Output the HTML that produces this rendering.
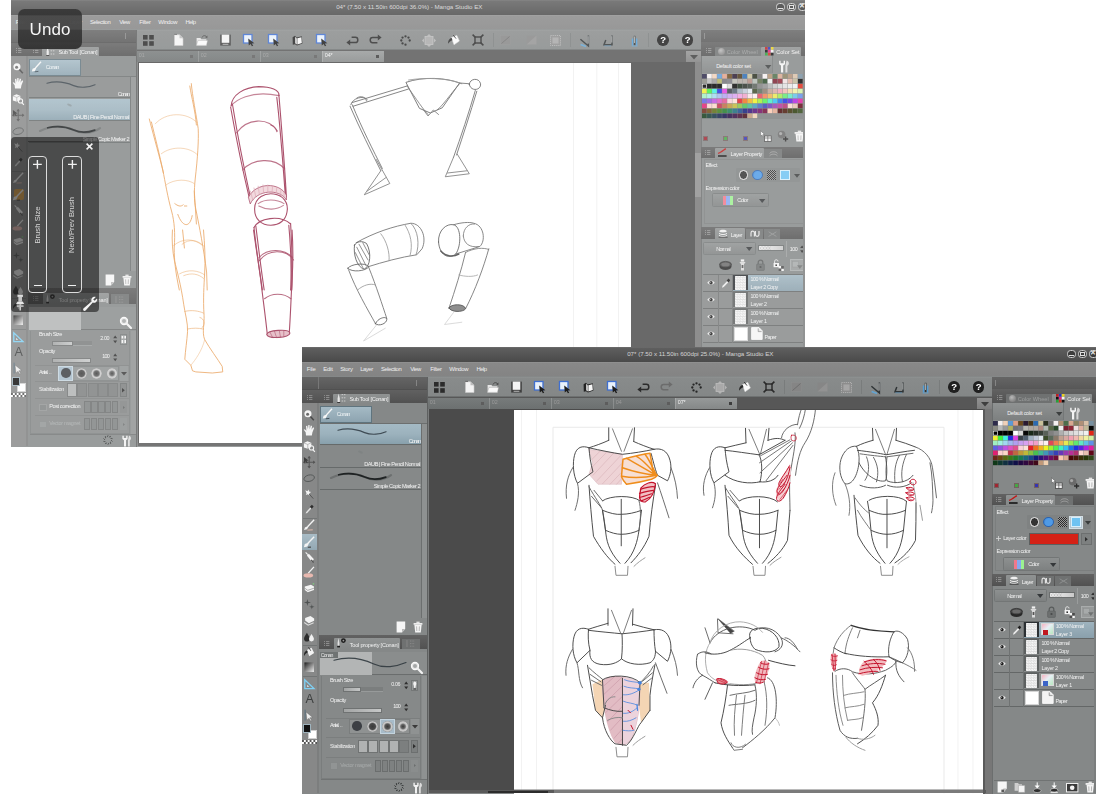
<!DOCTYPE html><html lang="en"><head><meta charset="utf-8"><title>Manga Studio EX</title><style>
html,body{margin:0;padding:0;background:#fff;}
body{width:1100px;height:800px;position:relative;overflow:hidden;font-family:"Liberation Sans",sans-serif;}
.win{position:absolute;width:794px;height:446.6px;overflow:hidden;background:#858888;}
.soft{filter:blur(0.45px);}
.win div,.win svg,.win span.t,.ov div,.ov svg,.ov span.t{position:absolute;box-sizing:border-box;}
.win svg,.ov svg{overflow:visible;}
span.t{white-space:nowrap;line-height:1;letter-spacing:-0.1px;}
.ov{position:absolute;left:0;top:0;width:1100px;height:800px;}
</style></head><body><div class="win" style="left:11.2px;top:0px;"><div class="soft" style="left:0;top:0;width:794px;height:447px;"><div style="left:0px;top:0px;width:795px;height:15.2px;background:linear-gradient(#707070 0,#5e5e5e 8%,#545454 55%,#4a4a4a);"></div><span class="t" style="left:325px;top:4.3px;font-size:6.2px;color:#d4d4d4;letter-spacing:-0.011px;">04* (7.50 x 11.50in 600dpi 36.0%) - Manga Studio EX</span><div style="left:765px;top:2.6px;width:9px;height:8.6px;border-radius:3.5px;background:#3c3c3c;border:0.8px solid #cfcfcf;"></div><div style="left:776px;top:2.6px;width:9px;height:8.6px;border-radius:3.5px;background:#3c3c3c;border:0.8px solid #cfcfcf;"></div><div style="left:787px;top:2.6px;width:9px;height:8.6px;border-radius:3.5px;background:#3c3c3c;border:0.8px solid #cfcfcf;"></div><div style="left:766.8px;top:7.8px;width:5.4px;height:1.6px;background:#e0e0e0;"></div><div style="left:778.3px;top:4.8px;width:4.6px;height:4.4px;border:1px solid #e0e0e0;"></div><span class="t" style="left:788.3px;top:2.8px;font-size:6.5px;color:#e8e8e8;font-weight:bold;">✕</span><div style="left:0px;top:15.2px;width:795px;height:14.3px;background:linear-gradient(#959595 0,#888 8%,#848484);"></div><span class="t" style="left:4.5px;top:20.4px;font-size:5.9px;color:#eeeeee;letter-spacing:-0.127px;">File</span><span class="t" style="left:21px;top:20.4px;font-size:5.9px;color:#eeeeee;letter-spacing:-0.167px;">Edit</span><span class="t" style="left:38px;top:20.4px;font-size:5.9px;color:#eeeeee;letter-spacing:-0.254px;">Story</span><span class="t" style="left:58px;top:20.4px;font-size:5.9px;color:#eeeeee;letter-spacing:-0.452px;">Layer</span><span class="t" style="left:78.7px;top:20.4px;font-size:5.9px;color:#eeeeee;letter-spacing:-0.419px;">Selection</span><span class="t" style="left:108px;top:20.4px;font-size:5.9px;color:#eeeeee;letter-spacing:-0.546px;">View</span><span class="t" style="left:128px;top:20.4px;font-size:5.9px;color:#eeeeee;letter-spacing:-0.269px;">Filter</span><span class="t" style="left:147px;top:20.4px;font-size:5.9px;color:#eeeeee;letter-spacing:-0.331px;">Window</span><span class="t" style="left:174.4px;top:20.4px;font-size:5.9px;color:#eeeeee;letter-spacing:-0.534px;">Help</span><div style="left:125px;top:29.5px;width:565px;height:20.7px;background:linear-gradient(#8f9292 0,#888b8b 8%,#848787);border-bottom:0.8px solid #6e7171;"></div><svg style="left:131.5px;top:34.5px;" width="11" height="11" viewBox="0 0 11 11"><rect x="0" y="0" width="4.6" height="4.6" fill="#2b2b2b"/><rect x="6.2" y="0" width="4.6" height="4.6" fill="#2b2b2b"/><rect x="0" y="6.2" width="4.6" height="4.6" fill="#2b2b2b"/><rect x="6.2" y="6.2" width="4.6" height="4.6" fill="#2b2b2b"/></svg><svg style="left:162.5px;top:34px;" width="10" height="12" viewBox="0 0 10 12"><path d="M0.5 0.8 L5.5 0.8 L9 4.2 L9 11.5 L0.5 11.5 Z" fill="#f4f4f4" stroke="#c9c9c9" stroke-width="0.6"/><path d="M5.5 0.8 L5.5 4.2 L9 4.2 Z" fill="#bdbdbd"/><path d="M0.2 0.4 L3 0.4" stroke="#555" stroke-width="0.8"/></svg><svg style="left:184.5px;top:34px;" width="12" height="12" viewBox="0 0 12 12"><path d="M0.6 4 L4.4 4 L5.4 5.2 L10.4 5.2 L10.4 11.4 L0.6 11.4 Z" fill="#e6e6e6"/><path d="M0.4 11.4 L2 6.4 L11.6 6.4 L10.4 11.4 Z" fill="#fafafa" stroke="#9a9a9a" stroke-width="0.4"/><path d="M6 3.6 C6.8 1.2 9.6 1 10.8 3.2" fill="none" stroke="#4a4a4a" stroke-width="1"/><path d="M11.6 1.6 L11.2 4.2 L9.2 3.2 Z" fill="#4a4a4a"/></svg><svg style="left:208.5px;top:34px;" width="11" height="12" viewBox="0 0 11 12"><rect x="0.2" y="0.6" width="10.6" height="11" fill="#3f3f3f"/><rect x="1.7" y="0.6" width="7.6" height="8.2" fill="#f4f4f4"/><rect x="2.6" y="9.7" width="5.8" height="1.3" fill="#9a9a9a"/></svg><svg style="left:232px;top:34px;" width="12" height="12" viewBox="0 0 12 12"><rect x="0.5" y="0.5" width="8.5" height="8.5" fill="#e9f1fb" stroke="#3f6fd0" stroke-width="1.3"/><path d="M5.2 4.6 L11.4 9.2 L8.8 9.4 L10.2 11.8 L8.9 12.3 L7.6 9.9 L5.8 11.6 Z" fill="#1c1c1c"/></svg><svg style="left:257px;top:34px;" width="12" height="12" viewBox="0 0 12 12"><rect x="0.5" y="0.5" width="8.5" height="8.5" fill="#e9f1fb" stroke="#3f6fd0" stroke-width="1.3"/><path d="M5.2 4.6 L11.4 9.2 L8.8 9.4 L10.2 11.8 L8.9 12.3 L7.6 9.9 L5.8 11.6 Z" fill="#1c1c1c"/></svg><svg style="left:281px;top:35px;" width="11" height="11" viewBox="0 0 11 11"><path d="M0.6 2.2 L3 0.8 L4.6 2.4 L9.8 1.2 L10.4 8.6 L5 10.4 L3 9.2 L0.8 9.8 Z" fill="#222"/><path d="M3.2 1.8 L4.8 3.4 L4.8 9.4 L3.2 8.2 Z" fill="#e9e9e9"/><path d="M5.4 3.2 L9.4 2.2 L9.8 8 L5.4 9.4 Z" fill="#f6f6f6"/></svg><svg style="left:305px;top:34px;" width="12" height="12" viewBox="0 0 12 12"><rect x="0.5" y="0.5" width="8.5" height="8.5" fill="#e9f1fb" stroke="#3f6fd0" stroke-width="1.3"/><path d="M5.2 4.6 L11.4 9.2 L8.8 9.4 L10.2 11.8 L8.9 12.3 L7.6 9.9 L5.8 11.6 Z" fill="#1c1c1c"/></svg><svg style="left:334.5px;top:35px;" width="13" height="11" viewBox="0 0 13 11"><path d="M3.4 7.6 L9.4 7.6 C12.6 7.6 12.6 2.2 9.4 2.2 L5.6 2.2" fill="none" stroke="#2b2b2b" stroke-width="1.5"/><path d="M4.2 4.6 L0.4 7.6 L4.2 10.6 Z" fill="#2b2b2b"/></svg><svg style="left:358px;top:34.4px;" width="13" height="11" viewBox="0 0 13 11"><path d="M9.6 3.4 L3.6 3.4 C0.4 3.4 0.4 8.8 3.6 8.8 L8.4 8.8" fill="none" stroke="#2b2b2b" stroke-width="1.5"/><path d="M8.8 0.4 L12.6 3.4 L8.8 6.4 Z" fill="#2b2b2b"/></svg><svg style="left:389px;top:34.5px;" width="11" height="11" viewBox="0 0 11 11"><circle cx="9.70" cy="5.50" r="1.15" fill="#262626"/><circle cx="5.50" cy="9.70" r="1.15" fill="#262626"/><circle cx="2.53" cy="8.47" r="1.15" fill="#262626"/><circle cx="1.30" cy="5.50" r="1.15" fill="#262626"/><circle cx="2.53" cy="2.53" r="1.15" fill="#262626"/><circle cx="5.50" cy="1.30" r="1.15" fill="#262626"/><circle cx="8.47" cy="2.53" r="1.15" fill="#262626"/></svg><svg style="left:411px;top:33.5px;" width="14" height="13" viewBox="0 0 14 13"><rect x="3" y="2.5" width="8" height="8" fill="#a9a9a9" stroke="#bdbdbd" stroke-width="0.8"/><path d="M7 0 L9 2 L5 2 Z M7 13 L9 11 L5 11 Z M0 6.5 L2 4.5 L2 8.5 Z M14 6.5 L12 4.5 L12 8.5 Z" fill="#b4b4b4"/></svg><svg style="left:435.5px;top:34px;" width="13" height="12" viewBox="0 0 13 12"><path d="M4.4 3.6 L9.8 1.4 L12.4 7 L7 10.8 Z" fill="#fafafa" stroke="#dedede" stroke-width="0.5"/><path d="M4.6 3.8 C2 5 0.6 7.4 1.2 9.8 C2.4 8 3.6 6.8 5.4 6.2 Z" fill="#2a2a2a"/><path d="M6.2 1 L9 4.6" stroke="#2a2a2a" stroke-width="0.9"/></svg><svg style="left:460.5px;top:34px;" width="12" height="12" viewBox="0 0 12 12"><rect x="3" y="3" width="6" height="6" fill="none" stroke="#2a2a2a" stroke-width="1.4"/><path d="M0.6 0.6 L3.4 3.4 M11.4 0.6 L8.6 3.4 M0.6 11.4 L3.4 8.6 M11.4 11.4 L8.6 8.6" stroke="#2a2a2a" stroke-width="1.5"/></svg><div style="left:482px;top:33px;width:0.8px;height:14px;background:#797c7c;"></div><div style="left:559px;top:33px;width:0.8px;height:14px;background:#797c7c;"></div><div style="left:637px;top:33px;width:0.8px;height:14px;background:#797c7c;"></div><svg style="left:489px;top:35px;" width="11" height="10" viewBox="0 0 11 10"><rect x="0.5" y="0.5" width="10" height="9" fill="#858585" stroke="#8d8d8d" stroke-width="0.6"/><path d="M1.5 8.5 L9.5 1.5" stroke="#6d6d6d" stroke-width="1"/></svg><svg style="left:514.5px;top:35px;" width="11" height="10" viewBox="0 0 11 10"><rect x="0.5" y="0.5" width="10" height="9" fill="#868686"/><path d="M0.5 9.5 L10.5 0.5 L10.5 9.5 Z" fill="#929292"/></svg><svg style="left:539px;top:34.5px;" width="11" height="11" viewBox="0 0 11 11"><rect x="0.5" y="0.5" width="10" height="10" fill="#8c8c8c" stroke="#b9b9b9" stroke-width="0.8" stroke-dasharray="1.2 0.9"/><rect x="2.4" y="2.4" width="6.2" height="6.2" fill="#a6a6a6"/></svg><svg style="left:567.5px;top:34.5px;" width="12" height="12" viewBox="0 0 12 12"><path d="M1.6 9.6 L7 11.6" stroke="#5aace6" stroke-width="1.6" opacity="0.8"/><path d="M1.4 4.2 L9.4 11 L9.4 0.6" fill="none" stroke="#2f3436" stroke-width="1.5"/><path d="M9.2 1.2 L9.2 8.6" stroke="#f2f2f2" stroke-width="0.6"/></svg><svg style="left:592px;top:34.5px;" width="12" height="12" viewBox="0 0 12 12"><path d="M2.8 5 L1 9.8 L9 9.8 L9 0.6" fill="none" stroke="#2f3436" stroke-width="1.5"/><path d="M8.8 1.2 L8.8 7.6" stroke="#f2f2f2" stroke-width="0.6"/><path d="M1.4 10.8 L8 10.8" stroke="#5aace6" stroke-width="0.8" opacity="0.6"/></svg><svg style="left:619px;top:34.5px;" width="9" height="12" viewBox="0 0 9 12"><path d="M2.6 3.4 L2.6 10.6 M6.6 3.4 L6.6 10.6" stroke="#4aa3e8" stroke-width="1.5" opacity="0.85"/><path d="M4.6 0.8 L4.6 10.2" stroke="#2f3436" stroke-width="1.7"/><path d="M4.5 1.4 L4.5 8" stroke="#f2f2f2" stroke-width="0.6"/><path d="M1.6 11 L7.6 11" stroke="#5aace6" stroke-width="0.9" opacity="0.7"/></svg><div style="left:646.2px;top:34.2px;width:11.6px;height:11.6px;border-radius:50%;background:#1f1f1f;"></div><span class="t" style="left:646.2px;top:35.1px;font-size:9.6px;color:#fff;width:11.6px;text-align:center;font-weight:bold;">?</span><div style="left:670.7px;top:34.2px;width:11.6px;height:11.6px;border-radius:50%;background:#1f1f1f;"></div><span class="t" style="left:670.7px;top:35.1px;font-size:9.6px;color:#fff;width:11.6px;text-align:center;font-weight:bold;">?</span><div style="left:125px;top:50.2px;width:565px;height:12px;background:#575757;"></div><div style="left:125px;top:50.6px;width:61.4px;height:11.6px;background:linear-gradient(#777b7b,#6c7070);border-left:0.6px solid rgba(255,255,255,0.18);"></div><span class="t" style="left:127.6px;top:53.4px;font-size:5.4px;color:#9a9a9a;">01</span><div style="left:179px;top:54.8px;width:3px;height:3px;background:#5d5d5d;"></div><div style="left:187px;top:50.6px;width:61.4px;height:11.6px;background:linear-gradient(#777b7b,#6c7070);border-left:0.6px solid rgba(255,255,255,0.18);"></div><span class="t" style="left:189.6px;top:53.4px;font-size:5.4px;color:#9a9a9a;">02</span><div style="left:241px;top:54.8px;width:3px;height:3px;background:#5d5d5d;"></div><div style="left:249px;top:50.6px;width:61.4px;height:11.6px;background:linear-gradient(#777b7b,#6c7070);border-left:0.6px solid rgba(255,255,255,0.18);"></div><span class="t" style="left:251.6px;top:53.4px;font-size:5.4px;color:#9a9a9a;">03</span><div style="left:303px;top:54.8px;width:3px;height:3px;background:#5d5d5d;"></div><div style="left:311px;top:50.6px;width:61.4px;height:11.6px;background:linear-gradient(#969999,#858888);border-left:0.6px solid rgba(255,255,255,0.18);"></div><span class="t" style="left:313.6px;top:53.4px;font-size:5.4px;color:#f2f2f2;">04*</span><div style="left:365px;top:54.8px;width:3px;height:3px;background:#3c3c3c;"></div><div style="left:675px;top:50.8px;width:15px;height:11.4px;background:linear-gradient(#929292,#7f7f7f);"></div><svg style="left:678.5px;top:54.5px;" width="8" height="5" viewBox="0 0 8 5"><path d="M0 0 L8 0 L4 4.6 Z" fill="#3e3e3e"/></svg><div style="left:125px;top:62.2px;width:565px;height:384px;background:#4b4b4b;"></div><div style="left:125px;top:62.2px;width:2px;height:384px;background:#7a7c7c;"></div><div style="left:684px;top:62.2px;width:6px;height:385px;background:#777;"></div><div style="left:684px;top:153px;width:6px;height:44px;background:#8e8e8e;"></div><div style="left:128px;top:63px;width:492px;height:383px;background:#fff;overflow:hidden;"><svg style="left:0px;top:0px;" width="492" height="383" viewBox="139.2 63 492 383"><path d="M573.7 63 L573.7 446" stroke="#ececec" stroke-width="0.8"/><path d="M597 63 L597 446" stroke="#ececec" stroke-width="0.8"/><path d="M618.7 63 L618.7 446" stroke="#ececec" stroke-width="0.8"/><g transform="translate(130 50) scale(0.30000)" fill="none" stroke="#e79a4e" stroke-width="2.83" stroke-linecap="round" stroke-linejoin="round" ><path d="M205,112 C208,150 222,220 228,262 C230,300 226,360 218,430 C214,470 214,500 220,530 C232,590 246,660 256,740 L258,800"/><path d="M200,120 C206,160 218,200 222,250"/><path d="M65,230 C75,270 92,330 110,400 C118,440 126,490 140,540 C148,570 152,610 148,660 C148,700 152,740 165,800"/><path d="M72,240 C84,290 100,350 112,410"/><path d="M85,246 C120,206 190,206 224,242" opacity="0.55"/><path d="M105,346 C140,318 200,322 226,350" opacity="0.55"/><path d="M120,450 C150,428 195,430 216,446" opacity="0.55"/><path d="M150,512 C160,520 170,524 178,516 M160,548 C175,590 200,596 208,552 M182,520 L190,520 M215,470 L222,580"/><path d="M146,652 C175,626 215,628 240,650" opacity="0.6"/><path d="M166,746 C195,730 228,734 250,750" opacity="0.6"/><path d="M176,600 L182,660"/></g><g transform="translate(130 230) scale(0.27500)" fill="none" stroke="#e79a4e" stroke-width="3.09" stroke-linecap="round" stroke-linejoin="round" ><path d="M155,0 C152,40 156,80 162,110 C172,150 186,200 196,270 C200,300 212,340 210,370 C208,400 202,440 200,470 L222,492 L228,512 L240,516 L300,520 L338,516 L336,496 C320,470 290,430 272,398 C262,372 272,340 270,310 C266,250 270,200 272,160 C276,110 272,50 268,0"/><path d="M190,52 C215,30 250,36 270,60" opacity="0.6"/><path d="M196,166 C225,154 250,160 268,176" opacity="0.6"/><path d="M200,296 C225,290 250,294 268,302 M210,360 C230,356 250,356 266,360" opacity="0.7"/><path d="M255,318 C272,322 276,346 262,356" opacity="0.7"/><path d="M222,492 C240,470 262,440 272,400" opacity="0.5"/></g><g transform="translate(130 50) scale(0.30000)" fill="none" stroke="#9c3050" stroke-width="3.67" stroke-linecap="round" stroke-linejoin="round" ><path d="M338,186 C340,150 380,124 430,122 C470,122 500,134 497,152"/><path d="M338,186 C350,170 400,132 497,152" opacity="0.7"/><path d="M336,190 C352,280 376,400 398,492 M342,180 C360,290 384,410 404,500"/><path d="M497,150 C506,260 516,380 522,490 M490,158 C502,260 512,400 518,480"/><path d="M356,276 C390,228 460,222 492,270" opacity="0.8"/><path d="M470,250 C482,254 488,262 490,272" opacity="0.8"/><path d="M376,400 C410,362 480,356 516,396" opacity="0.8"/><path d="M396,490 C420,440 500,440 522,484 L522,500 C500,462 424,464 402,512 Z" fill="#f0d2d8" stroke-width="2.6"/><path d="M402,470 L410,500 M414,460 L420,490 M428,454 L432,482 M444,450 L446,476 M460,450 L460,474 M476,452 L474,476 M490,458 L488,480 M504,466 L502,486 M514,474 L514,492" stroke-width="2.4" stroke="#d59aa8"/><path d="M416,530 C416,490 452,476 480,480 C512,484 530,510 524,540 C520,566 500,584 470,584 C440,584 416,566 416,530 Z"/><path d="M428,512 C450,496 490,496 514,512 M430,520 C455,534 490,534 512,518" opacity="0.7"/><path d="M414,592 C430,560 500,548 536,580"/><path d="M414,592 C420,650 430,720 442,800 M420,586 C428,650 436,720 448,800"/><path d="M536,578 C540,650 544,720 540,800 M530,584 C536,650 540,720 536,800"/><path d="M432,702 C460,664 520,662 546,700" opacity="0.85"/></g><g transform="translate(130 230) scale(0.27500)" fill="none" stroke="#9c3050" stroke-width="4.00" stroke-linecap="round" stroke-linejoin="round" ><path d="M450,0 C458,60 468,120 476,180 C484,250 494,320 500,380"/><path d="M590,0 C594,60 594,120 590,180 C586,250 584,320 580,372"/><path d="M470,100 C500,66 560,66 592,100" opacity="0.85"/><path d="M490,250 C515,228 560,228 586,250" opacity="0.85"/><path d="M498,380 C500,364 578,358 582,374 C584,392 504,398 498,380 Z" fill="#e3b5c0"/><path d="M510,372 L520,392 M526,368 L534,392 M544,368 L548,390 M560,368 L560,388" stroke-width="2"/></g><g transform="translate(330 50) scale(0.37500)" fill="none" stroke="#4c4c4c" stroke-width="2.27" stroke-linecap="round" stroke-linejoin="round" ><path d="M56,146 C60,128 90,120 100,132 M60,140 L206,96 M62,150 L210,104" stroke="#555"/><path d="M72,128 C84,120 96,126 98,136" stroke="#666"/><path d="M204,86 C250,70 310,74 346,88 L300,154 L268,168 L240,156 Z" stroke="#4a4a4a"/><path d="M206,96 C230,130 250,160 262,172 M346,90 C320,120 300,150 286,160 M250,160 L262,176 L276,160 L290,172" stroke="#666"/><path d="M210,80 C260,72 320,76 352,90" stroke="#888"/><path d="M372,92 C372,76 398,72 402,90 C404,108 376,112 372,92 Z" stroke="#4a4a4a"/><path d="M346,88 L372,90" stroke="#555"/><path d="M54,150 C80,210 110,270 136,322 M60,146 C86,210 116,268 140,316" stroke="#555"/><path d="M136,322 L92,386 L160,356 L124,292 M100,376 L150,340" stroke="#666"/><path d="M388,108 C370,170 350,230 330,286 M392,110 C374,170 356,226 338,280" stroke="#555"/><path d="M330,286 L308,338 L372,330 L340,278 M314,328 L366,322" stroke="#666"/><path d="M66,520 C62,544 72,580 92,584 C108,578 112,540 98,516 C86,508 72,510 66,520 Z" stroke="#3c3c3c"/><path d="M72,526 L96,574 M78,518 L102,560 M68,540 L88,580 M88,514 L106,548" stroke="#666"/><path d="M70,514 C120,486 170,470 216,462 C244,462 260,500 246,530 L232,546 C190,552 140,566 102,578" stroke="#555"/><path d="M136,490 C152,510 160,540 158,562 M200,466 C216,490 222,520 214,548" stroke="#888"/><path d="M216,462 C236,480 240,520 230,546" stroke="#777"/><path d="M48,582 C56,570 96,566 104,578 C96,590 58,594 48,582 Z" stroke="#444"/><path d="M50,586 C70,640 100,690 122,730 M104,580 C124,630 140,680 152,716" stroke="#555"/><path d="M122,730 C126,716 150,708 152,718 C152,730 130,738 122,730 Z" stroke="#3c3c3c"/><path d="M74,640 C90,626 108,622 120,626" stroke="#888"/><path d="M124,734 L90,776 L148,742" stroke="#ccc"/><path d="M290,512 C288,480 312,462 330,466 C350,470 352,520 336,544 C316,560 292,546 290,512 Z" stroke="#444"/><path d="M330,466 C350,460 372,458 384,462 C412,468 416,510 400,524 L336,544" stroke="#555"/><path d="M356,496 C356,474 372,462 386,464 M356,496 C358,516 372,528 398,524" stroke="#666"/><path d="M296,536 C310,552 330,552 344,544" stroke="#444" stroke-width="4"/><path d="M362,540 C350,590 334,640 318,688 M424,530 C410,580 388,640 362,690" stroke="#555"/><path d="M362,540 C384,528 410,526 424,532" stroke="#666"/><path d="M318,688 C322,676 360,676 362,690 C356,700 322,700 318,688 Z" stroke="#333" fill="#777"/><path d="M344,600 C360,604 380,606 394,600" stroke="#999"/><path d="M330,700 L306,732 L352,726" stroke="#ccc"/></g></svg></div><div style="left:127px;top:443.4px;width:557px;height:2.8px;background:#5a5a5a;"></div><div style="left:0px;top:29.5px;width:124.6px;height:12.7px;background:linear-gradient(#656565,#575757);"></div><div style="left:15.6px;top:30px;width:0.7px;height:26px;background:#787878;"></div><div style="left:114px;top:33px;width:0.8px;height:6px;background:#858585;"></div><div style="left:0px;top:42.2px;width:124.6px;height:14px;background:linear-gradient(#626262,#515151);"></div><div style="left:0px;top:42.2px;width:124.6px;height:0.7px;background:#505050;"></div><svg style="left:4.4px;top:47.5px;" width="5.4" height="5" viewBox="0 0 5.4 5"><path d="M0 0.6 L1 0.6 M2 0.6 L5.4 0.6 M0 2.5 L1 2.5 M2 2.5 L5.4 2.5 M0 4.4 L1 4.4 M2 4.4 L5.4 4.4" stroke="#9c9c9c" stroke-width="0.8"/></svg><svg style="left:22px;top:47.5px;" width="5.4" height="5" viewBox="0 0 5.4 5"><path d="M0 0.6 L1 0.6 M2 0.6 L5.4 0.6 M0 2.5 L1 2.5 M2 2.5 L5.4 2.5 M0 4.4 L1 4.4 M2 4.4 L5.4 4.4" stroke="#9c9c9c" stroke-width="0.8"/></svg><div style="left:30.8px;top:46.5px;width:57px;height:10px;background:linear-gradient(#8f9292,#858888);border-radius:1px 1px 0 0;"></div><svg style="left:33.6px;top:46.2px;" width="11" height="11" viewBox="0 0 11 11"><path d="M2.6 0.4 L3.8 5.6 L3.8 9.4 L1.6 9.4 L1.6 5.6 Z" fill="#e8e8e8"/><rect x="1.2" y="9.2" width="3" height="1.6" fill="#1c1c1c"/><path d="M5.6 1.6 L10 1.6 M5.6 4.8 L10 4.8 M5.6 8 L10 8" stroke="#d0d0d0" stroke-width="0.9" stroke-dasharray="1.5 0.8"/></svg><span class="t" style="left:47.2px;top:50.3px;font-size:5.7px;color:#f2f2f2;letter-spacing:-0.289px;">Sub Tool [Conan]</span><div style="left:0px;top:56.2px;width:15px;height:390px;background:#878888;"></div><div style="left:15px;top:56.2px;width:1.6px;height:390px;background:#7c7e7e;"></div><div style="left:2.4px;top:189.3px;width:10.4px;height:10.4px;background:#e0a040;border-radius:2px;"></div><svg style="left:1.3px;top:61.8px;" width="12.4" height="12.4" viewBox="0 0 14 14"><circle cx="5.6" cy="5.4" r="4" fill="#f4f4f4"/><circle cx="5.2" cy="5.8" r="1.7" fill="#6a6a6a"/><path d="M8.4 8.4 L12.2 12.6" stroke="#4a4a4a" stroke-width="1.7"/></svg><svg style="left:1.3px;top:76.8px;" width="12.4" height="12.4" viewBox="0 0 14 14"><path d="M3.4 13 L3 9.4 L0.8 6.6 L2 6 L3.8 7.6 L3.4 2.2 L4.8 2 L5.6 5.8 L6 1 L7.4 1 L7.6 5.8 L8.8 1.8 L10.2 2.2 L9.6 6.4 L11.4 3.8 L12.6 4.6 L10.6 9.6 L10 13 Z" fill="#f4f4f4"/></svg><svg style="left:1.3px;top:92.8px;" width="12.4" height="12.4" viewBox="0 0 14 14"><path d="M1 3.4 L5 1.4 L9.4 3 L9.4 8 L5.4 10 L1 8.4 Z" fill="#f4f4f4"/><path d="M1 3.4 L5.4 5 L9.4 3 M5.4 5 L5.4 10" stroke="#8a8a8a" stroke-width="0.6" fill="none"/><circle cx="9.6" cy="9" r="2.4" fill="none" stroke="#f4f4f4" stroke-width="1.2"/><path d="M11.2 10.8 L13.4 13.4" stroke="#f4f4f4" stroke-width="1.4"/></svg><svg style="left:1.3px;top:108.8px;" width="12.4" height="12.4" viewBox="0 0 14 14"><path d="M7 0.6 L7 13.4 M0.6 7 L13.4 7" stroke="#555" stroke-width="1.2"/><path d="M7 0 L9 2.6 L5 2.6 Z M7 14 L9 11.4 L5 11.4 Z M0 7 L2.6 5 L2.6 9 Z M14 7 L11.4 5 L11.4 9 Z" fill="#555"/><path d="M1 1 L6.4 5.2 L4 5.4 L5.4 8 L4.4 8.6 L3 6 L1.4 7.8 Z" fill="#3c3c3c"/></svg><svg style="left:1.3px;top:124.8px;" width="12.4" height="12.4" viewBox="0 0 14 14"><ellipse cx="7" cy="7" rx="6" ry="3.6" fill="none" stroke="#565959" stroke-width="1" transform="rotate(-14 7 7)"/></svg><svg style="left:1.3px;top:140.8px;" width="12.4" height="12.4" viewBox="0 0 14 14"><path d="M2.6 2.6 L5 3.6 L6.4 1.6 L6.8 4 L9.2 4.6 L7.2 6 L7.4 8.4 L5.4 7 L3.2 8 L4 5.8 Z" fill="#f4f4f4"/><path d="M7 6.8 L11.6 12" stroke="#555" stroke-width="1.1"/></svg><svg style="left:1.3px;top:155.8px;" width="12.4" height="12.4" viewBox="0 0 14 14"><path d="M3 12 L3.6 10.2 L8.2 5 L9.4 6.2 L4.8 11.4 Z" fill="#e4e4e4"/><path d="M7.8 4.2 L10 2 L12 4 L10 6.4 Z" fill="#2e2e2e"/></svg><svg style="left:1.3px;top:172.3px;" width="12.4" height="12.4" viewBox="0 0 14 14"><path d="M12.6 0.8 L5.4 8.4" stroke="#f4f4f4" stroke-width="1.5"/><path d="M5.6 8 L2.2 9.6 L1.2 12.4 L4.6 11.6 L6.2 8.8 Z" fill="#f4f4f4"/><path d="M5 12.6 L11 12.2" stroke="#c3a9a0" stroke-width="1.6"/></svg><svg style="left:1.3px;top:188.5px;" width="12.4" height="12.4" viewBox="0 0 14 14"><path d="M12.6 0.8 L5.6 8.2" stroke="#f4f4f4" stroke-width="1.6"/><path d="M5.8 7.6 L2 9 L1 12.6 L5 12 L6.6 8.6 Z" fill="#f4f4f4"/><path d="M5.4 12.8 L9 12.6" stroke="#444" stroke-width="1.2"/></svg><svg style="left:1.3px;top:203.8px;" width="12.4" height="12.4" viewBox="0 0 14 14"><path d="M3 1.6 L5.4 4" stroke="#f4f4f4" stroke-width="1.2"/><path d="M4.4 5.2 L6.6 3 L12.4 9.4 L9.6 12 Z" fill="#f4f4f4"/><path d="M9 10 L12 13" stroke="#555" stroke-width="1.4"/></svg><svg style="left:1.3px;top:218.8px;" width="12.4" height="12.4" viewBox="0 0 14 14"><path d="M12.4 1 L6 8" stroke="#f4f4f4" stroke-width="1.5"/><ellipse cx="6" cy="10.6" rx="5.4" ry="2.4" fill="#e9b9b0"/></svg><svg style="left:1.3px;top:235.3px;" width="12.4" height="12.4" viewBox="0 0 14 14"><path d="M2 5 L9 3 L12.4 5.2 L12.4 9 L5.4 11.6 L2 9 Z" fill="#f4f4f4"/><path d="M2 7 L5.4 9.4 L12.4 7" fill="none" stroke="#8c8c8c" stroke-width="0.8"/><circle cx="11.8" cy="2" r="1" fill="#7fc27f"/></svg><svg style="left:1.3px;top:250.8px;" width="12.4" height="12.4" viewBox="0 0 14 14"><path d="M5 1 L5.8 4.2 L9 5 L5.8 5.8 L5 9 L4.2 5.8 L1 5 L4.2 4.2 Z M10 7 L10.6 9.4 L13 10 L10.6 10.6 L10 13 L9.4 10.6 L7 10 L9.4 9.4 Z" fill="#4f5252"/></svg><svg style="left:1.3px;top:266.8px;" width="12.4" height="12.4" viewBox="0 0 14 14"><path d="M2.4 4.4 L8.4 2.4 L12.6 5 L12.6 7.6 L6.6 10.4 L2.4 7.4 Z" fill="#f4f4f4"/><path d="M1.4 9.6 L5.8 12.6 L12 9.8" fill="none" stroke="#dcdcdc" stroke-width="1.3"/></svg><svg style="left:1.3px;top:282.8px;" width="12.4" height="12.4" viewBox="0 0 14 14"><path d="M4.4 3 C6.4 6.4 7.6 8 7.6 9.8 A3.2 3.2 0 0 1 1.2 9.8 C1.2 8 2.4 6.4 4.4 3 Z" fill="#2c2c2c"/><path d="M9.6 4.6 C11 7 12.4 8.6 12.4 10.2 A2.8 2.8 0 0 1 6.8 10.2 C6.8 8.6 8.2 7 9.6 4.6 Z" fill="#f0f0f0"/></svg><svg style="left:1.3px;top:299.3px;" width="12.4" height="12.4" viewBox="0 0 14 14"><path d="M4.4 4.6 L9.6 2 L12.6 7.8 L7 11.6 Z" fill="#f4f4f4"/><path d="M4.6 4.8 C2 6 0.6 8.4 1.2 11.4 C2.4 9.4 3.6 8 5.4 7.2 Z" fill="#2a2a2a"/><path d="M6.2 1.4 L8.8 5.4" stroke="#2a2a2a" stroke-width="0.9"/></svg><svg style="left:1.3px;top:314.3px;" width="12.4" height="12.4" viewBox="0 0 14 14"><defs><linearGradient id="tg" x1="0" y1="0" x2="1" y2="1"><stop offset="0" stop-color="#1e1e1e"/><stop offset="1" stop-color="#f0f0f0"/></linearGradient></defs><rect x="1.6" y="1.6" width="10.8" height="10.8" fill="url(#tg)"/></svg><svg style="left:1.3px;top:330.8px;" width="12.4" height="12.4" viewBox="0 0 14 14"><path d="M2 2 L2 12 L12.4 12 Z" fill="none" stroke="#7fd0f4" stroke-width="1.5"/><path d="M4.6 7.8 L4.6 9.8 L7 9.8 Z" fill="#e8f6ff"/></svg><svg style="left:1.3px;top:362.3px;" width="12.4" height="12.4" viewBox="0 0 14 14"><path d="M2.4 0.8 L2.4 13" stroke="#4a6a7c" stroke-width="0.9"/><path d="M3.4 3.4 L11 9.6 L7.8 9.8 L9.8 13 L8.6 13.6 L6.8 10.4 L4.6 12.4 Z" fill="#f0f0f0" stroke="#555" stroke-width="0.4"/></svg><span class="t" style="left:1px;top:346px;font-size:12.5px;color:#3e4040;width:13px;text-align:center;font-family:"Liberation Serif",serif;">A</span><div style="left:0.5px;top:170.5px;width:14px;height:0.8px;background:#727575;"></div><div style="left:0.5px;top:297.5px;width:14px;height:0.8px;background:#727575;"></div><div style="left:0.5px;top:328.5px;width:14px;height:0.8px;background:#727575;"></div><div style="left:5.4px;top:382.6px;width:9.4px;height:9.6px;background:#fff;border:0.5px solid #cfcfcf;"></div><div style="left:0.6px;top:377.4px;width:8.4px;height:8.2px;background:#111;border:0.8px solid #9fb3bd;"></div><div style="left:0px;top:393px;width:15px;height:3.8px;background:repeating-conic-gradient(#fff 0 25%,#555 0 50%) 0 0/3.8px 3.8px;"></div><div style="left:16.6px;top:56.2px;width:108px;height:232.6px;background:#858888;"></div><div style="left:17.4px;top:59.4px;width:52px;height:16.4px;background:linear-gradient(#a5bac5,#8da4b0);border:0.7px solid #5f747e;"></div><svg style="left:20px;top:61.4px;" width="11" height="12" viewBox="0 0 11 12"><path d="M10 0.8 L4.4 7" stroke="#f6f6f6" stroke-width="1.3"/><path d="M4.6 6.6 L1.6 7.8 L0.8 10.4 L3.8 10 L5.2 7.4 Z" fill="#f6f6f6"/><path d="M3.8 10.8 L7.4 10.4" stroke="#41505a" stroke-width="1"/></svg><span class="t" style="left:34.6px;top:65.4px;font-size:5.6px;color:#f0f4f6;letter-spacing:-0.701px;">Conan</span><div style="left:17.6px;top:76.4px;width:107px;height:0.7px;background:#6c6f6f;"></div><div style="left:17.6px;top:77px;width:101.2px;height:21.4px;background:#868989;border-bottom:0.8px solid #666a6a;"></div><svg style="left:34px;top:79.5px;" width="52" height="9" viewBox="0 0 52 9"><path d="M2 3.24 C13 0.18,21.84 2.7,28.6 5.58 S44.2 7.2,50 4.68" fill="none" stroke="#2f3a42" stroke-width="1.2" stroke-linecap="round" opacity="0.85"/></svg><span class="t" style="left:106.5px;top:92.1px;font-size:5.6px;color:#f4f4f4;letter-spacing:-1.001px;">Conan</span><div style="left:17.6px;top:98.6px;width:101.2px;height:22.2px;background:linear-gradient(#a4bac5,#9cb2bd 50%,#88a0ac);border-bottom:0.8px solid #666a6a;"></div><div style="left:56px;top:103.6px;width:5px;height:2px;background:rgba(120,125,125,0.5);border-radius:50%;transform:rotate(25deg);"></div><span class="t" style="left:62px;top:114.5px;font-size:5.6px;color:#f4f4f4;letter-spacing:-0.457px;">DAUB | Fine Pencil Normal</span><div style="left:17.6px;top:121px;width:101.2px;height:22px;background:#868989;border-bottom:0.8px solid #666a6a;"></div><svg style="left:28px;top:123.5px;" width="62" height="10.5" viewBox="0 0 62 10.5"><path d="M1 6.93 C13.64 1.05,26.04 1.89,34.72 6.09 S53.32 9.66,61 4.2" fill="none" stroke="#1e2224" stroke-width="2.2" stroke-linecap="round" opacity="0.25"/><path d="M8.68 3.78 C18.6 1.47,27.28 2.73,34.72 6.09 S48.36 8.82,55.8 6.09" fill="none" stroke="#16191b" stroke-width="1.7" stroke-linecap="round" opacity="0.9"/></svg><span class="t" style="left:71.5px;top:136.7px;font-size:5.6px;color:#f4f4f4;letter-spacing:-0.483px;">Simple Copic Marker 2</span><div style="left:118.9px;top:77px;width:0.7px;height:194px;background:#6c6f6f;"></div><div style="left:119.6px;top:77px;width:5px;height:194px;background:#8e9191;"></div><svg style="left:94px;top:274px;" width="10" height="12" viewBox="0 0 10 12"><path d="M0.6 0.6 L9.2 0.6 L9.2 8 L6 11.4 L0.6 11.4 Z" fill="#f6f6f6"/><path d="M9.2 8 L6 8 L6 11.4 Z" fill="#b9b9b9"/></svg><svg style="left:111px;top:274px;" width="10" height="12" viewBox="0 0 10 12"><path d="M1.4 4 L8.6 4 L7.8 11.4 L2.2 11.4 Z" fill="#f4f4f4"/><rect x="0.6" y="2" width="8.8" height="1.8" fill="#ededed"/><rect x="3.4" y="0.6" width="3.2" height="1.4" fill="#e2e2e2"/><path d="M3.6 5.4 L3.8 10 M6.4 5.4 L6.2 10" stroke="#9c9c9c" stroke-width="0.7"/></svg><div style="left:16.6px;top:288.4px;width:108px;height:15.6px;background:linear-gradient(#626262,#515151);"></div><svg style="left:22px;top:296px;" width="5.4" height="5" viewBox="0 0 5.4 5"><path d="M0 0.6 L1 0.6 M2 0.6 L5.4 0.6 M0 2.5 L1 2.5 M2 2.5 L5.4 2.5 M0 4.4 L1 4.4 M2 4.4 L5.4 4.4" stroke="#9c9c9c" stroke-width="0.8"/></svg><div style="left:31.7px;top:293px;width:66.6px;height:11px;background:linear-gradient(#8f9292,#858888);border-radius:1px 1px 0 0;"></div><svg style="left:34px;top:292.6px;" width="11" height="11" viewBox="0 0 11 11"><path d="M2.4 1 L3.4 6 L3.4 9 L1.6 9 L1.6 6 Z" fill="#e2e2e2"/><rect x="1.2" y="8.8" width="2.8" height="1.6" fill="#1c1c1c"/><circle cx="7.4" cy="3.6" r="2.4" fill="#1c1c1c"/><circle cx="7.4" cy="3.6" r="0.9" fill="#9a9a9a"/></svg><span class="t" style="left:47.5px;top:298px;font-size:5.6px;color:#f0f0f0;letter-spacing:-0.216px;">Tool property [Conan]</span><div style="left:100px;top:294px;width:18px;height:10px;background:#6f7171;"></div><svg style="left:104px;top:295.6px;" width="10" height="7" viewBox="0 0 10 7"><path d="M1 0 L1 7" stroke="#8c8c8c" stroke-width="0.8"/><path d="M4 1 L9 1 M4 3.6 L9 3.6 M4 6.2 L9 6.2" stroke="#8a8a8a" stroke-width="0.9" stroke-dasharray="1.4 1"/></svg><div style="left:17.6px;top:306.5px;width:107px;height:23.5px;background:#8a8d8d;border-bottom:0.8px solid #6a6d6d;"></div><div style="left:17.6px;top:306.5px;width:52.6px;height:23.5px;background:#b3b5b5;"></div><svg style="left:108px;top:315.9px;" width="13" height="13" viewBox="0 0 13 13"><circle cx="5" cy="5" r="3.6" fill="#e6e6e6" stroke="#fafafa" stroke-width="1.1"/><circle cx="5" cy="5" r="2" fill="#a4a7a7"/><path d="M7.8 7.8 L12 12" stroke="#f2f2f2" stroke-width="2.2" stroke-linecap="round"/></svg><div style="left:18.9px;top:330.8px;width:100px;height:103.2px;background:#868989;border:0.6px solid #7a7d7d;border-top:none;"></div><div style="left:119.6px;top:330.8px;width:5px;height:103.2px;background:#8e9191;"></div><span class="t" style="left:27.8px;top:332px;font-size:5.6px;color:#f2f2f2;letter-spacing:-0.408px;">Brush Size</span><div style="left:41px;top:341px;width:40px;height:5.2px;background:#7b7e7e;border-bottom:0.6px solid #979a9a;"></div><div style="left:41px;top:341px;width:21px;height:5.2px;background:linear-gradient(90deg,#a2a4a4,#c4c6c6);border:0.5px solid #6f7272;"></div><span class="t" style="left:89px;top:336px;font-size:5.4px;color:#f0f0f0;letter-spacing:-0.378px;">2.00</span><svg style="left:102px;top:335.4px;" width="4.4" height="8.6" viewBox="0 0 4.4 8.6"><path d="M2.2 0.4 L4.2 3.2 L0.2 3.2 Z M2.2 8.2 L4.2 5.4 L0.2 5.4 Z" fill="#2e2e2e"/></svg><div style="left:108.4px;top:334.4px;width:7.6px;height:10.6px;background:#959898;border:0.5px solid #747777;"></div><svg style="left:109.4px;top:335.2px;" width="5.6" height="9" viewBox="0 0 5.6 9"><path d="M0.6 1 L2.2 1 L2.2 3.4 L0.6 3.4 Z M3.4 1 L5 1 L5 3.4 L3.4 3.4 Z M0.6 5 L2.2 5 L2.2 8 L0.6 8 Z M3.4 5 L5 5 L5 8 L3.4 8 Z" fill="#f4f4f4"/></svg><span class="t" style="left:27.8px;top:349.3px;font-size:5.6px;color:#f2f2f2;letter-spacing:-0.426px;">Opacity</span><div style="left:41px;top:358px;width:38.4px;height:5px;background:linear-gradient(90deg,#a2a4a4,#c6c8c8);border:0.5px solid #6f7272;"></div><span class="t" style="left:91px;top:354px;font-size:5.4px;color:#f0f0f0;letter-spacing:-0.670px;">100</span><svg style="left:102px;top:353px;" width="4.4" height="8.6" viewBox="0 0 4.4 8.6"><path d="M2.2 0.4 L4.2 3.2 L0.2 3.2 Z M2.2 8.2 L4.2 5.4 L0.2 5.4 Z" fill="#2e2e2e"/></svg><div style="left:24px;top:364.8px;width:94px;height:0.6px;background:#7b7e7e;"></div><span class="t" style="left:27.8px;top:370.25px;font-size:5.5px;color:#f0f0f0;letter-spacing:-1.136px;">Anti-al…</span><div style="left:46.4px;top:366px;width:61.4px;height:14.5px;background:#8f9292;border:0.5px solid #7a7d7d;"></div><div style="left:46.9px;top:366px;width:15.4px;height:14.5px;background:#a7bbc9;border:0.6px solid #c4d4de;"></div><div style="left:49.8px;top:368.45px;width:9.6px;height:9.6px;border-radius:50%;background:#3c3f44;"></div><div style="left:64.6px;top:367.85px;width:10.8px;height:10.8px;border-radius:50%;background:radial-gradient(circle,#3a3a3a 0,#4a4a4a 3.0px,#c9c9c9 4.4px,#c4c4c4 4.800000000000001px,#9a9a9a 5.4px);"></div><div style="left:80px;top:367.85px;width:10.8px;height:10.8px;border-radius:50%;background:radial-gradient(circle,#3a3a3a 0,#5a5a5a 2.6px,#c9c9c9 4.0px,#c4c4c4 4.800000000000001px,#9a9a9a 5.4px);"></div><div style="left:95.4px;top:367.85px;width:10.8px;height:10.8px;border-radius:50%;background:radial-gradient(circle,#3a3a3a 0,#6a6a6a 2.2px,#c9c9c9 3.6px,#c4c4c4 4.800000000000001px,#9a9a9a 5.4px);"></div><div style="left:108.4px;top:366px;width:8px;height:14.5px;background:#8f9292;"></div><svg style="left:109.4px;top:371.65px;" width="6" height="4" viewBox="0 0 6 4"><path d="M0 0 L6 0 L3 3.6 Z" fill="#3a3a3a"/></svg><div style="left:24px;top:380.8px;width:94px;height:0.6px;background:#7b7e7e;"></div><span class="t" style="left:27.8px;top:387.25px;font-size:5.5px;color:#f0f0f0;letter-spacing:-0.358px;">Stabilization</span><div style="left:55.6px;top:383px;width:10px;height:13.5px;background:#b0b2b2;border:0.6px solid #707373;"></div><div style="left:66px;top:383px;width:10px;height:13.5px;background:#7c7f7f;border:0.6px solid #707373;"></div><div style="left:76.4px;top:383px;width:10px;height:13.5px;background:#7c7f7f;border:0.6px solid #707373;"></div><div style="left:86.8px;top:383px;width:10px;height:13.5px;background:#7c7f7f;border:0.6px solid #707373;"></div><div style="left:97.2px;top:383px;width:10px;height:13.5px;background:#7c7f7f;border:0.6px solid #707373;"></div><div style="left:108.6px;top:383px;width:7.6px;height:13.5px;background:#7c7f7f;border:0.5px solid #6c6f6f;"></div><svg style="left:111px;top:387.65px;" width="3" height="4.4" viewBox="0 0 3 4.4"><path d="M0 0 L2.8 2.2 L0 4.4 Z" fill="#2e2e2e"/></svg><div style="left:24px;top:398.4px;width:94px;height:0.6px;background:#7b7e7e;"></div><div style="left:28px;top:403.6px;width:7.4px;height:7.4px;background:#7f8282;border:0.6px solid #929595;"></div><span class="t" style="left:38px;top:404.1px;font-size:5.6px;color:#f2f2f2;letter-spacing:-0.423px;">Post correction</span><div style="left:73px;top:400.6px;width:6.6px;height:12.6px;background:#7e8181;border:0.6px solid #6b6e6e;"></div><div style="left:79.9px;top:400.6px;width:6.6px;height:12.6px;background:#7e8181;border:0.6px solid #6b6e6e;"></div><div style="left:86.8px;top:400.6px;width:6.6px;height:12.6px;background:#7e8181;border:0.6px solid #6b6e6e;"></div><div style="left:93.7px;top:400.6px;width:6.6px;height:12.6px;background:#7e8181;border:0.6px solid #6b6e6e;"></div><div style="left:100.6px;top:400.6px;width:6.6px;height:12.6px;background:#7e8181;border:0.6px solid #6b6e6e;"></div><div style="left:108.6px;top:400.6px;width:7.6px;height:12.6px;background:#808383;"></div><svg style="left:111.4px;top:405.7px;" width="2" height="3" viewBox="0 0 2 3"><path d="M0 0 L2 1.5 L0 3 Z" fill="#5e6161"/></svg><div style="left:24px;top:415.4px;width:94px;height:0.6px;background:#7b7e7e;"></div><div style="left:28px;top:420.6px;width:7.4px;height:7.4px;background:#919494;border:0.5px solid #858888;"></div><span class="t" style="left:38px;top:421.3px;font-size:5.4px;color:#a9acac;letter-spacing:-0.294px;">Vector magnet</span><div style="left:72.4px;top:417.8px;width:6.7px;height:12.4px;background:#7e8181;border:0.6px solid #6b6e6e;"></div><div style="left:79.4px;top:417.8px;width:6.7px;height:12.4px;background:#7e8181;border:0.6px solid #6b6e6e;"></div><div style="left:86.4px;top:417.8px;width:6.7px;height:12.4px;background:#7e8181;border:0.6px solid #6b6e6e;"></div><div style="left:93.4px;top:417.8px;width:6.7px;height:12.4px;background:#7e8181;border:0.6px solid #6b6e6e;"></div><div style="left:100.4px;top:417.8px;width:6.7px;height:12.4px;background:#7e8181;border:0.6px solid #6b6e6e;"></div><div style="left:108.6px;top:417.8px;width:7.6px;height:12.4px;background:#8a8d8d;"></div><svg style="left:111.4px;top:422.7px;" width="2" height="3" viewBox="0 0 2 3"><path d="M0 0 L2 1.5 L0 3 Z" fill="#6c6f6f"/></svg><div style="left:18.9px;top:434px;width:105.8px;height:0.7px;background:#707373;"></div><svg style="left:91.5px;top:435.4px;" width="10" height="10" viewBox="0 0 10 10"><path d="M8.00 5.00 L9.51 6.65" stroke="#3d4040" stroke-width="1"/><path d="M7.43 6.76 L7.68 8.98" stroke="#3d4040" stroke-width="1"/><path d="M5.93 7.85 L4.83 9.80" stroke="#3d4040" stroke-width="1"/><path d="M4.07 7.85 L2.04 8.78" stroke="#3d4040" stroke-width="1"/><path d="M2.57 6.76 L0.38 6.32" stroke="#3d4040" stroke-width="1"/><path d="M2.00 5.00 L0.49 3.35" stroke="#3d4040" stroke-width="1"/><path d="M2.57 3.24 L2.32 1.02" stroke="#3d4040" stroke-width="1"/><path d="M4.07 2.15 L5.17 0.20" stroke="#3d4040" stroke-width="1"/><path d="M5.93 2.15 L7.96 1.22" stroke="#3d4040" stroke-width="1"/><path d="M7.43 3.24 L9.62 3.68" stroke="#3d4040" stroke-width="1"/></svg><svg style="left:109px;top:434.6px;" width="12" height="12" viewBox="0 0 12 12"><path d="M2.4 0.8 L2.4 4 L4 5.2 L4 11.4 L6 11.4 L6 5.2 L7.6 4 L7.6 0.8 L6.2 0.8 L6.2 3 L3.8 3 L3.8 0.8 Z" fill="#f2f2f2"/><path d="M9 0.8 C11.4 1.4 11.6 4.4 9.8 5.4 L9.8 11.4 L8 11.4 L8 5.2" fill="#dcdcdc"/></svg><div style="left:124.6px;top:29.5px;width:0.6px;height:417px;background:#5e6060;"></div><div style="left:690px;top:29.5px;width:105px;height:417px;background:#858888;"></div><div style="left:690px;top:29.5px;width:1.2px;height:417px;background:#6b6e6e;"></div><div style="left:690px;top:29.5px;width:105px;height:12.7px;background:linear-gradient(#656565,#575757);"></div><div style="left:692.4px;top:33px;width:0.8px;height:6px;background:#858585;"></div><div style="left:690px;top:42.2px;width:105px;height:13.6px;background:linear-gradient(#626262,#515151);"></div><svg style="left:694.4px;top:48.4px;" width="5.4" height="5" viewBox="0 0 5.4 5"><path d="M0 0.6 L1 0.6 M2 0.6 L5.4 0.6 M0 2.5 L1 2.5 M2 2.5 L5.4 2.5 M0 4.4 L1 4.4 M2 4.4 L5.4 4.4" stroke="#9c9c9c" stroke-width="0.8"/></svg><div style="left:704px;top:46.8px;width:45.4px;height:8.8px;background:#6f7171;border-radius:1px 1px 0 0;"></div><div style="left:706.6px;top:47.6px;width:7px;height:7.2px;border-radius:50%;background:radial-gradient(circle at 40% 35%,#b9b9b9,#8a8a8a 60%,#777);"></div><span class="t" style="left:715.6px;top:50.2px;font-size:5.6px;color:#9c9e9e;letter-spacing:0.017px;">Color Wheel</span><div style="left:750px;top:46.6px;width:39.6px;height:9px;background:linear-gradient(#8f9292,#858888);border-radius:1px 1px 0 0;"></div><svg style="left:753.8px;top:47.4px;" width="9" height="9" viewBox="0 0 9 9"><rect x="0" y="0" width="2.7" height="2.7" fill="#c02020"/><rect x="2.9" y="0" width="2.7" height="2.7" fill="#2838c0"/><rect x="5.8" y="0" width="2.7" height="2.7" fill="#e8d020"/><rect x="0" y="2.9" width="2.7" height="2.7" fill="#111"/><rect x="2.9" y="2.9" width="2.7" height="2.7" fill="#e02080"/><rect x="5.8" y="2.9" width="2.7" height="2.7" fill="#f0f0f0"/><rect x="0" y="5.8" width="2.7" height="2.7" fill="#28a038"/><rect x="2.9" y="5.8" width="2.7" height="2.7" fill="#d03020"/><rect x="5.8" y="5.8" width="2.7" height="2.7" fill="#111"/></svg><span class="t" style="left:765px;top:50.3px;font-size:5.6px;color:#f2f2f2;letter-spacing:0.017px;">Color Set</span><div style="left:690.6px;top:56.4px;width:71px;height:17px;background:linear-gradient(#8f9292,#7d8080);border-right:0.6px solid #747777;"></div><span class="t" style="left:705px;top:64.4px;font-size:5.4px;color:#f2f2f2;letter-spacing:-0.266px;">Default color set</span><svg style="left:753.6px;top:65.2px;" width="6.4" height="4.2" viewBox="0 0 6.4 4.2"><path d="M0 0 L6.4 0 L3.2 4 Z" fill="#3c3f3f"/></svg><svg style="left:765.4px;top:59.6px;" width="13" height="13" viewBox="0 0 13 13"><path d="M2.2 0.8 L2.2 4.2 L4 5.6 L4 12.4 L6.2 12.4 L6.2 5.6 L8 4.2 L8 0.8 L6.6 0.8 L6.6 3.2 L3.6 3.2 L3.6 0.8 Z" fill="#f4f4f4"/><path d="M9.6 0.6 C12.4 1.4 12.6 4.8 10.4 6 L10.4 12.4 L8.4 12.4 L8.4 5.6" fill="#d6d6d6"/></svg><div style="left:691px;top:74px;width:102px;height:45.4px;background:#7a7d7d;"></div><svg style="left:691.3px;top:74.3px;" width="101.4" height="44.6" viewBox="0 0 101.4 44.6"><rect x="0.00" y="0.00" width="4.70" height="4.59" fill="#2d2a4a"/><rect x="5.05" y="0.00" width="4.70" height="4.59" fill="#f5f0f0"/><rect x="10.10" y="0.00" width="4.70" height="4.59" fill="#f0d0b8"/><rect x="15.15" y="0.00" width="4.70" height="4.59" fill="#5b9ad8"/><rect x="20.20" y="0.00" width="4.70" height="4.59" fill="#e0a088"/><rect x="25.25" y="0.00" width="4.70" height="4.59" fill="#6b4a1e"/><rect x="30.30" y="0.00" width="4.70" height="4.59" fill="#2a1a30"/><rect x="35.35" y="0.00" width="4.70" height="4.59" fill="#4a3618"/><rect x="40.40" y="0.00" width="4.70" height="4.59" fill="#2c6ab0"/><rect x="45.45" y="0.00" width="4.70" height="4.59" fill="#c8c09a"/><rect x="50.50" y="0.00" width="4.70" height="4.59" fill="#2a3020"/><rect x="55.55" y="0.00" width="4.70" height="4.59" fill="#707070"/><rect x="60.60" y="0.00" width="4.70" height="4.59" fill="#f4f0f0"/><rect x="65.65" y="0.00" width="4.70" height="4.59" fill="#b09070"/><rect x="70.70" y="0.00" width="4.70" height="4.59" fill="#4e6e4a"/><rect x="75.75" y="0.00" width="4.70" height="4.59" fill="#d8a890"/><rect x="80.80" y="0.00" width="4.70" height="4.59" fill="#8a8060"/><rect x="85.85" y="0.00" width="4.70" height="4.59" fill="#b09078"/><rect x="90.90" y="0.00" width="4.70" height="4.59" fill="#d8c0a8"/><rect x="95.95" y="0.00" width="4.70" height="4.59" fill="#7890a0"/><rect x="0.00" y="4.94" width="4.70" height="4.59" fill="#8a8a82"/><rect x="5.05" y="4.94" width="4.70" height="4.59" fill="#b8b8b8"/><rect x="10.10" y="4.94" width="4.70" height="4.59" fill="#9a9a9a"/><rect x="15.15" y="4.94" width="4.70" height="4.59" fill="#b0b060"/><rect x="20.20" y="4.94" width="4.70" height="4.59" fill="#707078"/><rect x="25.25" y="4.94" width="4.70" height="4.59" fill="#787880"/><rect x="30.30" y="4.94" width="4.70" height="4.59" fill="#b8b8b0"/><rect x="35.35" y="4.94" width="4.70" height="4.59" fill="#b0a8a0"/><rect x="40.40" y="4.94" width="4.70" height="4.59" fill="#b0a8a0"/><rect x="45.45" y="4.94" width="4.70" height="4.59" fill="#b08a80"/><rect x="50.50" y="4.94" width="4.70" height="4.59" fill="#b0b8b0"/><rect x="55.55" y="4.94" width="4.70" height="4.59" fill="#5a6a48"/><rect x="60.60" y="4.94" width="4.70" height="4.59" fill="#2a4a2a"/><rect x="65.65" y="4.94" width="4.70" height="4.59" fill="#f0f0f0"/><rect x="70.70" y="4.94" width="4.70" height="4.59" fill="#7a2030"/><rect x="75.75" y="4.94" width="4.70" height="4.59" fill="#902838"/><rect x="80.80" y="4.94" width="4.70" height="4.59" fill="#f0e0e0"/><rect x="85.85" y="4.94" width="4.70" height="4.59" fill="#e0b0a0"/><rect x="90.90" y="4.94" width="4.70" height="4.59" fill="#c0b898"/><rect x="95.95" y="4.94" width="4.70" height="4.59" fill="#080808"/><rect x="0.00" y="9.88" width="4.70" height="4.59" fill="#000000"/><rect x="5.05" y="9.88" width="4.70" height="4.59" fill="#000000"/><rect x="10.10" y="9.88" width="4.70" height="4.59" fill="#000000"/><rect x="15.15" y="9.88" width="4.70" height="4.59" fill="#000000"/><rect x="20.20" y="9.88" width="4.70" height="4.59" fill="#ffffff"/><rect x="25.25" y="9.88" width="4.70" height="4.59" fill="#d8d8d8"/><rect x="30.30" y="9.88" width="4.70" height="4.59" fill="#080808"/><rect x="35.35" y="9.88" width="4.70" height="4.59" fill="#1a2a1a"/><rect x="40.40" y="9.88" width="4.70" height="4.59" fill="#283028"/><rect x="45.45" y="9.88" width="4.70" height="4.59" fill="#384038"/><rect x="50.50" y="9.88" width="4.70" height="4.59" fill="#586058"/><rect x="55.55" y="9.88" width="4.70" height="4.59" fill="#808080"/><rect x="60.60" y="9.88" width="4.70" height="4.59" fill="#909090"/><rect x="65.65" y="9.88" width="4.70" height="4.59" fill="#b0b0b0"/><rect x="70.70" y="9.88" width="4.70" height="4.59" fill="#c8c8c8"/><rect x="75.75" y="9.88" width="4.70" height="4.59" fill="#d8d8d8"/><rect x="80.80" y="9.88" width="4.70" height="4.59" fill="#e0e0e0"/><rect x="85.85" y="9.88" width="4.70" height="4.59" fill="#e8e8e8"/><rect x="90.90" y="9.88" width="4.70" height="4.59" fill="#f0f0f0"/><rect x="95.95" y="9.88" width="4.70" height="4.59" fill="#e02818"/><rect x="0.00" y="14.82" width="4.70" height="4.59" fill="#f0f030"/><rect x="5.05" y="14.82" width="4.70" height="4.59" fill="#40f040"/><rect x="10.10" y="14.82" width="4.70" height="4.59" fill="#40f0e0"/><rect x="15.15" y="14.82" width="4.70" height="4.59" fill="#2030e0"/><rect x="20.20" y="14.82" width="4.70" height="4.59" fill="#e040e0"/><rect x="25.25" y="14.82" width="4.70" height="4.59" fill="#384048"/><rect x="30.30" y="14.82" width="4.70" height="4.59" fill="#506070"/><rect x="35.35" y="14.82" width="4.70" height="4.59" fill="#a0b0c0"/><rect x="40.40" y="14.82" width="4.70" height="4.59" fill="#c0c8d8"/><rect x="45.45" y="14.82" width="4.70" height="4.59" fill="#e0e8f0"/><rect x="50.50" y="14.82" width="4.70" height="4.59" fill="#3a4a2a"/><rect x="55.55" y="14.82" width="4.70" height="4.59" fill="#5a6a5a"/><rect x="60.60" y="14.82" width="4.70" height="4.59" fill="#8a7a6a"/><rect x="65.65" y="14.82" width="4.70" height="4.59" fill="#c0a090"/><rect x="70.70" y="14.82" width="4.70" height="4.59" fill="#d8a8a0"/><rect x="75.75" y="14.82" width="4.70" height="4.59" fill="#f0a0b0"/><rect x="80.80" y="14.82" width="4.70" height="4.59" fill="#f0b8b0"/><rect x="85.85" y="14.82" width="4.70" height="4.59" fill="#f0d8a0"/><rect x="90.90" y="14.82" width="4.70" height="4.59" fill="#f0f0a0"/><rect x="95.95" y="14.82" width="4.70" height="4.59" fill="#d0f0a0"/><rect x="0.00" y="19.76" width="4.70" height="4.59" fill="#a0f0c0"/><rect x="5.05" y="19.76" width="4.70" height="4.59" fill="#a0f0e0"/><rect x="10.10" y="19.76" width="4.70" height="4.59" fill="#a0d8f0"/><rect x="15.15" y="19.76" width="4.70" height="4.59" fill="#a0b8f0"/><rect x="20.20" y="19.76" width="4.70" height="4.59" fill="#b0a0f0"/><rect x="25.25" y="19.76" width="4.70" height="4.59" fill="#c8a0f0"/><rect x="30.30" y="19.76" width="4.70" height="4.59" fill="#d8a0f0"/><rect x="35.35" y="19.76" width="4.70" height="4.59" fill="#f0a0e0"/><rect x="40.40" y="19.76" width="4.70" height="4.59" fill="#f0a0c8"/><rect x="45.45" y="19.76" width="4.70" height="4.59" fill="#fce0e8"/><rect x="50.50" y="19.76" width="4.70" height="4.59" fill="#fcf0f0"/><rect x="55.55" y="19.76" width="4.70" height="4.59" fill="#e04858"/><rect x="60.60" y="19.76" width="4.70" height="4.59" fill="#f08050"/><rect x="65.65" y="19.76" width="4.70" height="4.59" fill="#f0b050"/><rect x="70.70" y="19.76" width="4.70" height="4.59" fill="#e8e850"/><rect x="75.75" y="19.76" width="4.70" height="4.59" fill="#a0e850"/><rect x="80.80" y="19.76" width="4.70" height="4.59" fill="#60e870"/><rect x="85.85" y="19.76" width="4.70" height="4.59" fill="#60e8c0"/><rect x="90.90" y="19.76" width="4.70" height="4.59" fill="#60c0e8"/><rect x="95.95" y="19.76" width="4.70" height="4.59" fill="#6090e8"/><rect x="0.00" y="24.70" width="4.70" height="4.59" fill="#6060e0"/><rect x="5.05" y="24.70" width="4.70" height="4.59" fill="#9050e0"/><rect x="10.10" y="24.70" width="4.70" height="4.59" fill="#c050e0"/><rect x="15.15" y="24.70" width="4.70" height="4.59" fill="#e050c0"/><rect x="20.20" y="24.70" width="4.70" height="4.59" fill="#e05090"/><rect x="25.25" y="24.70" width="4.70" height="4.59" fill="#fcd0d8"/><rect x="30.30" y="24.70" width="4.70" height="4.59" fill="#fce0d8"/><rect x="35.35" y="24.70" width="4.70" height="4.59" fill="#e02028"/><rect x="40.40" y="24.70" width="4.70" height="4.59" fill="#f07020"/><rect x="45.45" y="24.70" width="4.70" height="4.59" fill="#f0b020"/><rect x="50.50" y="24.70" width="4.70" height="4.59" fill="#f0f020"/><rect x="55.55" y="24.70" width="4.70" height="4.59" fill="#a0f030"/><rect x="60.60" y="24.70" width="4.70" height="4.59" fill="#50f050"/><rect x="65.65" y="24.70" width="4.70" height="4.59" fill="#40f0c0"/><rect x="70.70" y="24.70" width="4.70" height="4.59" fill="#30c0f0"/><rect x="75.75" y="24.70" width="4.70" height="4.59" fill="#2070e8"/><rect x="80.80" y="24.70" width="4.70" height="4.59" fill="#2030e0"/><rect x="85.85" y="24.70" width="4.70" height="4.59" fill="#6020e0"/><rect x="90.90" y="24.70" width="4.70" height="4.59" fill="#b020e0"/><rect x="95.95" y="24.70" width="4.70" height="4.59" fill="#e020a0"/><rect x="0.00" y="29.64" width="4.70" height="4.59" fill="#e02070"/><rect x="5.05" y="29.64" width="4.70" height="4.59" fill="#fcd0d0"/><rect x="10.10" y="29.64" width="4.70" height="4.59" fill="#fcd8c8"/><rect x="15.15" y="29.64" width="4.70" height="4.59" fill="#c03048"/><rect x="20.20" y="29.64" width="4.70" height="4.59" fill="#c06840"/><rect x="25.25" y="29.64" width="4.70" height="4.59" fill="#c09838"/><rect x="30.30" y="29.64" width="4.70" height="4.59" fill="#c0b838"/><rect x="35.35" y="29.64" width="4.70" height="4.59" fill="#88c040"/><rect x="40.40" y="29.64" width="4.70" height="4.59" fill="#48c050"/><rect x="45.45" y="29.64" width="4.70" height="4.59" fill="#40b890"/><rect x="50.50" y="29.64" width="4.70" height="4.59" fill="#4098b8"/><rect x="55.55" y="29.64" width="4.70" height="4.59" fill="#4068c0"/><rect x="60.60" y="29.64" width="4.70" height="4.59" fill="#3840b8"/><rect x="65.65" y="29.64" width="4.70" height="4.59" fill="#6838b8"/><rect x="70.70" y="29.64" width="4.70" height="4.59" fill="#9838b0"/><rect x="75.75" y="29.64" width="4.70" height="4.59" fill="#b83098"/><rect x="80.80" y="29.64" width="4.70" height="4.59" fill="#b03070"/><rect x="85.85" y="29.64" width="4.70" height="4.59" fill="#fcd8d0"/><rect x="90.90" y="29.64" width="4.70" height="4.59" fill="#e8c0b0"/><rect x="95.95" y="29.64" width="4.70" height="4.59" fill="#600818"/><rect x="0.00" y="34.58" width="4.70" height="4.59" fill="#6a2818"/><rect x="5.05" y="34.58" width="4.70" height="4.59" fill="#6a4810"/><rect x="10.10" y="34.58" width="4.70" height="4.59" fill="#5a6a10"/><rect x="15.15" y="34.58" width="4.70" height="4.59" fill="#3a7a18"/><rect x="20.20" y="34.58" width="4.70" height="4.59" fill="#207a28"/><rect x="25.25" y="34.58" width="4.70" height="4.59" fill="#187a50"/><rect x="30.30" y="34.58" width="4.70" height="4.59" fill="#186878"/><rect x="35.35" y="34.58" width="4.70" height="4.59" fill="#184888"/><rect x="40.40" y="34.58" width="4.70" height="4.59" fill="#101c78"/><rect x="45.45" y="34.58" width="4.70" height="4.59" fill="#301078"/><rect x="50.50" y="34.58" width="4.70" height="4.59" fill="#501078"/><rect x="55.55" y="34.58" width="4.70" height="4.59" fill="#700c60"/><rect x="60.60" y="34.58" width="4.70" height="4.59" fill="#700c38"/><rect x="65.65" y="34.58" width="4.70" height="4.59" fill="#fcc8b0"/><rect x="70.70" y="34.58" width="4.70" height="4.59" fill="#e0a890"/><rect x="75.75" y="34.58" width="4.70" height="4.59" fill="#480808"/><rect x="80.80" y="34.58" width="4.70" height="4.59" fill="#481808"/><rect x="85.85" y="34.58" width="4.70" height="4.59" fill="#383008"/><rect x="90.90" y="34.58" width="4.70" height="4.59" fill="#283808"/><rect x="95.95" y="34.58" width="4.70" height="4.59" fill="#304818"/><rect x="0.00" y="39.52" width="4.70" height="4.59" fill="#103818"/><rect x="5.05" y="39.52" width="4.70" height="4.59" fill="#103830"/><rect x="10.10" y="39.52" width="4.70" height="4.59" fill="#103040"/><rect x="15.15" y="39.52" width="4.70" height="4.59" fill="#102048"/><rect x="20.20" y="39.52" width="4.70" height="4.59" fill="#101048"/><rect x="25.25" y="39.52" width="4.70" height="4.59" fill="#200840"/><rect x="30.30" y="39.52" width="4.70" height="4.59" fill="#300840"/><rect x="35.35" y="39.52" width="4.70" height="4.59" fill="#400830"/><rect x="40.40" y="39.52" width="4.70" height="4.59" fill="#400818"/><rect x="45.45" y="39.52" width="4.70" height="4.59" fill="#c09878"/><rect x="50.50" y="39.52" width="4.70" height="4.59" fill="#f0d0b0"/><rect x="0.3" y="10.18" width="4.05" height="3.94" fill="none" stroke="#fff" stroke-width="0.6"/></svg><div style="left:691.6px;top:135.6px;width:5.2px;height:5.6px;background:#a02632;border:0.5px solid #74605f;"></div><div style="left:711.4px;top:135.6px;width:5.2px;height:5.6px;background:#44a644;border:0.5px solid #74605f;"></div><div style="left:731.6px;top:135.6px;width:5.2px;height:5.6px;background:#3434b2;border:0.5px solid #74605f;"></div><svg style="left:749px;top:130px;" width="12" height="12" viewBox="0 0 12 12"><path d="M0.6 0.8 L4.6 4.4 L2.8 4.6 L3.8 6.6 L3 7 L2 5 L0.8 6.2 Z" fill="#fff" stroke="#333" stroke-width="0.4"/><rect x="4.6" y="6" width="6.6" height="5.4" fill="#f2f2f2" stroke="#3a3a3a" stroke-width="0.7"/><path d="M4.6 8 L11.2 8 M7.8 6 L7.8 11.4" stroke="#3a3a3a" stroke-width="0.6"/></svg><svg style="left:766px;top:130px;" width="12" height="12" viewBox="0 0 12 12"><circle cx="4.6" cy="4.6" r="3.8" fill="#6a6a6a"/><circle cx="3.6" cy="3.6" r="1.6" fill="#a5a5a5"/><path d="M8.6 6.4 L8.6 11.6 M6 9 L11.2 9" stroke="#2c2c2c" stroke-width="1.4"/></svg><svg style="left:783px;top:130px;" width="11" height="12" viewBox="0 0 11 12"><path d="M1.6 4 L9.4 4 L8.6 11.6 L2.4 11.6 Z" fill="#f4f4f4"/><rect x="0.6" y="2" width="9.8" height="1.9" fill="#ededed"/><rect x="3.8" y="0.6" width="3.4" height="1.4" fill="#e2e2e2"/><path d="M4 5.4 L4.2 10.2 M7 5.4 L6.8 10.2" stroke="#9c9c9c" stroke-width="0.7"/></svg><div style="left:690px;top:146.6px;width:105px;height:11.4px;background:linear-gradient(#626262,#515151);"></div><svg style="left:694px;top:150px;" width="5.4" height="5" viewBox="0 0 5.4 5"><path d="M0 0.6 L1 0.6 M2 0.6 L5.4 0.6 M0 2.5 L1 2.5 M2 2.5 L5.4 2.5 M0 4.4 L1 4.4 M2 4.4 L5.4 4.4" stroke="#9c9c9c" stroke-width="0.8"/></svg><div style="left:704px;top:147.6px;width:48.6px;height:10.4px;background:linear-gradient(#8f9292,#858888);border-radius:1px 1px 0 0;"></div><svg style="left:706px;top:148px;" width="11" height="9" viewBox="0 0 11 9"><path d="M1 5.4 C3.4 4.8 6 2.6 8.8 0.6" stroke="#c01818" stroke-width="1.4" fill="none"/><path d="M1 8 L9.6 8" stroke="#1a1a1a" stroke-width="1.7"/></svg><span class="t" style="left:719.4px;top:151.8px;font-size:5.6px;color:#f2f2f2;letter-spacing:-0.374px;">Layer Property</span><div style="left:753px;top:148.6px;width:18px;height:9.4px;background:#6f7171;"></div><svg style="left:757.4px;top:150.8px;" width="9" height="6" viewBox="0 0 9 6"><path d="M0.6 2.4 C2.4 0.2 6.6 0.2 8.4 2.4 M0.6 4.8 C2.4 2.6 6.6 2.6 8.4 4.8" stroke="#a5a5a5" stroke-width="0.9" fill="none"/></svg><div style="left:692.4px;top:158.6px;width:100px;height:65.4px;border:0.6px solid #7b7e7e;"></div><span class="t" style="left:694.4px;top:162.8px;font-size:5.5px;color:#f2f2f2;letter-spacing:-0.410px;">Effect</span><div style="left:725px;top:168.2px;width:64px;height:14px;background:#7f8282;border-radius:1px;"></div><div style="left:727.6px;top:170.4px;width:9.6px;height:9.6px;border-radius:50%;background:#333;border:1.6px solid #f6f6f6;"></div><div style="left:741px;top:170px;width:10.4px;height:10.4px;border-radius:50%;background:radial-gradient(circle at 60% 55%,#4f9ae6 55%,#2f6fc0);border:0.6px solid #2b64b0;"></div><div style="left:755.4px;top:170.2px;width:9.6px;height:9.8px;background:repeating-conic-gradient(#2c2c2c 0 25%,#9a9a9a 0 50%) 0 0/2px 2px;"></div><div style="left:769px;top:170.4px;width:9.8px;height:9.6px;background:#6fc3f2;border:0.7px solid #d7eefb;"></div><svg style="left:782.6px;top:173.6px;" width="6" height="4" viewBox="0 0 6 4"><path d="M0 0 L6 0 L3 3.8 Z" fill="#3a3d3d"/></svg><span class="t" style="left:694.4px;top:185.8px;font-size:5.5px;color:#f2f2f2;letter-spacing:-0.447px;">Expression color</span><div style="left:700.4px;top:193.4px;width:57.4px;height:14px;background:linear-gradient(#8d9090,#7e8181);border:0.6px solid #737676;border-radius:1.5px;"></div><div style="left:711.4px;top:195.8px;width:3.6px;height:9.4px;background:#f0788a;"></div><div style="left:715px;top:195.8px;width:3.6px;height:9.4px;background:#86a8f0;"></div><div style="left:718.6px;top:195.8px;width:3.6px;height:9.4px;background:#9cf090;"></div><span class="t" style="left:726px;top:198px;font-size:5.5px;color:#f2f2f2;letter-spacing:-0.529px;">Color</span><svg style="left:748px;top:198.8px;" width="6.4" height="4.2" viewBox="0 0 6.4 4.2"><path d="M0 0 L6.4 0 L3.2 4 Z" fill="#35383a"/></svg><div style="left:690px;top:227.4px;width:105px;height:11.2px;background:linear-gradient(#626262,#515151);"></div><svg style="left:694px;top:230.4px;" width="5.4" height="5" viewBox="0 0 5.4 5"><path d="M0 0.6 L1 0.6 M2 0.6 L5.4 0.6 M0 2.5 L1 2.5 M2 2.5 L5.4 2.5 M0 4.4 L1 4.4 M2 4.4 L5.4 4.4" stroke="#9c9c9c" stroke-width="0.8"/></svg><div style="left:704px;top:228.2px;width:29.6px;height:10.4px;background:linear-gradient(#8f9292,#858888);border-radius:1px 1px 0 0;"></div><svg style="left:707px;top:229.4px;" width="10" height="8.6" viewBox="0 0 10 8.6"><path d="M1 2.2 C3 0.4 7 0.4 9 2.2 C7 3.8 3 3.8 1 2.2 Z" fill="#f0f0f0"/><path d="M1 4.4 C3 6 7 6 9 4.4 M1 6.4 C3 8 7 8 9 6.4" stroke="#efefef" stroke-width="1" fill="none"/><path d="M0.6 8.2 L9.6 8.2" stroke="#2a2a2a" stroke-width="0.8"/></svg><span class="t" style="left:719.6px;top:232.8px;font-size:5.6px;color:#f2f2f2;letter-spacing:-0.602px;">Layer</span><div style="left:735px;top:229px;width:16.4px;height:9.6px;background:#6f7171;"></div><svg style="left:738.4px;top:230.4px;" width="10" height="7.4" viewBox="0 0 10 7.4"><path d="M1 6.6 L1 3 C1 0.6 4.4 0.6 4.4 3 L4.4 6.6 M5.4 1 L5.4 4.6 C5.4 7 9 7 9 4.6 L9 1" stroke="#e2e2e2" stroke-width="1.2" fill="none"/></svg><div style="left:752.6px;top:229px;width:16.4px;height:9.6px;background:#6f7171;"></div><svg style="left:756.4px;top:231px;" width="9" height="6" viewBox="0 0 9 6"><path d="M0.6 0.8 L8.4 5.4 M0.6 5.4 L8.4 0.8" stroke="#8f9191" stroke-width="0.9"/></svg><div style="left:691.4px;top:242px;width:53px;height:13.4px;background:linear-gradient(#8d9090,#7e8181);border:0.6px solid #737676;border-radius:1.5px;"></div><span class="t" style="left:705px;top:247.2px;font-size:5.4px;color:#f2f2f2;letter-spacing:-0.567px;">Normal</span><svg style="left:735px;top:247.2px;" width="6.4" height="4.2" viewBox="0 0 6.4 4.2"><path d="M0 0 L6.4 0 L3.2 4 Z" fill="#35383a"/></svg><div style="left:746.8px;top:245px;width:26px;height:5.6px;background:linear-gradient(90deg,#f2f2f2,#c9c9c9);border:0.5px solid #6c6f6f;"></div><svg style="left:747.4px;top:245.6px;" width="14" height="4.4" viewBox="0 0 14 4.4"><path d="M0.4 0.4 L2.6 4 M2.6 0.4 L0.4 4 M3.4 0.4 L5.6 4 M5.6 0.4 L3.4 4 M6.4 0.4 L8.6 4 M8.6 0.4 L6.4 4 M9.4 0.4 L11.6 4 M11.6 0.4 L9.4 4" stroke="#b7b7b7" stroke-width="0.6"/></svg><div style="left:774.4px;top:241px;width:0.8px;height:16px;background:#9a9d9d;"></div><span class="t" style="left:778.6px;top:247px;font-size:5.4px;color:#f2f2f2;letter-spacing:-0.537px;">100</span><svg style="left:789px;top:244.6px;" width="4.2" height="8.4" viewBox="0 0 4.2 8.4"><path d="M2.1 0.4 L4 3.1 L0.2 3.1 Z M2.1 8 L4 5.3 L0.2 5.3 Z" fill="#2e2e2e"/></svg><svg style="left:708px;top:260.6px;" width="13" height="9.4" viewBox="0 0 13 9.4"><ellipse cx="6.5" cy="5.4" rx="6" ry="3.6" fill="#2b2b2b"/><ellipse cx="6.5" cy="3.6" rx="6" ry="3.2" fill="#474747" stroke="#1f1f1f" stroke-width="0.6"/><ellipse cx="6.5" cy="3.4" rx="4.2" ry="1.9" fill="#6a6a6a"/></svg><svg style="left:727.4px;top:259px;" width="7" height="12.4" viewBox="0 0 7 12.4"><rect x="1.8" y="0.4" width="3.4" height="2.2" fill="#f0f0f0"/><path d="M0.4 3 L6.6 3 L5 5.2 L5 11.6 L2 11.6 L2 5.2 Z" fill="#d9d9d9"/><rect x="2.6" y="6" width="1.8" height="3" fill="#555"/></svg><svg style="left:745px;top:259.4px;" width="9" height="12" viewBox="0 0 9 12"><path d="M2.2 5 L2.2 3.2 C2.2 0.4 6.8 0.4 6.8 3.2 L6.8 5" stroke="#595c5c" stroke-width="1.2" fill="none"/><rect x="0.6" y="5" width="7.8" height="6.4" rx="0.8" fill="#6d7070" stroke="#555858" stroke-width="0.5"/><circle cx="4.5" cy="8" r="1.1" fill="#474a4a"/></svg><svg style="left:761.4px;top:259px;" width="11" height="12" viewBox="0 0 11 12"><path d="M1.6 4 L1.6 2.4 C1.6 0.2 5 0.2 5 2.4" stroke="#f0f0f0" stroke-width="0.9" fill="none"/><rect x="0.6" y="4" width="5.4" height="4.2" fill="#f4f4f4"/><rect x="2.4" y="5.4" width="1.6" height="1.6" fill="#333"/><rect x="5.6" y="7" width="2.6" height="2.6" fill="#f4f4f4"/><rect x="8.2" y="9.6" width="2.6" height="2.4" fill="#f4f4f4"/><rect x="8.2" y="7" width="2.6" height="2.6" fill="#4a4a4a"/><rect x="5.6" y="9.6" width="2.6" height="2.4" fill="#4a4a4a"/></svg><div style="left:778.6px;top:258.6px;width:14.4px;height:12.8px;background:#979a9a;border:0.5px solid #a9acac;"></div><svg style="left:780.4px;top:260.6px;" width="11" height="9" viewBox="0 0 11 9"><rect x="0.4" y="0.4" width="6" height="5.6" fill="#a7aaaa" stroke="#8a8d8d" stroke-width="0.5"/><path d="M5 4.2 L10.6 4.2 L7.8 8 Z" fill="#6f7272"/></svg><div style="left:691.6px;top:273.9px;width:100px;height:0.7px;background:#666969;"></div><div style="left:691.6px;top:274.5px;width:100px;height:17px;background:linear-gradient(#9fb4bf,#8aa0ac);border-bottom:0.8px solid #646767;"></div><div style="left:691.6px;top:274.5px;width:30px;height:16.2px;background:#868989;"></div><div style="left:706.8px;top:274.5px;width:0.7px;height:17px;background:#6f7272;"></div><div style="left:721px;top:274.5px;width:0.7px;height:17px;background:#6f7272;"></div><svg style="left:695.4px;top:280.1px;" width="8" height="5.4" viewBox="0 0 10 6.6"><path d="M0.4 3.4 C2.4 0.2 7.6 0.2 9.6 3.4 C7.6 6.4 2.4 6.4 0.4 3.4 Z" fill="#e9e9e9"/><circle cx="5" cy="3.3" r="2.1" fill="#1d1d1d"/><circle cx="4.4" cy="2.7" r="0.6" fill="#ddd"/></svg><svg style="left:709.4px;top:277.5px;" width="9.6" height="10.6" viewBox="0 0 9.6 10.6"><path d="M1 9.8 L1.6 7.8 L6.2 3 L7.4 4.2 L2.8 9 Z" fill="#eaeaea"/><path d="M5.6 2.4 L7.6 0.6 L9.2 2.2 L7.6 4.4 Z" fill="#1d1d1d"/></svg><div style="left:722px;top:274.9px;width:14.6px;height:15.6px;background:#2c3033;"></div><div style="left:724.2px;top:275.5px;width:11px;height:14.2px;background:repeating-conic-gradient(#f6f6f6 0 25%,#dcdcdc 0 50%) 0 0/2.6px 2.6px;"></div><span class="t" style="left:739.4px;top:277.1px;font-size:5.3px;color:#f2f2f2;letter-spacing:-0.496px;">100 %  Normal</span><span class="t" style="left:739.4px;top:285.3px;font-size:5.3px;color:#f2f2f2;letter-spacing:-0.355px;">Layer 2 Copy</span><div style="left:691.6px;top:291.5px;width:100px;height:17px;background:#868989;border-bottom:0.8px solid #646767;"></div><div style="left:706.8px;top:291.5px;width:0.7px;height:17px;background:#6f7272;"></div><div style="left:721px;top:291.5px;width:0.7px;height:17px;background:#6f7272;"></div><svg style="left:695.4px;top:297.1px;" width="8" height="5.4" viewBox="0 0 10 6.6"><path d="M0.4 3.4 C2.4 0.2 7.6 0.2 9.6 3.4 C7.6 6.4 2.4 6.4 0.4 3.4 Z" fill="#e9e9e9"/><circle cx="5" cy="3.3" r="2.1" fill="#1d1d1d"/><circle cx="4.4" cy="2.7" r="0.6" fill="#ddd"/></svg><div style="left:722px;top:291.9px;width:14.6px;height:15.6px;background:#5d6060;"></div><div style="left:724.2px;top:292.5px;width:11px;height:14.2px;background:repeating-conic-gradient(#f6f6f6 0 25%,#dcdcdc 0 50%) 0 0/2.6px 2.6px;"></div><span class="t" style="left:739.4px;top:294.1px;font-size:5.3px;color:#f2f2f2;letter-spacing:-0.496px;">100 %  Normal</span><span class="t" style="left:739.4px;top:302.3px;font-size:5.3px;color:#f2f2f2;letter-spacing:-0.224px;">Layer 2</span><div style="left:691.6px;top:308.5px;width:100px;height:17px;background:#868989;border-bottom:0.8px solid #646767;"></div><div style="left:706.8px;top:308.5px;width:0.7px;height:17px;background:#6f7272;"></div><div style="left:721px;top:308.5px;width:0.7px;height:17px;background:#6f7272;"></div><svg style="left:695.4px;top:314.1px;" width="8" height="5.4" viewBox="0 0 10 6.6"><path d="M0.4 3.4 C2.4 0.2 7.6 0.2 9.6 3.4 C7.6 6.4 2.4 6.4 0.4 3.4 Z" fill="#e9e9e9"/><circle cx="5" cy="3.3" r="2.1" fill="#1d1d1d"/><circle cx="4.4" cy="2.7" r="0.6" fill="#ddd"/></svg><div style="left:722px;top:308.9px;width:14.6px;height:15.6px;background:#5d6060;"></div><div style="left:724.2px;top:309.5px;width:11px;height:14.2px;background:repeating-conic-gradient(#f6f6f6 0 25%,#dcdcdc 0 50%) 0 0/2.6px 2.6px;"></div><span class="t" style="left:739.4px;top:311.1px;font-size:5.3px;color:#f2f2f2;letter-spacing:-0.496px;">100 %  Normal</span><span class="t" style="left:739.4px;top:319.3px;font-size:5.3px;color:#f2f2f2;letter-spacing:-0.224px;">Layer 1</span><div style="left:691.6px;top:325.5px;width:100px;height:17px;background:#868989;border-bottom:0.8px solid #646767;"></div><div style="left:706.8px;top:325.5px;width:0.7px;height:17px;background:#6f7272;"></div><div style="left:721px;top:325.5px;width:0.7px;height:17px;background:#6f7272;"></div><svg style="left:695.4px;top:331.1px;" width="8" height="5.4" viewBox="0 0 10 6.6"><path d="M0.4 3.4 C2.4 0.2 7.6 0.2 9.6 3.4 C7.6 6.4 2.4 6.4 0.4 3.4 Z" fill="#e9e9e9"/><circle cx="5" cy="3.3" r="2.1" fill="#1d1d1d"/><circle cx="4.4" cy="2.7" r="0.6" fill="#ddd"/></svg><div style="left:722.6px;top:326.7px;width:14px;height:14.4px;background:#fff;border:0.5px solid #d5d5d5;"></div><svg style="left:739.8px;top:326.7px;" width="12" height="13" viewBox="0 0 12 13"><path d="M0.6 0.6 L8 0.6 L11.2 3.8 L11.2 12.4 L0.6 12.4 Z" fill="#f4f4f4" stroke="#fff" stroke-width="0.8"/><path d="M7.2 1.4 L7.2 4.6 L10.6 4.6" fill="#e0e0e0" stroke="#6a6a6a" stroke-width="0.6"/></svg><span class="t" style="left:753.4px;top:334.9px;font-size:5.4px;color:#f2f2f2;letter-spacing:-0.602px;">Paper</span><div style="left:691.6px;top:433px;width:100px;height:0.7px;background:#707373;"></div><svg style="left:695px;top:434.4px;" width="10.4" height="12" viewBox="0 0 10.4 12"><path d="M0.6 0.6 L9.8 0.6 L9.8 7.6 L6.4 11.4 L0.6 11.4 Z" fill="#f6f6f6"/><path d="M9.8 7.6 L6.4 7.6 L6.4 11.4 Z" fill="#b9b9b9"/><rect x="4.4" y="8.6" width="2.6" height="2.6" fill="#5a5a5a"/></svg><svg style="left:712px;top:435px;" width="11.4" height="11" viewBox="0 0 11.4 11"><path d="M0.6 1 L4 1 L5 2.2 L8 2.2 L8 8.8 L0.6 8.8 Z" fill="#cfcfcf"/><path d="M4.4 3.4 L10.8 3.4 L10.8 10.4 L4.4 10.4 Z" fill="#f4f4f4" stroke="#9a9a9a" stroke-width="0.5"/></svg><svg style="left:730.4px;top:435px;" width="8.4" height="11" viewBox="0 0 8.4 11"><path d="M4.2 0.4 L4.2 4" stroke="#fff" stroke-width="1"/><path d="M1.6 3.6 L6.8 3.6 L4.2 6.6 Z" fill="#fff"/><ellipse cx="4.2" cy="8.6" rx="3.8" ry="2" fill="#2f2f2f" stroke="#e2e2e2" stroke-width="0.6"/></svg><svg style="left:747.6px;top:435px;" width="8.4" height="11" viewBox="0 0 8.4 11"><path d="M4.2 0.4 L4.2 4" stroke="#fff" stroke-width="1"/><path d="M1.6 3.6 L6.8 3.6 L4.2 6.6 Z" fill="#fff"/><ellipse cx="4.2" cy="8.2" rx="3.8" ry="1.8" fill="#2f2f2f" stroke="#e2e2e2" stroke-width="0.6"/><path d="M0.6 10.6 L7.8 10.6" stroke="#ededed" stroke-width="0.9"/></svg><svg style="left:764px;top:435.8px;" width="12.4" height="9.4" viewBox="0 0 12.4 9.4"><rect x="0.5" y="0.5" width="11.4" height="8.4" fill="#3a3a3a" stroke="#ededed" stroke-width="1"/><circle cx="6.2" cy="4.7" r="2.3" fill="#f4f4f4"/></svg><svg style="left:782.6px;top:434.4px;" width="10.4" height="12" viewBox="0 0 10.4 12"><path d="M1.6 4 L8.8 4 L8 11.6 L2.4 11.6 Z" fill="#f4f4f4"/><rect x="0.6" y="2" width="9.2" height="1.9" fill="#ededed"/><rect x="3.6" y="0.6" width="3.2" height="1.4" fill="#e2e2e2"/><path d="M3.8 5.4 L4 10.2 M6.6 5.4 L6.4 10.2" stroke="#9c9c9c" stroke-width="0.7"/></svg><div style="left:791.8px;top:56px;width:3.2px;height:390px;background:#7b7e7e;"></div><div style="left:0px;top:0px;width:794px;height:447px;background:rgba(255,255,255,0.17);"></div></div></div><div class="ov"><div style="left:11.4px;top:137px;width:88px;height:175.4px;background:rgba(0,0,0,0.51);border-radius:4px;backdrop-filter:blur(0.7px);"></div><div style="left:28px;top:141.2px;width:55px;height:0.8px;background:#333;"></div><svg style="left:86.4px;top:142.8px;" width="7" height="7" viewBox="0 0 7 7"><path d="M0.6 0.6 L6.4 6.4 M6.4 0.6 L0.6 6.4" stroke="#f4f4f4" stroke-width="1.5"/></svg><div style="left:28px;top:156px;width:19.4px;height:137.2px;border:1px solid #dcdcdc;border-radius:4px;"></div><svg style="left:33.3px;top:159.6px;" width="8.8" height="8.8" viewBox="0 0 8.8 8.8"><path d="M4.4 0 L4.4 8.8 M0 4.4 L8.8 4.4" stroke="#f0f0f0" stroke-width="1.4"/></svg><div style="left:33.5px;top:284.8px;width:8.4px;height:1.5px;background:#f0f0f0;"></div><div style="left:37.7px;top:224.6px;width:0;height:0;"><span class="t" style="left:0;top:0;font-size:7.6px;color:#d8d8d8;transform:translate(-50%,-50%) rotate(-90deg);transform-origin:50% 50%;letter-spacing:0.05px;">Brush Size</span></div><div style="left:62.4px;top:156px;width:19.4px;height:137.2px;border:1px solid #dcdcdc;border-radius:4px;"></div><svg style="left:67.7px;top:159.6px;" width="8.8" height="8.8" viewBox="0 0 8.8 8.8"><path d="M4.4 0 L4.4 8.8 M0 4.4 L8.8 4.4" stroke="#f0f0f0" stroke-width="1.4"/></svg><div style="left:67.9px;top:284.8px;width:8.4px;height:1.5px;background:#f0f0f0;"></div><div style="left:72.1px;top:224.6px;width:0;height:0;"><span class="t" style="left:0;top:0;font-size:7.6px;color:#d8d8d8;transform:translate(-50%,-50%) rotate(-90deg);transform-origin:50% 50%;letter-spacing:0.05px;">Next/Prev Brush</span></div><svg style="left:14.6px;top:294.4px;" width="10.4" height="17" viewBox="0 0 8 15"><rect x="1.6" y="0.6" width="4.8" height="2" fill="#ddd"/><rect x="2.4" y="2.6" width="3.2" height="4" fill="#c4c4c4"/><path d="M0.4 8.8 L7.6 8.8 L6.2 6.6 L1.8 6.6 Z" fill="#e6e6e6"/><path d="M4 9 L4 14.6" stroke="#dadada" stroke-width="1.2"/><rect x="1" y="10" width="6" height="1.4" fill="#bbb"/></svg><svg style="left:82px;top:295.6px;" width="16" height="16" viewBox="0 0 16 16"><path d="M13.8 1 C11 0.2 8.6 2.6 9.6 5.4 L1.4 12.6 C0.4 14.2 2.2 15.8 3.6 14.6 L10.8 6.6 C13.6 7.6 15.8 5.2 15 2.6 L12.8 4.8 L11.2 3.4 Z" fill="#f4f4f4"/></svg><div style="left:18px;top:9px;width:64px;height:40px;background:linear-gradient(#393939 0,#373737 15%,#484848 17%,#474747 50.5%,#3a3a3a 52.5%,#353535 82%,#383838 84%,#323232 100%);opacity:0.97;border-radius:6.5px;"></div><span class="t" style="left:29.6px;top:20.6px;font-size:17px;color:#f6f6f6;letter-spacing:0.040px;">Undo</span></div><div class="win" style="left:302.2px;top:347px;"><div class="soft" style="left:0;top:0;width:794px;height:447px;"><div style="left:0px;top:0px;width:795px;height:15.2px;background:linear-gradient(#707070 0,#5e5e5e 8%,#545454 55%,#4a4a4a);"></div><span class="t" style="left:325px;top:4.3px;font-size:6.2px;color:#d4d4d4;letter-spacing:-0.011px;">07* (7.50 x 11.50in 600dpi 25.0%) - Manga Studio EX</span><div style="left:765px;top:2.6px;width:9px;height:8.6px;border-radius:3.5px;background:#3c3c3c;border:0.8px solid #cfcfcf;"></div><div style="left:776px;top:2.6px;width:9px;height:8.6px;border-radius:3.5px;background:#3c3c3c;border:0.8px solid #cfcfcf;"></div><div style="left:787px;top:2.6px;width:9px;height:8.6px;border-radius:3.5px;background:#3c3c3c;border:0.8px solid #cfcfcf;"></div><div style="left:766.8px;top:7.8px;width:5.4px;height:1.6px;background:#e0e0e0;"></div><div style="left:778.3px;top:4.8px;width:4.6px;height:4.4px;border:1px solid #e0e0e0;"></div><span class="t" style="left:788.3px;top:2.8px;font-size:6.5px;color:#e8e8e8;font-weight:bold;">✕</span><div style="left:0px;top:15.2px;width:795px;height:14.3px;background:linear-gradient(#959595 0,#888 8%,#848484);"></div><span class="t" style="left:4.5px;top:20.4px;font-size:5.9px;color:#eeeeee;letter-spacing:-0.127px;">File</span><span class="t" style="left:21px;top:20.4px;font-size:5.9px;color:#eeeeee;letter-spacing:-0.167px;">Edit</span><span class="t" style="left:38px;top:20.4px;font-size:5.9px;color:#eeeeee;letter-spacing:-0.254px;">Story</span><span class="t" style="left:58px;top:20.4px;font-size:5.9px;color:#eeeeee;letter-spacing:-0.452px;">Layer</span><span class="t" style="left:78.7px;top:20.4px;font-size:5.9px;color:#eeeeee;letter-spacing:-0.419px;">Selection</span><span class="t" style="left:108px;top:20.4px;font-size:5.9px;color:#eeeeee;letter-spacing:-0.546px;">View</span><span class="t" style="left:128px;top:20.4px;font-size:5.9px;color:#eeeeee;letter-spacing:-0.269px;">Filter</span><span class="t" style="left:147px;top:20.4px;font-size:5.9px;color:#eeeeee;letter-spacing:-0.331px;">Window</span><span class="t" style="left:174.4px;top:20.4px;font-size:5.9px;color:#eeeeee;letter-spacing:-0.534px;">Help</span><div style="left:125px;top:29.5px;width:565px;height:20.7px;background:linear-gradient(#8f9292 0,#888b8b 8%,#848787);border-bottom:0.8px solid #6e7171;"></div><svg style="left:131.5px;top:34.5px;" width="11" height="11" viewBox="0 0 11 11"><rect x="0" y="0" width="4.6" height="4.6" fill="#2b2b2b"/><rect x="6.2" y="0" width="4.6" height="4.6" fill="#2b2b2b"/><rect x="0" y="6.2" width="4.6" height="4.6" fill="#2b2b2b"/><rect x="6.2" y="6.2" width="4.6" height="4.6" fill="#2b2b2b"/></svg><svg style="left:162.5px;top:34px;" width="10" height="12" viewBox="0 0 10 12"><path d="M0.5 0.8 L5.5 0.8 L9 4.2 L9 11.5 L0.5 11.5 Z" fill="#f4f4f4" stroke="#c9c9c9" stroke-width="0.6"/><path d="M5.5 0.8 L5.5 4.2 L9 4.2 Z" fill="#bdbdbd"/><path d="M0.2 0.4 L3 0.4" stroke="#555" stroke-width="0.8"/></svg><svg style="left:184.5px;top:34px;" width="12" height="12" viewBox="0 0 12 12"><path d="M0.6 4 L4.4 4 L5.4 5.2 L10.4 5.2 L10.4 11.4 L0.6 11.4 Z" fill="#e6e6e6"/><path d="M0.4 11.4 L2 6.4 L11.6 6.4 L10.4 11.4 Z" fill="#fafafa" stroke="#9a9a9a" stroke-width="0.4"/><path d="M6 3.6 C6.8 1.2 9.6 1 10.8 3.2" fill="none" stroke="#4a4a4a" stroke-width="1"/><path d="M11.6 1.6 L11.2 4.2 L9.2 3.2 Z" fill="#4a4a4a"/></svg><svg style="left:208.5px;top:34px;" width="11" height="12" viewBox="0 0 11 12"><rect x="0.2" y="0.6" width="10.6" height="11" fill="#3f3f3f"/><rect x="1.7" y="0.6" width="7.6" height="8.2" fill="#f4f4f4"/><rect x="2.6" y="9.7" width="5.8" height="1.3" fill="#9a9a9a"/></svg><svg style="left:232px;top:34px;" width="12" height="12" viewBox="0 0 12 12"><rect x="0.5" y="0.5" width="8.5" height="8.5" fill="#e9f1fb" stroke="#3f6fd0" stroke-width="1.3"/><path d="M5.2 4.6 L11.4 9.2 L8.8 9.4 L10.2 11.8 L8.9 12.3 L7.6 9.9 L5.8 11.6 Z" fill="#1c1c1c"/></svg><svg style="left:257px;top:34px;" width="12" height="12" viewBox="0 0 12 12"><rect x="0.5" y="0.5" width="8.5" height="8.5" fill="#e9f1fb" stroke="#3f6fd0" stroke-width="1.3"/><path d="M5.2 4.6 L11.4 9.2 L8.8 9.4 L10.2 11.8 L8.9 12.3 L7.6 9.9 L5.8 11.6 Z" fill="#1c1c1c"/></svg><svg style="left:281px;top:35px;" width="11" height="11" viewBox="0 0 11 11"><path d="M0.6 2.2 L3 0.8 L4.6 2.4 L9.8 1.2 L10.4 8.6 L5 10.4 L3 9.2 L0.8 9.8 Z" fill="#222"/><path d="M3.2 1.8 L4.8 3.4 L4.8 9.4 L3.2 8.2 Z" fill="#e9e9e9"/><path d="M5.4 3.2 L9.4 2.2 L9.8 8 L5.4 9.4 Z" fill="#f6f6f6"/></svg><svg style="left:305px;top:34px;" width="12" height="12" viewBox="0 0 12 12"><rect x="0.5" y="0.5" width="8.5" height="8.5" fill="#e9f1fb" stroke="#3f6fd0" stroke-width="1.3"/><path d="M5.2 4.6 L11.4 9.2 L8.8 9.4 L10.2 11.8 L8.9 12.3 L7.6 9.9 L5.8 11.6 Z" fill="#1c1c1c"/></svg><svg style="left:334.5px;top:35px;" width="13" height="11" viewBox="0 0 13 11"><path d="M3.4 7.6 L9.4 7.6 C12.6 7.6 12.6 2.2 9.4 2.2 L5.6 2.2" fill="none" stroke="#2b2b2b" stroke-width="1.5"/><path d="M4.2 4.6 L0.4 7.6 L4.2 10.6 Z" fill="#2b2b2b"/></svg><svg style="left:358px;top:34.4px;" width="13" height="11" viewBox="0 0 13 11"><path d="M9.6 3.4 L3.6 3.4 C0.4 3.4 0.4 8.8 3.6 8.8 L8.4 8.8" fill="none" stroke="#6c6c6c" stroke-width="1.5"/><path d="M8.8 0.4 L12.6 3.4 L8.8 6.4 Z" fill="#6c6c6c"/></svg><svg style="left:389px;top:34.5px;" width="11" height="11" viewBox="0 0 11 11"><circle cx="9.70" cy="5.50" r="1.15" fill="#262626"/><circle cx="5.50" cy="9.70" r="1.15" fill="#262626"/><circle cx="2.53" cy="8.47" r="1.15" fill="#262626"/><circle cx="1.30" cy="5.50" r="1.15" fill="#262626"/><circle cx="2.53" cy="2.53" r="1.15" fill="#262626"/><circle cx="5.50" cy="1.30" r="1.15" fill="#262626"/><circle cx="8.47" cy="2.53" r="1.15" fill="#262626"/></svg><svg style="left:411px;top:33.5px;" width="14" height="13" viewBox="0 0 14 13"><rect x="3" y="2.5" width="8" height="8" fill="#a9a9a9" stroke="#bdbdbd" stroke-width="0.8"/><path d="M7 0 L9 2 L5 2 Z M7 13 L9 11 L5 11 Z M0 6.5 L2 4.5 L2 8.5 Z M14 6.5 L12 4.5 L12 8.5 Z" fill="#b4b4b4"/></svg><svg style="left:435.5px;top:34px;" width="13" height="12" viewBox="0 0 13 12"><path d="M4.4 3.6 L9.8 1.4 L12.4 7 L7 10.8 Z" fill="#fafafa" stroke="#dedede" stroke-width="0.5"/><path d="M4.6 3.8 C2 5 0.6 7.4 1.2 9.8 C2.4 8 3.6 6.8 5.4 6.2 Z" fill="#2a2a2a"/><path d="M6.2 1 L9 4.6" stroke="#2a2a2a" stroke-width="0.9"/></svg><svg style="left:460.5px;top:34px;" width="12" height="12" viewBox="0 0 12 12"><rect x="3" y="3" width="6" height="6" fill="none" stroke="#2a2a2a" stroke-width="1.4"/><path d="M0.6 0.6 L3.4 3.4 M11.4 0.6 L8.6 3.4 M0.6 11.4 L3.4 8.6 M11.4 11.4 L8.6 8.6" stroke="#2a2a2a" stroke-width="1.5"/></svg><div style="left:482px;top:33px;width:0.8px;height:14px;background:#797c7c;"></div><div style="left:559px;top:33px;width:0.8px;height:14px;background:#797c7c;"></div><div style="left:637px;top:33px;width:0.8px;height:14px;background:#797c7c;"></div><svg style="left:489px;top:35px;" width="11" height="10" viewBox="0 0 11 10"><rect x="0.5" y="0.5" width="10" height="9" fill="#858585" stroke="#8d8d8d" stroke-width="0.6"/><path d="M1.5 8.5 L9.5 1.5" stroke="#6d6d6d" stroke-width="1"/></svg><svg style="left:514.5px;top:35px;" width="11" height="10" viewBox="0 0 11 10"><rect x="0.5" y="0.5" width="10" height="9" fill="#868686"/><path d="M0.5 9.5 L10.5 0.5 L10.5 9.5 Z" fill="#929292"/></svg><svg style="left:539px;top:34.5px;" width="11" height="11" viewBox="0 0 11 11"><rect x="0.5" y="0.5" width="10" height="10" fill="#8c8c8c" stroke="#b9b9b9" stroke-width="0.8" stroke-dasharray="1.2 0.9"/><rect x="2.4" y="2.4" width="6.2" height="6.2" fill="#a6a6a6"/></svg><svg style="left:567.5px;top:34.5px;" width="12" height="12" viewBox="0 0 12 12"><path d="M1.6 9.6 L7 11.6" stroke="#5aace6" stroke-width="1.6" opacity="0.8"/><path d="M1.4 4.2 L9.4 11 L9.4 0.6" fill="none" stroke="#2f3436" stroke-width="1.5"/><path d="M9.2 1.2 L9.2 8.6" stroke="#f2f2f2" stroke-width="0.6"/></svg><svg style="left:592px;top:34.5px;" width="12" height="12" viewBox="0 0 12 12"><path d="M2.8 5 L1 9.8 L9 9.8 L9 0.6" fill="none" stroke="#2f3436" stroke-width="1.5"/><path d="M8.8 1.2 L8.8 7.6" stroke="#f2f2f2" stroke-width="0.6"/><path d="M1.4 10.8 L8 10.8" stroke="#5aace6" stroke-width="0.8" opacity="0.6"/></svg><svg style="left:619px;top:34.5px;" width="9" height="12" viewBox="0 0 9 12"><path d="M2.6 3.4 L2.6 10.6 M6.6 3.4 L6.6 10.6" stroke="#4aa3e8" stroke-width="1.5" opacity="0.85"/><path d="M4.6 0.8 L4.6 10.2" stroke="#2f3436" stroke-width="1.7"/><path d="M4.5 1.4 L4.5 8" stroke="#f2f2f2" stroke-width="0.6"/><path d="M1.6 11 L7.6 11" stroke="#5aace6" stroke-width="0.9" opacity="0.7"/></svg><div style="left:646.2px;top:34.2px;width:11.6px;height:11.6px;border-radius:50%;background:#1f1f1f;"></div><span class="t" style="left:646.2px;top:35.1px;font-size:9.6px;color:#fff;width:11.6px;text-align:center;font-weight:bold;">?</span><div style="left:670.7px;top:34.2px;width:11.6px;height:11.6px;border-radius:50%;background:#1f1f1f;"></div><span class="t" style="left:670.7px;top:35.1px;font-size:9.6px;color:#fff;width:11.6px;text-align:center;font-weight:bold;">?</span><div style="left:125px;top:50.2px;width:565px;height:12px;background:#575757;"></div><div style="left:125px;top:50.6px;width:61.4px;height:11.6px;background:linear-gradient(#777b7b,#6c7070);border-left:0.6px solid rgba(255,255,255,0.18);"></div><span class="t" style="left:127.6px;top:53.4px;font-size:5.4px;color:#9a9a9a;">01</span><div style="left:179px;top:54.8px;width:3px;height:3px;background:#5d5d5d;"></div><div style="left:187px;top:50.6px;width:61.4px;height:11.6px;background:linear-gradient(#777b7b,#6c7070);border-left:0.6px solid rgba(255,255,255,0.18);"></div><span class="t" style="left:189.6px;top:53.4px;font-size:5.4px;color:#9a9a9a;">02</span><div style="left:241px;top:54.8px;width:3px;height:3px;background:#5d5d5d;"></div><div style="left:249px;top:50.6px;width:61.4px;height:11.6px;background:linear-gradient(#777b7b,#6c7070);border-left:0.6px solid rgba(255,255,255,0.18);"></div><span class="t" style="left:251.6px;top:53.4px;font-size:5.4px;color:#9a9a9a;">03</span><div style="left:303px;top:54.8px;width:3px;height:3px;background:#5d5d5d;"></div><div style="left:311px;top:50.6px;width:61.4px;height:11.6px;background:linear-gradient(#777b7b,#6c7070);border-left:0.6px solid rgba(255,255,255,0.18);"></div><span class="t" style="left:313.6px;top:53.4px;font-size:5.4px;color:#9a9a9a;">04</span><div style="left:365px;top:54.8px;width:3px;height:3px;background:#5d5d5d;"></div><div style="left:373px;top:50.6px;width:61.4px;height:11.6px;background:linear-gradient(#969999,#858888);border-left:0.6px solid rgba(255,255,255,0.18);"></div><span class="t" style="left:375.6px;top:53.4px;font-size:5.4px;color:#f2f2f2;">07*</span><div style="left:427px;top:54.8px;width:3px;height:3px;background:#3c3c3c;"></div><div style="left:675px;top:50.8px;width:15px;height:11.4px;background:linear-gradient(#929292,#7f7f7f);"></div><svg style="left:678.5px;top:54.5px;" width="8" height="5" viewBox="0 0 8 5"><path d="M0 0 L8 0 L4 4.6 Z" fill="#3e3e3e"/></svg><div style="left:125px;top:62.2px;width:565px;height:384px;background:#4b4b4b;"></div><div style="left:125px;top:62.2px;width:2px;height:384px;background:#7a7c7c;"></div><div style="left:680.4px;top:62.2px;width:3px;height:385px;background:#5a5a5a;"></div><div style="left:683.3px;top:62.2px;width:6.7px;height:385px;background:#777;"></div><div style="left:211.8px;top:62.7px;width:468.6px;height:385px;background:#fff;overflow:hidden;"><svg style="left:0px;top:0px;" width="468.6" height="385" viewBox="514 409.7 468.6 385"><path d="M521.5 409 L521.5 793" stroke="#f1f1f1" stroke-width="0.9"/><path d="M536.5 409 L536.5 793" stroke="#f1f1f1" stroke-width="0.9"/><path d="M958 409 L958 793" stroke="#f1f1f1" stroke-width="0.9"/><path d="M973 409 L973 793" stroke="#f1f1f1" stroke-width="0.9"/><path d="M553 793 L553 427 L944 427 L944 793" stroke="#e4e4e4" stroke-width="0.8" fill="none"/><path d="M514 790.6 L984 790.6" stroke="#777" stroke-width="3"/><g transform="translate(540 400) scale(0.25000)" fill="none" stroke="#caa" stroke-width="3.20" stroke-linecap="round" stroke-linejoin="round" ><path d="M196,196 L330,216 L326,336 L232,336 L196,296 L210,250 Z" fill="#eed3d6" stroke="#d9b7bc" stroke-width="2"/><path d="M204,240 L240,204 M206,270 L266,208 M212,300 L294,212 M226,324 L322,222 M250,334 L326,254 M280,336 L326,288 M306,336 L326,314" stroke="#d2a9b0" stroke-width="2"/><path d="M332,236 L440,212 L452,290 L470,300 L446,316 L346,336 L326,306 Z" fill="#f7dfd4" stroke="none"/><path d="M400,352 C420,330 450,322 462,334 C458,370 440,398 420,406 C404,408 392,396 400,352 Z" fill="#f2c0c4" stroke="none"/></g><g transform="translate(540 400) scale(0.25000)" fill="none" stroke="#444" stroke-width="3.80" stroke-linecap="round" stroke-linejoin="round" ><path d="M275,110 L275,160 M378,110 L375,165"/><path d="M290,114 L326,204 M370,114 L336,204" stroke="#777"/><path d="M275,160 C250,172 220,182 196,190 M375,165 C400,176 430,188 456,196"/><path d="M196,190 C240,200 290,210 330,216 C370,212 420,204 456,196"/><path d="M196,190 C170,180 146,186 138,220 C130,250 132,300 150,332 L212,286 C202,250 198,220 196,190"/><path d="M132,268 C112,300 100,340 106,392 M150,332 C160,370 150,410 140,440" stroke="#666"/><path d="M456,196 C484,190 510,200 520,240 C528,270 522,300 510,322 L470,300 C458,270 450,230 444,212"/><path d="M524,270 C540,310 548,350 550,392 M470,330 C484,370 500,420 516,470" stroke="#666"/><path d="M196,340 C200,400 206,470 214,544 C240,590 270,630 300,656"/><path d="M462,340 C452,400 442,470 436,544 C416,590 390,624 364,650"/><path d="M196,346 C220,390 244,420 250,440 C256,470 260,500 262,520 M216,360 L250,402 M206,384 L246,430" stroke="#666"/><path d="M250,402 C280,380 370,378 400,402 M325,396 L325,582"/><path d="M250,440 C280,452 305,458 325,456 C350,456 380,450 406,440"/><path d="M262,520 C285,530 305,536 325,536 C350,536 375,530 396,520"/><path d="M250,440 L262,520 C266,560 272,600 320,652 M406,440 L396,520 C390,560 380,610 340,652"/><path d="M396,402 C404,430 404,470 396,520" stroke="#666"/><path d="M300,664 L304,700 L350,700 L352,664" stroke="#888"/><path d="M376,664 C390,650 404,640 420,630" stroke="#999"/></g><g transform="translate(540 400) scale(0.25000)" fill="none" stroke="#ef8d1c" stroke-width="6.00" stroke-linecap="round" stroke-linejoin="round" ><path d="M332,236 C370,226 410,216 440,212 C446,240 450,270 452,290 L470,300 C462,310 452,314 446,316 C410,326 376,332 346,336 C336,326 330,316 326,306 C328,280 330,256 332,236 Z"/><path d="M466,300 C430,280 380,250 346,232 M466,300 C440,270 410,236 386,224 M466,300 C452,270 436,236 420,216 M466,300 C420,296 370,284 330,270 M466,300 C420,310 370,312 328,304"/></g><g transform="translate(540 400) scale(0.25000)" fill="none" stroke="#c4122c" stroke-width="4.80" stroke-linecap="round" stroke-linejoin="round" ><path d="M404,350 C420,332 446,322 462,334 C458,368 442,396 422,406 C404,410 394,396 400,372 Z"/><path d="M402,356 C420,350 444,344 458,346 M398,372 C416,368 440,360 454,360 M398,388 C414,386 434,378 446,374 M404,402 C416,400 430,392 438,388"/></g><g transform="translate(680 400) scale(0.25000)" fill="none" stroke="#444" stroke-width="3.80" stroke-linecap="round" stroke-linejoin="round" ><path d="M262,112 L264,170 M356,112 L352,160"/><path d="M276,116 L318,214 M346,116 L322,214" stroke="#777"/><path d="M264,170 C236,176 206,184 180,190 M352,160 C380,150 400,150 420,160"/><path d="M180,200 C220,204 270,212 316,218 L420,160"/><path d="M180,190 C156,180 132,186 124,220 C116,250 118,300 136,330 L196,286 C186,250 182,220 180,190"/><path d="M118,270 C100,300 88,340 96,380 M136,330 C146,370 140,400 130,430" stroke="#666"/><path d="M406,150 C410,120 440,96 470,96 M470,98 C474,70 480,50 486,34 M502,34 C498,60 490,90 478,112 M542,34 C538,80 526,130 500,170 C480,200 470,240 462,300" stroke="#666"/><path d="M460,130 C466,170 450,230 440,300 C436,340 440,400 440,440" stroke="#666"/><path d="M316,218 C330,240 330,290 320,326 M320,326 C350,330 380,320 392,300"/><path d="M322,222 L440,158 M318,250 L446,162 M320,290 L450,170 M344,322 L452,180" stroke="#777" stroke-width="4"/><path d="M180,300 C220,330 280,336 320,326"/><path d="M180,340 C186,400 192,470 196,540 C220,590 260,630 290,656"/><path d="M440,440 C436,480 434,520 430,560 C410,600 380,630 352,652"/><path d="M182,350 C206,390 232,420 238,440 C244,470 248,500 250,520 M200,360 L236,402 M192,384 L232,430" stroke="#666"/><path d="M238,402 C268,380 358,378 390,406 M318,396 L318,590"/><path d="M238,440 C268,452 293,458 318,456 C343,456 368,450 392,440"/><path d="M250,520 C273,530 293,536 318,536 C343,536 363,530 384,520"/><path d="M238,440 L250,520 C254,560 262,600 310,652 M392,440 L384,520 C378,560 370,610 330,652"/><path d="M292,664 L296,700 L340,700 L342,664" stroke="#888"/><path d="M360,660 C374,646 388,638 404,628" stroke="#999"/></g><g transform="translate(680 400) scale(0.25000)" fill="none" stroke="#c4122c" stroke-width="4.00" stroke-linecap="round" stroke-linejoin="round" ><path d="M446,140 C440,150 446,166 460,162 C470,154 466,134 446,140 Z" stroke-width="3"/><path d="M440,254 C420,290 396,330 384,358 C380,400 400,410 418,390 C436,360 444,320 444,270 Z" fill="#f6cfd2" stroke="none"/><path d="M438,262 C422,290 404,312 396,330 C392,346 404,350 414,338 C428,318 436,292 440,268"/><path d="M428,300 C410,324 392,344 388,362 C388,378 400,380 410,366 C424,346 436,320 440,300"/><path d="M420,336 C404,356 388,376 386,392 C388,408 402,406 412,392 C424,374 436,350 440,330"/><path d="M400,330 L412,316 M396,356 L418,330 M394,380 L420,350 M400,396 L428,360" stroke-width="2.4"/></g><g transform="translate(820 400) scale(0.25000)" fill="none" stroke="#444" stroke-width="3.80" stroke-linecap="round" stroke-linejoin="round" ><path d="M210,112 L212,160 M306,112 L304,160"/><path d="M222,116 L262,216 M298,116 L268,216" stroke="#777"/><path d="M212,160 C190,166 166,174 146,184 M304,160 C330,168 356,176 380,186"/><path d="M146,184 C120,180 96,200 84,236 C74,270 80,310 100,334 C130,340 150,300 156,250 C158,222 154,200 146,184" stroke="#555"/><path d="M380,186 C420,200 444,230 450,270 C456,310 462,350 466,390 M440,250 C450,300 450,350 452,400 C452,420 448,440 446,450" stroke="#666"/><path d="M60,290 C44,330 48,380 64,420 M100,334 C116,370 124,420 116,460" stroke="#777"/><path d="M150,200 C200,206 240,212 264,218 C300,212 340,204 378,200"/><path d="M160,214 C200,220 240,224 262,226 M268,226 C300,222 340,216 372,212" stroke="#666"/><path d="M156,250 C180,300 230,330 262,322 C270,300 268,260 262,226 M268,226 C264,270 262,300 268,322 C300,336 350,330 372,300" stroke="#555"/><path d="M186,226 C200,260 196,296 180,320 M214,228 C232,260 236,290 226,326 M346,216 C330,250 322,290 330,326 M318,220 C300,250 296,290 300,330" stroke="#666"/><path d="M160,340 C200,356 240,352 262,340 M270,340 C300,352 340,350 366,330" stroke="#555"/><path d="M136,380 C140,430 146,490 152,540 C176,590 210,630 240,652"/><path d="M384,410 C384,460 384,510 382,560 C362,600 330,630 300,650"/><path d="M196,400 C226,380 316,376 346,404 M268,396 L268,590"/><path d="M190,404 L196,440 C226,452 246,458 268,456 C293,456 318,450 342,440 L346,404"/><path d="M196,440 L204,520 C227,530 247,536 268,536 C293,536 313,530 334,520 L342,440"/><path d="M204,520 C208,560 216,600 260,652 M334,520 C328,560 320,610 280,652"/><path d="M140,390 C160,420 180,440 194,450 M150,440 C166,470 190,500 204,520" stroke="#777"/><path d="M242,664 L246,700 L290,700 L292,664" stroke="#888"/><path d="M312,656 C326,642 340,634 356,626" stroke="#aaa"/><path d="M372,330 C380,370 388,410 384,450 M400,420 L410,480" stroke="#999"/></g><g transform="translate(820 400) scale(0.25000)" fill="none" stroke="#c4122c" stroke-width="4.00" stroke-linecap="round" stroke-linejoin="round" ><path d="M360,326 C360,312 384,312 384,328 C384,342 360,342 360,326 Z"/><path d="M346,350 C356,346 372,348 376,356 C366,364 350,362 346,350 Z M344,370 C356,364 372,366 378,374 C368,384 350,382 344,370 Z M346,390 C358,384 372,386 378,394 C368,406 352,404 346,390 Z"/><path d="M350,352 L372,360 M348,372 L374,380 M350,392 L372,400" stroke-width="2.4"/></g><g transform="translate(540 600) scale(0.25000)" fill="none" stroke="#caa" stroke-width="3.20" stroke-linecap="round" stroke-linejoin="round" ><path d="M210,336 L250,316 L262,420 L250,470 L222,440 Z" fill="#f4d5b4" stroke="none"/><path d="M400,330 L436,330 L440,440 L404,490 L396,420 Z" fill="#f4d5b4" stroke="none"/><path d="M250,320 C280,296 330,296 400,330 C404,400 396,470 380,520 C370,560 350,580 330,580 L300,570 C280,540 262,480 256,430 C250,380 246,350 250,320 Z" fill="#e2bcc4" stroke="none"/><path d="M258,340 L300,304 M256,376 L330,306 M258,412 L330,342 M262,450 L330,384 M270,486 L330,424 M282,520 L330,468 M296,552 L332,512 M312,572 L336,548" stroke="#c796a4" stroke-width="2.4"/><path d="M330,310 C350,306 380,316 398,332 C402,400 394,470 378,520 C368,556 350,576 332,578 Z" fill="#ecd3dc" stroke="none"/></g><g transform="translate(540 600) scale(0.25000)" fill="none" stroke="#444" stroke-width="3.80" stroke-linecap="round" stroke-linejoin="round" ><path d="M272,34 L272,100 M372,34 L370,100"/><path d="M286,40 L322,130 M366,40 L334,130" stroke="#777"/><path d="M272,92 C246,100 216,108 194,116 M372,96 C398,104 430,112 456,118"/><path d="M194,120 C240,126 290,130 328,134 C370,130 420,124 456,118"/><path d="M194,116 C168,106 144,112 136,146 C128,176 130,220 148,250 L200,200 C192,170 192,140 194,116"/><path d="M130,196 C112,226 100,260 104,300 M148,250 C158,280 152,320 170,350" stroke="#666"/><path d="M456,118 C484,112 510,122 520,160 C528,190 522,220 510,244 L462,204 C458,180 456,150 456,118"/><path d="M524,196 C540,232 548,266 550,300 M462,250 C476,290 492,330 508,372" stroke="#666"/><path d="M200,200 C196,230 206,250 240,256 C280,262 310,250 326,234 C330,200 330,160 328,134 M326,234 C350,256 400,262 440,250 C456,240 462,224 462,204"/><path d="M190,260 C196,300 204,340 210,380 L222,440 L250,470 M460,256 C452,300 444,340 440,380 L440,440"/><path d="M196,270 C216,290 236,304 250,316 M200,296 L244,326 M206,320 L246,340" stroke="#666"/><path d="M454,262 C440,290 420,310 400,330 M450,290 L410,324 M446,312 L412,338" stroke="#666"/><path d="M250,318 C280,296 370,296 400,330 M330,312 L330,580"/><path d="M250,320 L256,430 M400,330 L396,420"/><path d="M256,430 C280,440 305,446 330,444 M262,420 L250,470 C256,520 280,560 300,574 L346,580 C372,560 392,500 404,490 L440,440"/><path d="M256,430 C262,400 280,384 300,386 M270,480 C290,470 310,466 330,470" stroke="#888"/><path d="M304,588 L308,626 L350,626 L352,588" stroke="#888"/><path d="M372,580 C386,566 400,556 420,544" stroke="#999"/></g><g transform="translate(540 600) scale(0.25000)" fill="none" stroke="#4a86df" stroke-width="3.20" stroke-linecap="round" stroke-linejoin="round" ><path d="M400,330 C380,326 356,326 338,318 M396,354 C376,350 354,352 336,344 M394,360 C376,372 354,380 334,378 M390,420 C372,410 352,412 334,404 M388,430 C372,446 352,454 334,452 M384,470 C368,480 350,486 334,484 M376,520 C360,524 346,522 332,520"/><path d="M400,330 m-6,0 a6,6 0 1,0 12,0 a6,6 0 1,0 -12,0 Z M396,356 m-5,0 a5,5 0 1,0 10,0 a5,5 0 1,0 -10,0 Z" fill="#3f7fdc"/><path d="M388,416 L390,440" stroke-width="5"/></g><g transform="translate(540 600) scale(0.25000)" fill="none" stroke="#c4122c" stroke-width="4.00" stroke-linecap="round" stroke-linejoin="round" ><path d="M352,440 L362,450 M364,500 L372,516"/></g><g transform="translate(680 600) scale(0.25000)" fill="none" stroke="#555" stroke-width="3.80" stroke-linecap="round" stroke-linejoin="round" ><path d="M150,76 L152,130 L212,134 M100,110 L120,170" stroke="#666"/><path d="M152,74 L202,132 L216,124 Z" stroke="#333" fill="#444" stroke-width="2"/><path d="M120,170 C150,110 240,90 300,120 C330,100 380,110 404,150 C420,180 400,200 380,206" stroke="#555"/><path d="M280,150 C270,120 300,108 330,112 C370,118 400,150 396,186 C380,210 340,212 300,196 C284,180 282,166 280,150 Z" stroke="#444"/><path d="M404,150 C430,160 456,180 480,206 M420,150 C440,150 456,170 470,196" stroke="#666"/><path d="M120,170 C100,200 96,240 110,290 C130,320 160,330 200,336 M120,172 C130,120 190,84 240,86 C280,88 310,104 330,128" stroke="#aaa"/><path d="M100,210 C130,220 170,216 200,200 C240,180 262,160 282,150" stroke="#444"/><path d="M70,216 C60,250 66,290 90,300 M70,216 C90,200 110,206 124,214 M90,300 C70,310 56,330 52,350 M90,300 C110,310 126,322 140,330" stroke="#555"/><path d="M130,330 C120,350 110,376 100,396" stroke="#555"/><path d="M200,200 C240,190 290,196 330,220 C350,240 352,280 336,320 C300,340 250,340 200,334" stroke="#999"/><path d="M140,330 C180,340 240,344 300,338 M354,240 C390,250 430,260 460,262" stroke="#444" stroke-width="4"/><path d="M190,340 C184,390 176,440 164,490 C170,530 190,560 210,590" stroke="#444"/><path d="M200,380 C230,372 270,372 300,360 M196,420 C226,414 270,416 300,400" stroke="#666"/><path d="M300,340 C310,380 306,430 296,470 C290,500 286,520 290,536" stroke="#555"/><path d="M226,380 C220,430 214,480 218,540 M260,380 C254,430 250,480 246,540" stroke="#777"/><path d="M350,310 C384,320 392,400 380,470 C340,520 290,560 250,590" stroke="#555"/><path d="M336,324 C350,380 350,440 340,500" stroke="#777"/><path d="M204,570 C210,590 240,596 262,576 M210,590 L216,600 L250,596" stroke="#777"/><path d="M380,470 C390,480 396,490 398,500" stroke="#bbb"/></g><g transform="translate(680 600) scale(0.25000)" fill="none" stroke="#c4122c" stroke-width="4.00" stroke-linecap="round" stroke-linejoin="round" ><path d="M324,244 C340,236 356,246 358,262 C356,290 340,320 322,334 C306,336 296,326 298,306 C304,280 312,258 324,244 Z" fill="#f1b9be" stroke="none"/><path d="M322,250 C330,256 346,258 356,254 M314,268 C326,276 344,278 356,274 M306,290 C320,298 338,300 350,296 M300,310 C314,318 330,320 342,316 M302,328 C312,332 324,332 332,328"/><path d="M326,244 L306,330 M340,242 L320,334 M354,250 L336,328" stroke-width="2.4"/><path d="M148,314 C160,310 180,316 190,326 C184,336 166,338 152,330 Z" fill="#e88a92"/><path d="M152,318 L184,332 M160,314 L188,328" stroke-width="2.4"/></g><g transform="translate(820 600) scale(0.25000)" fill="none" stroke="#555" stroke-width="3.80" stroke-linecap="round" stroke-linejoin="round" ><path d="M124,100 C170,116 230,124 296,126" stroke="#333" stroke-width="5"/><path d="M124,100 C96,120 70,150 56,190 C50,220 50,250 58,280" stroke="#777"/><path d="M130,110 C116,140 104,170 100,212 M160,120 L150,150" stroke="#777"/><path d="M296,126 C310,116 336,130 350,156 C360,190 350,230 330,250 C310,246 290,236 276,226 C270,190 280,150 296,126 Z" stroke="#555"/><path d="M350,190 C370,210 380,250 378,284 M330,250 C350,260 370,270 384,280" stroke="#777"/><path d="M56,190 C70,200 90,210 104,214 M100,212 C150,224 210,228 276,226" stroke="#444"/><path d="M60,284 C80,270 110,270 130,286 C170,300 220,296 262,280 C280,270 300,260 304,244" stroke="#555"/><path d="M276,226 C300,236 320,246 330,250 M304,244 C300,280 316,306 336,326" stroke="#555"/><path d="M50,290 C50,370 60,450 80,520 C96,546 120,556 150,552" stroke="#555"/><path d="M64,300 C66,370 74,440 92,500 M90,300 C90,360 96,420 110,480" stroke="#888"/><path d="M130,290 C150,320 170,340 180,356 C184,400 176,460 166,520" stroke="#666"/><path d="M96,380 C120,372 150,372 176,366 M100,430 C124,424 150,426 176,416 M110,480 C130,476 150,478 170,470" stroke="#888"/><path d="M180,356 C200,340 236,320 262,300" stroke="#555"/><path d="M262,300 C250,340 236,380 210,410 C226,440 236,470 232,500 C210,530 180,556 150,574" stroke="#444"/><path d="M104,548 C120,570 150,590 180,600 M150,552 C170,560 200,556 220,540" stroke="#999"/></g><g transform="translate(820 600) scale(0.25000)" fill="none" stroke="#c4122c" stroke-width="4.00" stroke-linecap="round" stroke-linejoin="round" ><path d="M44,216 C54,210 66,214 70,224 C66,250 64,270 56,284 C44,270 40,240 44,216 Z" fill="#f0a8ae" stroke="none"/><path d="M46,220 C54,226 62,226 70,222 M44,238 C52,244 60,244 68,240 M46,256 C52,262 60,262 66,258 M50,272 C54,276 58,276 62,274 M48,216 L56,282 M60,214 L62,276" stroke-width="3"/><path d="M176,244 C200,232 240,228 268,240 C260,266 220,290 170,302 C150,300 150,270 176,244 Z" fill="#f3bcc0" stroke="none"/><path d="M180,246 C206,236 240,234 264,242 M168,262 C196,252 234,250 260,256 M160,278 C188,268 222,266 250,270 M156,294 C180,286 208,284 232,284 M176,244 C196,262 210,280 214,296 M214,236 C228,250 238,266 240,280"/></g></svg></div><div style="left:127px;top:443.4px;width:557px;height:2.8px;background:#5a5a5a;"></div><div style="left:251.8px;top:443.4px;width:428.6px;height:2.8px;background:#7a7a7a;"></div><div style="left:185.8px;top:443.6px;width:60px;height:2.6px;background:#2c2c2c;"></div><div style="left:0px;top:29.5px;width:124.6px;height:12.7px;background:linear-gradient(#656565,#575757);"></div><div style="left:15.6px;top:30px;width:0.7px;height:26px;background:#787878;"></div><div style="left:114px;top:33px;width:0.8px;height:6px;background:#858585;"></div><div style="left:0px;top:42.2px;width:124.6px;height:14px;background:linear-gradient(#626262,#515151);"></div><div style="left:0px;top:42.2px;width:124.6px;height:0.7px;background:#505050;"></div><svg style="left:4.4px;top:47.5px;" width="5.4" height="5" viewBox="0 0 5.4 5"><path d="M0 0.6 L1 0.6 M2 0.6 L5.4 0.6 M0 2.5 L1 2.5 M2 2.5 L5.4 2.5 M0 4.4 L1 4.4 M2 4.4 L5.4 4.4" stroke="#9c9c9c" stroke-width="0.8"/></svg><svg style="left:22px;top:47.5px;" width="5.4" height="5" viewBox="0 0 5.4 5"><path d="M0 0.6 L1 0.6 M2 0.6 L5.4 0.6 M0 2.5 L1 2.5 M2 2.5 L5.4 2.5 M0 4.4 L1 4.4 M2 4.4 L5.4 4.4" stroke="#9c9c9c" stroke-width="0.8"/></svg><div style="left:30.8px;top:46.5px;width:57px;height:10px;background:linear-gradient(#8f9292,#858888);border-radius:1px 1px 0 0;"></div><svg style="left:33.6px;top:46.2px;" width="11" height="11" viewBox="0 0 11 11"><path d="M2.6 0.4 L3.8 5.6 L3.8 9.4 L1.6 9.4 L1.6 5.6 Z" fill="#e8e8e8"/><rect x="1.2" y="9.2" width="3" height="1.6" fill="#1c1c1c"/><path d="M5.6 1.6 L10 1.6 M5.6 4.8 L10 4.8 M5.6 8 L10 8" stroke="#d0d0d0" stroke-width="0.9" stroke-dasharray="1.5 0.8"/></svg><span class="t" style="left:47.2px;top:50.3px;font-size:5.7px;color:#f2f2f2;letter-spacing:-0.289px;">Sub Tool [Conan]</span><div style="left:0px;top:56.2px;width:15px;height:390px;background:#878888;"></div><div style="left:15px;top:56.2px;width:1.6px;height:390px;background:#7c7e7e;"></div><div style="left:0px;top:186.7px;width:15px;height:16px;background:linear-gradient(#a9bcc6,#93a8b3);"></div><svg style="left:1.3px;top:61.8px;" width="12.4" height="12.4" viewBox="0 0 14 14"><circle cx="5.6" cy="5.4" r="4" fill="#f4f4f4"/><circle cx="5.2" cy="5.8" r="1.7" fill="#6a6a6a"/><path d="M8.4 8.4 L12.2 12.6" stroke="#4a4a4a" stroke-width="1.7"/></svg><svg style="left:1.3px;top:76.8px;" width="12.4" height="12.4" viewBox="0 0 14 14"><path d="M3.4 13 L3 9.4 L0.8 6.6 L2 6 L3.8 7.6 L3.4 2.2 L4.8 2 L5.6 5.8 L6 1 L7.4 1 L7.6 5.8 L8.8 1.8 L10.2 2.2 L9.6 6.4 L11.4 3.8 L12.6 4.6 L10.6 9.6 L10 13 Z" fill="#f4f4f4"/></svg><svg style="left:1.3px;top:92.8px;" width="12.4" height="12.4" viewBox="0 0 14 14"><path d="M1 3.4 L5 1.4 L9.4 3 L9.4 8 L5.4 10 L1 8.4 Z" fill="#f4f4f4"/><path d="M1 3.4 L5.4 5 L9.4 3 M5.4 5 L5.4 10" stroke="#8a8a8a" stroke-width="0.6" fill="none"/><circle cx="9.6" cy="9" r="2.4" fill="none" stroke="#f4f4f4" stroke-width="1.2"/><path d="M11.2 10.8 L13.4 13.4" stroke="#f4f4f4" stroke-width="1.4"/></svg><svg style="left:1.3px;top:108.8px;" width="12.4" height="12.4" viewBox="0 0 14 14"><path d="M7 0.6 L7 13.4 M0.6 7 L13.4 7" stroke="#555" stroke-width="1.2"/><path d="M7 0 L9 2.6 L5 2.6 Z M7 14 L9 11.4 L5 11.4 Z M0 7 L2.6 5 L2.6 9 Z M14 7 L11.4 5 L11.4 9 Z" fill="#555"/><path d="M1 1 L6.4 5.2 L4 5.4 L5.4 8 L4.4 8.6 L3 6 L1.4 7.8 Z" fill="#3c3c3c"/></svg><svg style="left:1.3px;top:124.8px;" width="12.4" height="12.4" viewBox="0 0 14 14"><ellipse cx="7" cy="7" rx="6" ry="3.6" fill="none" stroke="#565959" stroke-width="1" transform="rotate(-14 7 7)"/></svg><svg style="left:1.3px;top:140.8px;" width="12.4" height="12.4" viewBox="0 0 14 14"><path d="M2.6 2.6 L5 3.6 L6.4 1.6 L6.8 4 L9.2 4.6 L7.2 6 L7.4 8.4 L5.4 7 L3.2 8 L4 5.8 Z" fill="#f4f4f4"/><path d="M7 6.8 L11.6 12" stroke="#555" stroke-width="1.1"/></svg><svg style="left:1.3px;top:155.8px;" width="12.4" height="12.4" viewBox="0 0 14 14"><path d="M3 12 L3.6 10.2 L8.2 5 L9.4 6.2 L4.8 11.4 Z" fill="#e4e4e4"/><path d="M7.8 4.2 L10 2 L12 4 L10 6.4 Z" fill="#2e2e2e"/></svg><svg style="left:1.3px;top:172.3px;" width="12.4" height="12.4" viewBox="0 0 14 14"><path d="M12.6 0.8 L5.4 8.4" stroke="#f4f4f4" stroke-width="1.5"/><path d="M5.6 8 L2.2 9.6 L1.2 12.4 L4.6 11.6 L6.2 8.8 Z" fill="#f4f4f4"/><path d="M5 12.6 L11 12.2" stroke="#c3a9a0" stroke-width="1.6"/></svg><svg style="left:1.3px;top:188.5px;" width="12.4" height="12.4" viewBox="0 0 14 14"><path d="M12.6 0.8 L5.6 8.2" stroke="#f4f4f4" stroke-width="1.6"/><path d="M5.8 7.6 L2 9 L1 12.6 L5 12 L6.6 8.6 Z" fill="#f4f4f4"/><path d="M5.4 12.8 L9 12.6" stroke="#444" stroke-width="1.2"/></svg><svg style="left:1.3px;top:203.8px;" width="12.4" height="12.4" viewBox="0 0 14 14"><path d="M3 1.6 L5.4 4" stroke="#f4f4f4" stroke-width="1.2"/><path d="M4.4 5.2 L6.6 3 L12.4 9.4 L9.6 12 Z" fill="#f4f4f4"/><path d="M9 10 L12 13" stroke="#555" stroke-width="1.4"/></svg><svg style="left:1.3px;top:218.8px;" width="12.4" height="12.4" viewBox="0 0 14 14"><path d="M12.4 1 L6 8" stroke="#f4f4f4" stroke-width="1.5"/><ellipse cx="6" cy="10.6" rx="5.4" ry="2.4" fill="#e9b9b0"/></svg><svg style="left:1.3px;top:235.3px;" width="12.4" height="12.4" viewBox="0 0 14 14"><path d="M2 5 L9 3 L12.4 5.2 L12.4 9 L5.4 11.6 L2 9 Z" fill="#f4f4f4"/><path d="M2 7 L5.4 9.4 L12.4 7" fill="none" stroke="#8c8c8c" stroke-width="0.8"/><circle cx="11.8" cy="2" r="1" fill="#7fc27f"/></svg><svg style="left:1.3px;top:250.8px;" width="12.4" height="12.4" viewBox="0 0 14 14"><path d="M5 1 L5.8 4.2 L9 5 L5.8 5.8 L5 9 L4.2 5.8 L1 5 L4.2 4.2 Z M10 7 L10.6 9.4 L13 10 L10.6 10.6 L10 13 L9.4 10.6 L7 10 L9.4 9.4 Z" fill="#4f5252"/></svg><svg style="left:1.3px;top:266.8px;" width="12.4" height="12.4" viewBox="0 0 14 14"><path d="M2.4 4.4 L8.4 2.4 L12.6 5 L12.6 7.6 L6.6 10.4 L2.4 7.4 Z" fill="#f4f4f4"/><path d="M1.4 9.6 L5.8 12.6 L12 9.8" fill="none" stroke="#dcdcdc" stroke-width="1.3"/></svg><svg style="left:1.3px;top:282.8px;" width="12.4" height="12.4" viewBox="0 0 14 14"><path d="M4.4 3 C6.4 6.4 7.6 8 7.6 9.8 A3.2 3.2 0 0 1 1.2 9.8 C1.2 8 2.4 6.4 4.4 3 Z" fill="#2c2c2c"/><path d="M9.6 4.6 C11 7 12.4 8.6 12.4 10.2 A2.8 2.8 0 0 1 6.8 10.2 C6.8 8.6 8.2 7 9.6 4.6 Z" fill="#f0f0f0"/></svg><svg style="left:1.3px;top:299.3px;" width="12.4" height="12.4" viewBox="0 0 14 14"><path d="M4.4 4.6 L9.6 2 L12.6 7.8 L7 11.6 Z" fill="#f4f4f4"/><path d="M4.6 4.8 C2 6 0.6 8.4 1.2 11.4 C2.4 9.4 3.6 8 5.4 7.2 Z" fill="#2a2a2a"/><path d="M6.2 1.4 L8.8 5.4" stroke="#2a2a2a" stroke-width="0.9"/></svg><svg style="left:1.3px;top:314.3px;" width="12.4" height="12.4" viewBox="0 0 14 14"><defs><linearGradient id="tg" x1="0" y1="0" x2="1" y2="1"><stop offset="0" stop-color="#1e1e1e"/><stop offset="1" stop-color="#f0f0f0"/></linearGradient></defs><rect x="1.6" y="1.6" width="10.8" height="10.8" fill="url(#tg)"/></svg><svg style="left:1.3px;top:330.8px;" width="12.4" height="12.4" viewBox="0 0 14 14"><path d="M2 2 L2 12 L12.4 12 Z" fill="none" stroke="#7fd0f4" stroke-width="1.5"/><path d="M4.6 7.8 L4.6 9.8 L7 9.8 Z" fill="#e8f6ff"/></svg><svg style="left:1.3px;top:362.3px;" width="12.4" height="12.4" viewBox="0 0 14 14"><path d="M2.4 0.8 L2.4 13" stroke="#4a6a7c" stroke-width="0.9"/><path d="M3.4 3.4 L11 9.6 L7.8 9.8 L9.8 13 L8.6 13.6 L6.8 10.4 L4.6 12.4 Z" fill="#f0f0f0" stroke="#555" stroke-width="0.4"/></svg><span class="t" style="left:1px;top:346px;font-size:12.5px;color:#3e4040;width:13px;text-align:center;font-family:"Liberation Serif",serif;">A</span><div style="left:0.5px;top:170.5px;width:14px;height:0.8px;background:#727575;"></div><div style="left:0.5px;top:297.5px;width:14px;height:0.8px;background:#727575;"></div><div style="left:0.5px;top:328.5px;width:14px;height:0.8px;background:#727575;"></div><div style="left:5.4px;top:382.6px;width:9.4px;height:9.6px;background:#fff;border:0.5px solid #cfcfcf;"></div><div style="left:0.6px;top:377.4px;width:8.4px;height:8.2px;background:#111;border:0.8px solid #9fb3bd;"></div><div style="left:0px;top:393px;width:15px;height:3.8px;background:repeating-conic-gradient(#fff 0 25%,#555 0 50%) 0 0/3.8px 3.8px;"></div><div style="left:16.6px;top:56.2px;width:108px;height:232.6px;background:#858888;"></div><div style="left:17.4px;top:59.4px;width:52px;height:16.4px;background:linear-gradient(#a5bac5,#8da4b0);border:0.7px solid #5f747e;"></div><svg style="left:20px;top:61.4px;" width="11" height="12" viewBox="0 0 11 12"><path d="M10 0.8 L4.4 7" stroke="#f6f6f6" stroke-width="1.3"/><path d="M4.6 6.6 L1.6 7.8 L0.8 10.4 L3.8 10 L5.2 7.4 Z" fill="#f6f6f6"/><path d="M3.8 10.8 L7.4 10.4" stroke="#41505a" stroke-width="1"/></svg><span class="t" style="left:34.6px;top:65.4px;font-size:5.6px;color:#f0f4f6;letter-spacing:-0.701px;">Conan</span><div style="left:17.6px;top:76.4px;width:107px;height:0.7px;background:#6c6f6f;"></div><div style="left:17.6px;top:77px;width:101.2px;height:21.4px;background:linear-gradient(#a4bac5,#9cb2bd 50%,#88a0ac);border-bottom:0.8px solid #666a6a;"></div><svg style="left:34px;top:79.5px;" width="52" height="9" viewBox="0 0 52 9"><path d="M2 3.24 C13 0.18,21.84 2.7,28.6 5.58 S44.2 7.2,50 4.68" fill="none" stroke="#2f3a42" stroke-width="1.2" stroke-linecap="round" opacity="0.85"/></svg><span class="t" style="left:106.5px;top:92.1px;font-size:5.6px;color:#f4f4f4;letter-spacing:-1.001px;">Conan</span><div style="left:17.6px;top:98.6px;width:101.2px;height:22.2px;background:#868989;border-bottom:0.8px solid #666a6a;"></div><div style="left:56px;top:103.6px;width:5px;height:2px;background:rgba(120,125,125,0.5);border-radius:50%;transform:rotate(25deg);"></div><span class="t" style="left:62px;top:114.5px;font-size:5.6px;color:#f4f4f4;letter-spacing:-0.457px;">DAUB | Fine Pencil Normal</span><div style="left:17.6px;top:121px;width:101.2px;height:22px;background:#868989;border-bottom:0.8px solid #666a6a;"></div><svg style="left:28px;top:123.5px;" width="62" height="10.5" viewBox="0 0 62 10.5"><path d="M1 6.93 C13.64 1.05,26.04 1.89,34.72 6.09 S53.32 9.66,61 4.2" fill="none" stroke="#1e2224" stroke-width="2.2" stroke-linecap="round" opacity="0.25"/><path d="M8.68 3.78 C18.6 1.47,27.28 2.73,34.72 6.09 S48.36 8.82,55.8 6.09" fill="none" stroke="#16191b" stroke-width="1.7" stroke-linecap="round" opacity="0.9"/></svg><span class="t" style="left:71.5px;top:136.7px;font-size:5.6px;color:#f4f4f4;letter-spacing:-0.483px;">Simple Copic Marker 2</span><div style="left:118.9px;top:77px;width:0.7px;height:194px;background:#6c6f6f;"></div><div style="left:119.6px;top:77px;width:5px;height:194px;background:#8e9191;"></div><svg style="left:94px;top:274px;" width="10" height="12" viewBox="0 0 10 12"><path d="M0.6 0.6 L9.2 0.6 L9.2 8 L6 11.4 L0.6 11.4 Z" fill="#f6f6f6"/><path d="M9.2 8 L6 8 L6 11.4 Z" fill="#b9b9b9"/></svg><svg style="left:111px;top:274px;" width="10" height="12" viewBox="0 0 10 12"><path d="M1.4 4 L8.6 4 L7.8 11.4 L2.2 11.4 Z" fill="#f4f4f4"/><rect x="0.6" y="2" width="8.8" height="1.8" fill="#ededed"/><rect x="3.4" y="0.6" width="3.2" height="1.4" fill="#e2e2e2"/><path d="M3.6 5.4 L3.8 10 M6.4 5.4 L6.2 10" stroke="#9c9c9c" stroke-width="0.7"/></svg><div style="left:16.6px;top:288.4px;width:108px;height:13.5px;background:linear-gradient(#626262,#515151);"></div><svg style="left:22px;top:293.5px;" width="5.4" height="5" viewBox="0 0 5.4 5"><path d="M0 0.6 L1 0.6 M2 0.6 L5.4 0.6 M0 2.5 L1 2.5 M2 2.5 L5.4 2.5 M0 4.4 L1 4.4 M2 4.4 L5.4 4.4" stroke="#9c9c9c" stroke-width="0.8"/></svg><div style="left:31.7px;top:290.5px;width:66.6px;height:11.4px;background:linear-gradient(#8f9292,#858888);border-radius:1px 1px 0 0;"></div><svg style="left:34px;top:290.1px;" width="11" height="11" viewBox="0 0 11 11"><path d="M2.4 1 L3.4 6 L3.4 9 L1.6 9 L1.6 6 Z" fill="#e2e2e2"/><rect x="1.2" y="8.8" width="2.8" height="1.6" fill="#1c1c1c"/><circle cx="7.4" cy="3.6" r="2.4" fill="#1c1c1c"/><circle cx="7.4" cy="3.6" r="0.9" fill="#9a9a9a"/></svg><span class="t" style="left:47.5px;top:295.5px;font-size:5.6px;color:#f0f0f0;letter-spacing:-0.216px;">Tool property [Conan]</span><div style="left:100px;top:291.5px;width:18px;height:10.4px;background:#6f7171;"></div><svg style="left:104px;top:293.1px;" width="10" height="7" viewBox="0 0 10 7"><path d="M1 0 L1 7" stroke="#8c8c8c" stroke-width="0.8"/><path d="M4 1 L9 1 M4 3.6 L9 3.6 M4 6.2 L9 6.2" stroke="#8a8a8a" stroke-width="0.9" stroke-dasharray="1.4 1"/></svg><div style="left:17.6px;top:305px;width:107px;height:23.2px;background:#8a8d8d;border-bottom:0.8px solid #6a6d6d;"></div><div style="left:17.6px;top:305px;width:52.6px;height:23.2px;background:#b3b5b5;"></div><svg style="left:30px;top:308.4px;" width="76" height="14.5" viewBox="0 0 76 14.5"><path d="M2 5.22 C19 0.29,31.92 4.35,41.8 8.99 S64.6 11.6,74 7.54" fill="none" stroke="#30383e" stroke-width="1.2" stroke-linecap="round" opacity="0.9"/></svg><div style="left:17.6px;top:305px;width:18px;height:6px;background:#6f7373;"></div><span class="t" style="left:18.6px;top:305.6px;font-size:5.2px;color:#e8e8e8;letter-spacing:-0.665px;">Conan</span><svg style="left:108px;top:314.4px;" width="13" height="13" viewBox="0 0 13 13"><circle cx="5" cy="5" r="3.6" fill="#e6e6e6" stroke="#fafafa" stroke-width="1.1"/><circle cx="5" cy="5" r="2" fill="#a4a7a7"/><path d="M7.8 7.8 L12 12" stroke="#f2f2f2" stroke-width="2.2" stroke-linecap="round"/></svg><div style="left:18.9px;top:329px;width:100px;height:102.7px;background:#868989;border:0.6px solid #7a7d7d;border-top:none;"></div><div style="left:119.6px;top:329px;width:5px;height:102.7px;background:#8e9191;"></div><span class="t" style="left:27.8px;top:330.6px;font-size:5.6px;color:#f2f2f2;letter-spacing:-0.408px;">Brush Size</span><div style="left:41px;top:339.7px;width:40px;height:5.2px;background:#7b7e7e;border-bottom:0.6px solid #979a9a;"></div><div style="left:41px;top:339.7px;width:18px;height:5.2px;background:linear-gradient(90deg,#a2a4a4,#c4c6c6);border:0.5px solid #6f7272;"></div><span class="t" style="left:89px;top:334.7px;font-size:5.4px;color:#f0f0f0;letter-spacing:-0.378px;">0.06</span><svg style="left:102px;top:334.1px;" width="4.4" height="8.6" viewBox="0 0 4.4 8.6"><path d="M2.2 0.4 L4.2 3.2 L0.2 3.2 Z M2.2 8.2 L4.2 5.4 L0.2 5.4 Z" fill="#2e2e2e"/></svg><div style="left:108.4px;top:333.1px;width:7.6px;height:10.6px;background:#959898;border:0.5px solid #747777;"></div><svg style="left:109.4px;top:333.9px;" width="5.6" height="9" viewBox="0 0 5.6 9"><path d="M2.8 0.6 C4.4 0.6 4.8 3 3.8 4.6 L3.4 7 L2.2 7 L1.8 4.6 C0.8 3 1.2 0.6 2.8 0.6 Z" fill="#f2f2f2"/><path d="M1.4 8 L4.2 8" stroke="#3a3a3a" stroke-width="1"/></svg><span class="t" style="left:27.8px;top:350.8px;font-size:5.6px;color:#f2f2f2;letter-spacing:-0.426px;">Opacity</span><div style="left:41px;top:360.5px;width:38.4px;height:5px;background:linear-gradient(90deg,#a2a4a4,#c6c8c8);border:0.5px solid #6f7272;"></div><span class="t" style="left:91px;top:356.5px;font-size:5.4px;color:#f0f0f0;letter-spacing:-0.670px;">100</span><svg style="left:102px;top:355.5px;" width="4.4" height="8.6" viewBox="0 0 4.4 8.6"><path d="M2.2 0.4 L4.2 3.2 L0.2 3.2 Z M2.2 8.2 L4.2 5.4 L0.2 5.4 Z" fill="#2e2e2e"/></svg><div style="left:24px;top:370.5px;width:94px;height:0.6px;background:#7b7e7e;"></div><span class="t" style="left:27.8px;top:376.2px;font-size:5.5px;color:#f0f0f0;letter-spacing:-1.136px;">Anti-al…</span><div style="left:46.4px;top:371.7px;width:61.4px;height:15px;background:#8f9292;border:0.5px solid #7a7d7d;"></div><div style="left:77.7px;top:371.7px;width:15.4px;height:15px;background:#a7bbc9;border:0.6px solid #c4d4de;"></div><div style="left:49.8px;top:374.4px;width:9.6px;height:9.6px;border-radius:50%;background:#3c3f44;"></div><div style="left:64.6px;top:373.8px;width:10.8px;height:10.8px;border-radius:50%;background:radial-gradient(circle,#3a3a3a 0,#4a4a4a 3.0px,#c9c9c9 4.4px,#c4c4c4 4.800000000000001px,#9a9a9a 5.4px);"></div><div style="left:80px;top:373.8px;width:10.8px;height:10.8px;border-radius:50%;background:radial-gradient(circle,#3a3a3a 0,#5a5a5a 2.6px,#c9c9c9 4.0px,#c4c4c4 4.800000000000001px,#9a9a9a 5.4px);"></div><div style="left:95.4px;top:373.8px;width:10.8px;height:10.8px;border-radius:50%;background:radial-gradient(circle,#3a3a3a 0,#6a6a6a 2.2px,#c9c9c9 3.6px,#c4c4c4 4.800000000000001px,#9a9a9a 5.4px);"></div><div style="left:108.4px;top:371.7px;width:8px;height:15px;background:#8f9292;"></div><svg style="left:109.4px;top:377.6px;" width="6" height="4" viewBox="0 0 6 4"><path d="M0 0 L6 0 L3 3.6 Z" fill="#3a3a3a"/></svg><div style="left:24px;top:390.3px;width:94px;height:0.6px;background:#7b7e7e;"></div><span class="t" style="left:27.8px;top:396.65px;font-size:5.5px;color:#f0f0f0;letter-spacing:-0.358px;">Stabilization</span><div style="left:55.6px;top:392.5px;width:10px;height:13.3px;background:#b0b2b2;border:0.6px solid #707373;"></div><div style="left:66px;top:392.5px;width:10px;height:13.3px;background:#b0b2b2;border:0.6px solid #707373;"></div><div style="left:76.4px;top:392.5px;width:10px;height:13.3px;background:#b0b2b2;border:0.6px solid #707373;"></div><div style="left:86.8px;top:392.5px;width:10px;height:13.3px;background:#b0b2b2;border:0.6px solid #707373;"></div><div style="left:97.2px;top:392.5px;width:10px;height:13.3px;background:#7c7f7f;border:0.6px solid #707373;"></div><div style="left:108.6px;top:392.5px;width:7.6px;height:13.3px;background:#7c7f7f;border:0.5px solid #6c6f6f;"></div><svg style="left:111px;top:397.05px;" width="3" height="4.4" viewBox="0 0 3 4.4"><path d="M0 0 L2.8 2.2 L0 4.4 Z" fill="#2e2e2e"/></svg><div style="left:24px;top:410.1px;width:94px;height:0.6px;background:#7b7e7e;"></div><div style="left:28px;top:415.3px;width:7.4px;height:7.4px;background:#919494;border:0.5px solid #858888;"></div><span class="t" style="left:38px;top:416px;font-size:5.4px;color:#a9acac;letter-spacing:-0.294px;">Vector magnet</span><div style="left:72.4px;top:412.5px;width:6.7px;height:12.4px;background:#7e8181;border:0.6px solid #6b6e6e;"></div><div style="left:79.4px;top:412.5px;width:6.7px;height:12.4px;background:#7e8181;border:0.6px solid #6b6e6e;"></div><div style="left:86.4px;top:412.5px;width:6.7px;height:12.4px;background:#7e8181;border:0.6px solid #6b6e6e;"></div><div style="left:93.4px;top:412.5px;width:6.7px;height:12.4px;background:#7e8181;border:0.6px solid #6b6e6e;"></div><div style="left:100.4px;top:412.5px;width:6.7px;height:12.4px;background:#7e8181;border:0.6px solid #6b6e6e;"></div><div style="left:108.6px;top:412.5px;width:7.6px;height:12.4px;background:#8a8d8d;"></div><svg style="left:111.4px;top:417.4px;" width="2" height="3" viewBox="0 0 2 3"><path d="M0 0 L2 1.5 L0 3 Z" fill="#6c6f6f"/></svg><div style="left:18.9px;top:431.7px;width:105.8px;height:0.7px;background:#707373;"></div><svg style="left:91.5px;top:435.4px;" width="10" height="10" viewBox="0 0 10 10"><path d="M8.00 5.00 L9.51 6.65" stroke="#3d4040" stroke-width="1"/><path d="M7.43 6.76 L7.68 8.98" stroke="#3d4040" stroke-width="1"/><path d="M5.93 7.85 L4.83 9.80" stroke="#3d4040" stroke-width="1"/><path d="M4.07 7.85 L2.04 8.78" stroke="#3d4040" stroke-width="1"/><path d="M2.57 6.76 L0.38 6.32" stroke="#3d4040" stroke-width="1"/><path d="M2.00 5.00 L0.49 3.35" stroke="#3d4040" stroke-width="1"/><path d="M2.57 3.24 L2.32 1.02" stroke="#3d4040" stroke-width="1"/><path d="M4.07 2.15 L5.17 0.20" stroke="#3d4040" stroke-width="1"/><path d="M5.93 2.15 L7.96 1.22" stroke="#3d4040" stroke-width="1"/><path d="M7.43 3.24 L9.62 3.68" stroke="#3d4040" stroke-width="1"/></svg><svg style="left:109px;top:434.6px;" width="12" height="12" viewBox="0 0 12 12"><path d="M2.4 0.8 L2.4 4 L4 5.2 L4 11.4 L6 11.4 L6 5.2 L7.6 4 L7.6 0.8 L6.2 0.8 L6.2 3 L3.8 3 L3.8 0.8 Z" fill="#f2f2f2"/><path d="M9 0.8 C11.4 1.4 11.6 4.4 9.8 5.4 L9.8 11.4 L8 11.4 L8 5.2" fill="#dcdcdc"/></svg><div style="left:124.6px;top:29.5px;width:0.6px;height:417px;background:#5e6060;"></div><div style="left:690px;top:29.5px;width:105px;height:417px;background:#858888;"></div><div style="left:690px;top:29.5px;width:1.2px;height:417px;background:#6b6e6e;"></div><div style="left:690px;top:29.5px;width:105px;height:12.7px;background:linear-gradient(#656565,#575757);"></div><div style="left:692.4px;top:33px;width:0.8px;height:6px;background:#858585;"></div><div style="left:690px;top:42.2px;width:105px;height:13.6px;background:linear-gradient(#626262,#515151);"></div><svg style="left:694.4px;top:48.4px;" width="5.4" height="5" viewBox="0 0 5.4 5"><path d="M0 0.6 L1 0.6 M2 0.6 L5.4 0.6 M0 2.5 L1 2.5 M2 2.5 L5.4 2.5 M0 4.4 L1 4.4 M2 4.4 L5.4 4.4" stroke="#9c9c9c" stroke-width="0.8"/></svg><div style="left:704px;top:46.8px;width:45.4px;height:8.8px;background:#6f7171;border-radius:1px 1px 0 0;"></div><div style="left:706.6px;top:47.6px;width:7px;height:7.2px;border-radius:50%;background:radial-gradient(circle at 40% 35%,#b9b9b9,#8a8a8a 60%,#777);"></div><span class="t" style="left:715.6px;top:50.2px;font-size:5.6px;color:#9c9e9e;letter-spacing:0.017px;">Color Wheel</span><div style="left:750px;top:46.6px;width:39.6px;height:9px;background:linear-gradient(#8f9292,#858888);border-radius:1px 1px 0 0;"></div><svg style="left:753.8px;top:47.4px;" width="9" height="9" viewBox="0 0 9 9"><rect x="0" y="0" width="2.7" height="2.7" fill="#c02020"/><rect x="2.9" y="0" width="2.7" height="2.7" fill="#2838c0"/><rect x="5.8" y="0" width="2.7" height="2.7" fill="#e8d020"/><rect x="0" y="2.9" width="2.7" height="2.7" fill="#111"/><rect x="2.9" y="2.9" width="2.7" height="2.7" fill="#e02080"/><rect x="5.8" y="2.9" width="2.7" height="2.7" fill="#f0f0f0"/><rect x="0" y="5.8" width="2.7" height="2.7" fill="#28a038"/><rect x="2.9" y="5.8" width="2.7" height="2.7" fill="#d03020"/><rect x="5.8" y="5.8" width="2.7" height="2.7" fill="#111"/></svg><span class="t" style="left:765px;top:50.3px;font-size:5.6px;color:#f2f2f2;letter-spacing:0.017px;">Color Set</span><div style="left:690.6px;top:56.4px;width:71px;height:17px;background:linear-gradient(#8f9292,#7d8080);border-right:0.6px solid #747777;"></div><span class="t" style="left:705px;top:64.4px;font-size:5.4px;color:#f2f2f2;letter-spacing:-0.266px;">Default color set</span><svg style="left:753.6px;top:65.2px;" width="6.4" height="4.2" viewBox="0 0 6.4 4.2"><path d="M0 0 L6.4 0 L3.2 4 Z" fill="#3c3f3f"/></svg><svg style="left:765.4px;top:59.6px;" width="13" height="13" viewBox="0 0 13 13"><path d="M2.2 0.8 L2.2 4.2 L4 5.6 L4 12.4 L6.2 12.4 L6.2 5.6 L8 4.2 L8 0.8 L6.6 0.8 L6.6 3.2 L3.6 3.2 L3.6 0.8 Z" fill="#f4f4f4"/><path d="M9.6 0.6 C12.4 1.4 12.6 4.8 10.4 6 L10.4 12.4 L8.4 12.4 L8.4 5.6" fill="#d6d6d6"/></svg><div style="left:691px;top:74px;width:102px;height:45.4px;background:#7a7d7d;"></div><svg style="left:691.3px;top:74.3px;" width="101.4" height="44.6" viewBox="0 0 101.4 44.6"><rect x="0.00" y="0.00" width="4.70" height="4.59" fill="#2d2a4a"/><rect x="5.05" y="0.00" width="4.70" height="4.59" fill="#f5f0f0"/><rect x="10.10" y="0.00" width="4.70" height="4.59" fill="#f0d0b8"/><rect x="15.15" y="0.00" width="4.70" height="4.59" fill="#5b9ad8"/><rect x="20.20" y="0.00" width="4.70" height="4.59" fill="#e0a088"/><rect x="25.25" y="0.00" width="4.70" height="4.59" fill="#6b4a1e"/><rect x="30.30" y="0.00" width="4.70" height="4.59" fill="#2a1a30"/><rect x="35.35" y="0.00" width="4.70" height="4.59" fill="#4a3618"/><rect x="40.40" y="0.00" width="4.70" height="4.59" fill="#2c6ab0"/><rect x="45.45" y="0.00" width="4.70" height="4.59" fill="#c8c09a"/><rect x="50.50" y="0.00" width="4.70" height="4.59" fill="#2a3020"/><rect x="55.55" y="0.00" width="4.70" height="4.59" fill="#707070"/><rect x="60.60" y="0.00" width="4.70" height="4.59" fill="#f4f0f0"/><rect x="65.65" y="0.00" width="4.70" height="4.59" fill="#b09070"/><rect x="70.70" y="0.00" width="4.70" height="4.59" fill="#4e6e4a"/><rect x="75.75" y="0.00" width="4.70" height="4.59" fill="#d8a890"/><rect x="80.80" y="0.00" width="4.70" height="4.59" fill="#8a8060"/><rect x="85.85" y="0.00" width="4.70" height="4.59" fill="#b09078"/><rect x="90.90" y="0.00" width="4.70" height="4.59" fill="#d8c0a8"/><rect x="95.95" y="0.00" width="4.70" height="4.59" fill="#7890a0"/><rect x="0.00" y="4.94" width="4.70" height="4.59" fill="#8a8a82"/><rect x="5.05" y="4.94" width="4.70" height="4.59" fill="#b8b8b8"/><rect x="10.10" y="4.94" width="4.70" height="4.59" fill="#9a9a9a"/><rect x="15.15" y="4.94" width="4.70" height="4.59" fill="#b0b060"/><rect x="20.20" y="4.94" width="4.70" height="4.59" fill="#707078"/><rect x="25.25" y="4.94" width="4.70" height="4.59" fill="#787880"/><rect x="30.30" y="4.94" width="4.70" height="4.59" fill="#b8b8b0"/><rect x="35.35" y="4.94" width="4.70" height="4.59" fill="#b0a8a0"/><rect x="40.40" y="4.94" width="4.70" height="4.59" fill="#b0a8a0"/><rect x="45.45" y="4.94" width="4.70" height="4.59" fill="#b08a80"/><rect x="50.50" y="4.94" width="4.70" height="4.59" fill="#b0b8b0"/><rect x="55.55" y="4.94" width="4.70" height="4.59" fill="#5a6a48"/><rect x="60.60" y="4.94" width="4.70" height="4.59" fill="#2a4a2a"/><rect x="65.65" y="4.94" width="4.70" height="4.59" fill="#f0f0f0"/><rect x="70.70" y="4.94" width="4.70" height="4.59" fill="#7a2030"/><rect x="75.75" y="4.94" width="4.70" height="4.59" fill="#902838"/><rect x="80.80" y="4.94" width="4.70" height="4.59" fill="#f0e0e0"/><rect x="85.85" y="4.94" width="4.70" height="4.59" fill="#e0b0a0"/><rect x="90.90" y="4.94" width="4.70" height="4.59" fill="#c0b898"/><rect x="95.95" y="4.94" width="4.70" height="4.59" fill="#080808"/><rect x="0.00" y="9.88" width="4.70" height="4.59" fill="#000000"/><rect x="5.05" y="9.88" width="4.70" height="4.59" fill="#000000"/><rect x="10.10" y="9.88" width="4.70" height="4.59" fill="#000000"/><rect x="15.15" y="9.88" width="4.70" height="4.59" fill="#000000"/><rect x="20.20" y="9.88" width="4.70" height="4.59" fill="#ffffff"/><rect x="25.25" y="9.88" width="4.70" height="4.59" fill="#d8d8d8"/><rect x="30.30" y="9.88" width="4.70" height="4.59" fill="#080808"/><rect x="35.35" y="9.88" width="4.70" height="4.59" fill="#1a2a1a"/><rect x="40.40" y="9.88" width="4.70" height="4.59" fill="#283028"/><rect x="45.45" y="9.88" width="4.70" height="4.59" fill="#384038"/><rect x="50.50" y="9.88" width="4.70" height="4.59" fill="#586058"/><rect x="55.55" y="9.88" width="4.70" height="4.59" fill="#808080"/><rect x="60.60" y="9.88" width="4.70" height="4.59" fill="#909090"/><rect x="65.65" y="9.88" width="4.70" height="4.59" fill="#b0b0b0"/><rect x="70.70" y="9.88" width="4.70" height="4.59" fill="#c8c8c8"/><rect x="75.75" y="9.88" width="4.70" height="4.59" fill="#d8d8d8"/><rect x="80.80" y="9.88" width="4.70" height="4.59" fill="#e0e0e0"/><rect x="85.85" y="9.88" width="4.70" height="4.59" fill="#e8e8e8"/><rect x="90.90" y="9.88" width="4.70" height="4.59" fill="#f0f0f0"/><rect x="95.95" y="9.88" width="4.70" height="4.59" fill="#e02818"/><rect x="0.00" y="14.82" width="4.70" height="4.59" fill="#f0f030"/><rect x="5.05" y="14.82" width="4.70" height="4.59" fill="#40f040"/><rect x="10.10" y="14.82" width="4.70" height="4.59" fill="#40f0e0"/><rect x="15.15" y="14.82" width="4.70" height="4.59" fill="#2030e0"/><rect x="20.20" y="14.82" width="4.70" height="4.59" fill="#e040e0"/><rect x="25.25" y="14.82" width="4.70" height="4.59" fill="#384048"/><rect x="30.30" y="14.82" width="4.70" height="4.59" fill="#506070"/><rect x="35.35" y="14.82" width="4.70" height="4.59" fill="#a0b0c0"/><rect x="40.40" y="14.82" width="4.70" height="4.59" fill="#c0c8d8"/><rect x="45.45" y="14.82" width="4.70" height="4.59" fill="#e0e8f0"/><rect x="50.50" y="14.82" width="4.70" height="4.59" fill="#3a4a2a"/><rect x="55.55" y="14.82" width="4.70" height="4.59" fill="#5a6a5a"/><rect x="60.60" y="14.82" width="4.70" height="4.59" fill="#8a7a6a"/><rect x="65.65" y="14.82" width="4.70" height="4.59" fill="#c0a090"/><rect x="70.70" y="14.82" width="4.70" height="4.59" fill="#d8a8a0"/><rect x="75.75" y="14.82" width="4.70" height="4.59" fill="#f0a0b0"/><rect x="80.80" y="14.82" width="4.70" height="4.59" fill="#f0b8b0"/><rect x="85.85" y="14.82" width="4.70" height="4.59" fill="#f0d8a0"/><rect x="90.90" y="14.82" width="4.70" height="4.59" fill="#f0f0a0"/><rect x="95.95" y="14.82" width="4.70" height="4.59" fill="#d0f0a0"/><rect x="0.00" y="19.76" width="4.70" height="4.59" fill="#a0f0c0"/><rect x="5.05" y="19.76" width="4.70" height="4.59" fill="#a0f0e0"/><rect x="10.10" y="19.76" width="4.70" height="4.59" fill="#a0d8f0"/><rect x="15.15" y="19.76" width="4.70" height="4.59" fill="#a0b8f0"/><rect x="20.20" y="19.76" width="4.70" height="4.59" fill="#b0a0f0"/><rect x="25.25" y="19.76" width="4.70" height="4.59" fill="#c8a0f0"/><rect x="30.30" y="19.76" width="4.70" height="4.59" fill="#d8a0f0"/><rect x="35.35" y="19.76" width="4.70" height="4.59" fill="#f0a0e0"/><rect x="40.40" y="19.76" width="4.70" height="4.59" fill="#f0a0c8"/><rect x="45.45" y="19.76" width="4.70" height="4.59" fill="#fce0e8"/><rect x="50.50" y="19.76" width="4.70" height="4.59" fill="#fcf0f0"/><rect x="55.55" y="19.76" width="4.70" height="4.59" fill="#e04858"/><rect x="60.60" y="19.76" width="4.70" height="4.59" fill="#f08050"/><rect x="65.65" y="19.76" width="4.70" height="4.59" fill="#f0b050"/><rect x="70.70" y="19.76" width="4.70" height="4.59" fill="#e8e850"/><rect x="75.75" y="19.76" width="4.70" height="4.59" fill="#a0e850"/><rect x="80.80" y="19.76" width="4.70" height="4.59" fill="#60e870"/><rect x="85.85" y="19.76" width="4.70" height="4.59" fill="#60e8c0"/><rect x="90.90" y="19.76" width="4.70" height="4.59" fill="#60c0e8"/><rect x="95.95" y="19.76" width="4.70" height="4.59" fill="#6090e8"/><rect x="0.00" y="24.70" width="4.70" height="4.59" fill="#6060e0"/><rect x="5.05" y="24.70" width="4.70" height="4.59" fill="#9050e0"/><rect x="10.10" y="24.70" width="4.70" height="4.59" fill="#c050e0"/><rect x="15.15" y="24.70" width="4.70" height="4.59" fill="#e050c0"/><rect x="20.20" y="24.70" width="4.70" height="4.59" fill="#e05090"/><rect x="25.25" y="24.70" width="4.70" height="4.59" fill="#fcd0d8"/><rect x="30.30" y="24.70" width="4.70" height="4.59" fill="#fce0d8"/><rect x="35.35" y="24.70" width="4.70" height="4.59" fill="#e02028"/><rect x="40.40" y="24.70" width="4.70" height="4.59" fill="#f07020"/><rect x="45.45" y="24.70" width="4.70" height="4.59" fill="#f0b020"/><rect x="50.50" y="24.70" width="4.70" height="4.59" fill="#f0f020"/><rect x="55.55" y="24.70" width="4.70" height="4.59" fill="#a0f030"/><rect x="60.60" y="24.70" width="4.70" height="4.59" fill="#50f050"/><rect x="65.65" y="24.70" width="4.70" height="4.59" fill="#40f0c0"/><rect x="70.70" y="24.70" width="4.70" height="4.59" fill="#30c0f0"/><rect x="75.75" y="24.70" width="4.70" height="4.59" fill="#2070e8"/><rect x="80.80" y="24.70" width="4.70" height="4.59" fill="#2030e0"/><rect x="85.85" y="24.70" width="4.70" height="4.59" fill="#6020e0"/><rect x="90.90" y="24.70" width="4.70" height="4.59" fill="#b020e0"/><rect x="95.95" y="24.70" width="4.70" height="4.59" fill="#e020a0"/><rect x="0.00" y="29.64" width="4.70" height="4.59" fill="#e02070"/><rect x="5.05" y="29.64" width="4.70" height="4.59" fill="#fcd0d0"/><rect x="10.10" y="29.64" width="4.70" height="4.59" fill="#fcd8c8"/><rect x="15.15" y="29.64" width="4.70" height="4.59" fill="#c03048"/><rect x="20.20" y="29.64" width="4.70" height="4.59" fill="#c06840"/><rect x="25.25" y="29.64" width="4.70" height="4.59" fill="#c09838"/><rect x="30.30" y="29.64" width="4.70" height="4.59" fill="#c0b838"/><rect x="35.35" y="29.64" width="4.70" height="4.59" fill="#88c040"/><rect x="40.40" y="29.64" width="4.70" height="4.59" fill="#48c050"/><rect x="45.45" y="29.64" width="4.70" height="4.59" fill="#40b890"/><rect x="50.50" y="29.64" width="4.70" height="4.59" fill="#4098b8"/><rect x="55.55" y="29.64" width="4.70" height="4.59" fill="#4068c0"/><rect x="60.60" y="29.64" width="4.70" height="4.59" fill="#3840b8"/><rect x="65.65" y="29.64" width="4.70" height="4.59" fill="#6838b8"/><rect x="70.70" y="29.64" width="4.70" height="4.59" fill="#9838b0"/><rect x="75.75" y="29.64" width="4.70" height="4.59" fill="#b83098"/><rect x="80.80" y="29.64" width="4.70" height="4.59" fill="#b03070"/><rect x="85.85" y="29.64" width="4.70" height="4.59" fill="#fcd8d0"/><rect x="90.90" y="29.64" width="4.70" height="4.59" fill="#e8c0b0"/><rect x="95.95" y="29.64" width="4.70" height="4.59" fill="#600818"/><rect x="0.00" y="34.58" width="4.70" height="4.59" fill="#6a2818"/><rect x="5.05" y="34.58" width="4.70" height="4.59" fill="#6a4810"/><rect x="10.10" y="34.58" width="4.70" height="4.59" fill="#5a6a10"/><rect x="15.15" y="34.58" width="4.70" height="4.59" fill="#3a7a18"/><rect x="20.20" y="34.58" width="4.70" height="4.59" fill="#207a28"/><rect x="25.25" y="34.58" width="4.70" height="4.59" fill="#187a50"/><rect x="30.30" y="34.58" width="4.70" height="4.59" fill="#186878"/><rect x="35.35" y="34.58" width="4.70" height="4.59" fill="#184888"/><rect x="40.40" y="34.58" width="4.70" height="4.59" fill="#101c78"/><rect x="45.45" y="34.58" width="4.70" height="4.59" fill="#301078"/><rect x="50.50" y="34.58" width="4.70" height="4.59" fill="#501078"/><rect x="55.55" y="34.58" width="4.70" height="4.59" fill="#700c60"/><rect x="60.60" y="34.58" width="4.70" height="4.59" fill="#700c38"/><rect x="65.65" y="34.58" width="4.70" height="4.59" fill="#fcc8b0"/><rect x="70.70" y="34.58" width="4.70" height="4.59" fill="#e0a890"/><rect x="75.75" y="34.58" width="4.70" height="4.59" fill="#480808"/><rect x="80.80" y="34.58" width="4.70" height="4.59" fill="#481808"/><rect x="85.85" y="34.58" width="4.70" height="4.59" fill="#383008"/><rect x="90.90" y="34.58" width="4.70" height="4.59" fill="#283808"/><rect x="95.95" y="34.58" width="4.70" height="4.59" fill="#304818"/><rect x="0.00" y="39.52" width="4.70" height="4.59" fill="#103818"/><rect x="5.05" y="39.52" width="4.70" height="4.59" fill="#103830"/><rect x="10.10" y="39.52" width="4.70" height="4.59" fill="#103040"/><rect x="15.15" y="39.52" width="4.70" height="4.59" fill="#102048"/><rect x="20.20" y="39.52" width="4.70" height="4.59" fill="#101048"/><rect x="25.25" y="39.52" width="4.70" height="4.59" fill="#200840"/><rect x="30.30" y="39.52" width="4.70" height="4.59" fill="#300840"/><rect x="35.35" y="39.52" width="4.70" height="4.59" fill="#400830"/><rect x="40.40" y="39.52" width="4.70" height="4.59" fill="#400818"/><rect x="45.45" y="39.52" width="4.70" height="4.59" fill="#c09878"/><rect x="50.50" y="39.52" width="4.70" height="4.59" fill="#f0d0b0"/><rect x="0.3" y="10.18" width="4.05" height="3.94" fill="none" stroke="#fff" stroke-width="0.6"/></svg><div style="left:691.6px;top:135.6px;width:5.2px;height:5.6px;background:#a02632;border:0.5px solid #74605f;"></div><div style="left:711.4px;top:135.6px;width:5.2px;height:5.6px;background:#44a644;border:0.5px solid #74605f;"></div><div style="left:731.6px;top:135.6px;width:5.2px;height:5.6px;background:#3434b2;border:0.5px solid #74605f;"></div><svg style="left:749px;top:130px;" width="12" height="12" viewBox="0 0 12 12"><path d="M0.6 0.8 L4.6 4.4 L2.8 4.6 L3.8 6.6 L3 7 L2 5 L0.8 6.2 Z" fill="#fff" stroke="#333" stroke-width="0.4"/><rect x="4.6" y="6" width="6.6" height="5.4" fill="#f2f2f2" stroke="#3a3a3a" stroke-width="0.7"/><path d="M4.6 8 L11.2 8 M7.8 6 L7.8 11.4" stroke="#3a3a3a" stroke-width="0.6"/></svg><svg style="left:766px;top:130px;" width="12" height="12" viewBox="0 0 12 12"><circle cx="4.6" cy="4.6" r="3.8" fill="#6a6a6a"/><circle cx="3.6" cy="3.6" r="1.6" fill="#a5a5a5"/><path d="M8.6 6.4 L8.6 11.6 M6 9 L11.2 9" stroke="#2c2c2c" stroke-width="1.4"/></svg><svg style="left:783px;top:130px;" width="11" height="12" viewBox="0 0 11 12"><path d="M1.6 4 L9.4 4 L8.6 11.6 L2.4 11.6 Z" fill="#f4f4f4"/><rect x="0.6" y="2" width="9.8" height="1.9" fill="#ededed"/><rect x="3.8" y="0.6" width="3.4" height="1.4" fill="#e2e2e2"/><path d="M4 5.4 L4.2 10.2 M7 5.4 L6.8 10.2" stroke="#9c9c9c" stroke-width="0.7"/></svg><div style="left:690px;top:146.6px;width:105px;height:11.4px;background:linear-gradient(#626262,#515151);"></div><svg style="left:694px;top:150px;" width="5.4" height="5" viewBox="0 0 5.4 5"><path d="M0 0.6 L1 0.6 M2 0.6 L5.4 0.6 M0 2.5 L1 2.5 M2 2.5 L5.4 2.5 M0 4.4 L1 4.4 M2 4.4 L5.4 4.4" stroke="#9c9c9c" stroke-width="0.8"/></svg><div style="left:704px;top:147.6px;width:48.6px;height:10.4px;background:linear-gradient(#8f9292,#858888);border-radius:1px 1px 0 0;"></div><svg style="left:706px;top:148px;" width="11" height="9" viewBox="0 0 11 9"><path d="M1 5.4 C3.4 4.8 6 2.6 8.8 0.6" stroke="#c01818" stroke-width="1.4" fill="none"/><path d="M1 8 L9.6 8" stroke="#1a1a1a" stroke-width="1.7"/></svg><span class="t" style="left:719.4px;top:151.8px;font-size:5.6px;color:#f2f2f2;letter-spacing:-0.374px;">Layer Property</span><div style="left:753px;top:148.6px;width:18px;height:9.4px;background:#6f7171;"></div><svg style="left:757.4px;top:150.8px;" width="9" height="6" viewBox="0 0 9 6"><path d="M0.6 2.4 C2.4 0.2 6.6 0.2 8.4 2.4 M0.6 4.8 C2.4 2.6 6.6 2.6 8.4 4.8" stroke="#a5a5a5" stroke-width="0.9" fill="none"/></svg><div style="left:692.4px;top:158.6px;width:100px;height:65.4px;border:0.6px solid #7b7e7e;"></div><span class="t" style="left:694.4px;top:162.8px;font-size:5.5px;color:#f2f2f2;letter-spacing:-0.410px;">Effect</span><div style="left:725px;top:168.2px;width:64px;height:14px;background:#7f8282;border-radius:1px;"></div><div style="left:766.6px;top:168.6px;width:14.4px;height:13.2px;background:#b4c5cf;border:0.6px solid #d5e0e6;"></div><div style="left:727.6px;top:170.4px;width:9.6px;height:9.6px;border-radius:50%;background:#333;border:1.6px solid #f6f6f6;"></div><div style="left:741px;top:170px;width:10.4px;height:10.4px;border-radius:50%;background:radial-gradient(circle at 60% 55%,#4f9ae6 55%,#2f6fc0);border:0.6px solid #2b64b0;"></div><div style="left:755.4px;top:170.2px;width:9.6px;height:9.8px;background:repeating-conic-gradient(#2c2c2c 0 25%,#9a9a9a 0 50%) 0 0/2px 2px;"></div><div style="left:769px;top:170.4px;width:9.8px;height:9.6px;background:#6fc3f2;border:0.7px solid #d7eefb;"></div><svg style="left:782.6px;top:173.6px;" width="6" height="4" viewBox="0 0 6 4"><path d="M0 0 L6 0 L3 3.8 Z" fill="#3a3d3d"/></svg><svg style="left:694px;top:189.2px;" width="5" height="5" viewBox="0 0 5 5"><path d="M2.5 0 L2.5 5 M0 2.5 L5 2.5" stroke="#d8d8d8" stroke-width="0.8"/></svg><span class="t" style="left:701px;top:188.6px;font-size:5.5px;color:#f2f2f2;letter-spacing:-0.383px;">Layer color</span><div style="left:727px;top:185.6px;width:49.6px;height:12.6px;background:#d52116;border:0.7px solid #5c5f5f;"></div><div style="left:779px;top:185.6px;width:10.4px;height:12.6px;background:#7d8080;border:0.6px solid #6c6f6f;"></div><svg style="left:783px;top:189.8px;" width="3" height="4.4" viewBox="0 0 3 4.4"><path d="M0 0 L2.8 2.2 L0 4.4 Z" fill="#2e2e2e"/></svg><span class="t" style="left:694.4px;top:202px;font-size:5.5px;color:#f2f2f2;letter-spacing:-0.447px;">Expression color</span><div style="left:700.4px;top:210.4px;width:57.4px;height:14px;background:linear-gradient(#8d9090,#7e8181);border:0.6px solid #737676;border-radius:1.5px;"></div><div style="left:711.4px;top:212.8px;width:3.6px;height:9.4px;background:#f0788a;"></div><div style="left:715px;top:212.8px;width:3.6px;height:9.4px;background:#86a8f0;"></div><div style="left:718.6px;top:212.8px;width:3.6px;height:9.4px;background:#9cf090;"></div><span class="t" style="left:726px;top:215px;font-size:5.5px;color:#f2f2f2;letter-spacing:-0.529px;">Color</span><svg style="left:748px;top:215.8px;" width="6.4" height="4.2" viewBox="0 0 6.4 4.2"><path d="M0 0 L6.4 0 L3.2 4 Z" fill="#35383a"/></svg><div style="left:690px;top:227.4px;width:105px;height:11.2px;background:linear-gradient(#626262,#515151);"></div><svg style="left:694px;top:230.4px;" width="5.4" height="5" viewBox="0 0 5.4 5"><path d="M0 0.6 L1 0.6 M2 0.6 L5.4 0.6 M0 2.5 L1 2.5 M2 2.5 L5.4 2.5 M0 4.4 L1 4.4 M2 4.4 L5.4 4.4" stroke="#9c9c9c" stroke-width="0.8"/></svg><div style="left:704px;top:228.2px;width:29.6px;height:10.4px;background:linear-gradient(#8f9292,#858888);border-radius:1px 1px 0 0;"></div><svg style="left:707px;top:229.4px;" width="10" height="8.6" viewBox="0 0 10 8.6"><path d="M1 2.2 C3 0.4 7 0.4 9 2.2 C7 3.8 3 3.8 1 2.2 Z" fill="#f0f0f0"/><path d="M1 4.4 C3 6 7 6 9 4.4 M1 6.4 C3 8 7 8 9 6.4" stroke="#efefef" stroke-width="1" fill="none"/><path d="M0.6 8.2 L9.6 8.2" stroke="#2a2a2a" stroke-width="0.8"/></svg><span class="t" style="left:719.6px;top:232.8px;font-size:5.6px;color:#f2f2f2;letter-spacing:-0.602px;">Layer</span><div style="left:735px;top:229px;width:16.4px;height:9.6px;background:#6f7171;"></div><svg style="left:738.4px;top:230.4px;" width="10" height="7.4" viewBox="0 0 10 7.4"><path d="M1 6.6 L1 3 C1 0.6 4.4 0.6 4.4 3 L4.4 6.6 M5.4 1 L5.4 4.6 C5.4 7 9 7 9 4.6 L9 1" stroke="#e2e2e2" stroke-width="1.2" fill="none"/></svg><div style="left:752.6px;top:229px;width:16.4px;height:9.6px;background:#6f7171;"></div><svg style="left:756.4px;top:231px;" width="9" height="6" viewBox="0 0 9 6"><path d="M0.6 0.8 L8.4 5.4 M0.6 5.4 L8.4 0.8" stroke="#8f9191" stroke-width="0.9"/></svg><div style="left:691.4px;top:242px;width:53px;height:13.4px;background:linear-gradient(#8d9090,#7e8181);border:0.6px solid #737676;border-radius:1.5px;"></div><span class="t" style="left:705px;top:247.2px;font-size:5.4px;color:#f2f2f2;letter-spacing:-0.567px;">Normal</span><svg style="left:735px;top:247.2px;" width="6.4" height="4.2" viewBox="0 0 6.4 4.2"><path d="M0 0 L6.4 0 L3.2 4 Z" fill="#35383a"/></svg><div style="left:746.8px;top:245px;width:26px;height:5.6px;background:linear-gradient(90deg,#f2f2f2,#c9c9c9);border:0.5px solid #6c6f6f;"></div><svg style="left:747.4px;top:245.6px;" width="14" height="4.4" viewBox="0 0 14 4.4"><path d="M0.4 0.4 L2.6 4 M2.6 0.4 L0.4 4 M3.4 0.4 L5.6 4 M5.6 0.4 L3.4 4 M6.4 0.4 L8.6 4 M8.6 0.4 L6.4 4 M9.4 0.4 L11.6 4 M11.6 0.4 L9.4 4" stroke="#b7b7b7" stroke-width="0.6"/></svg><div style="left:774.4px;top:241px;width:0.8px;height:16px;background:#9a9d9d;"></div><span class="t" style="left:778.6px;top:247px;font-size:5.4px;color:#f2f2f2;letter-spacing:-0.537px;">100</span><svg style="left:789px;top:244.6px;" width="4.2" height="8.4" viewBox="0 0 4.2 8.4"><path d="M2.1 0.4 L4 3.1 L0.2 3.1 Z M2.1 8 L4 5.3 L0.2 5.3 Z" fill="#2e2e2e"/></svg><svg style="left:708px;top:260.6px;" width="13" height="9.4" viewBox="0 0 13 9.4"><ellipse cx="6.5" cy="5.4" rx="6" ry="3.6" fill="#2b2b2b"/><ellipse cx="6.5" cy="3.6" rx="6" ry="3.2" fill="#474747" stroke="#1f1f1f" stroke-width="0.6"/><ellipse cx="6.5" cy="3.4" rx="4.2" ry="1.9" fill="#6a6a6a"/></svg><svg style="left:727.4px;top:259px;" width="7" height="12.4" viewBox="0 0 7 12.4"><rect x="1.8" y="0.4" width="3.4" height="2.2" fill="#f0f0f0"/><path d="M0.4 3 L6.6 3 L5 5.2 L5 11.6 L2 11.6 L2 5.2 Z" fill="#d9d9d9"/><rect x="2.6" y="6" width="1.8" height="3" fill="#555"/></svg><svg style="left:745px;top:259.4px;" width="9" height="12" viewBox="0 0 9 12"><path d="M2.2 5 L2.2 3.2 C2.2 0.4 6.8 0.4 6.8 3.2 L6.8 5" stroke="#595c5c" stroke-width="1.2" fill="none"/><rect x="0.6" y="5" width="7.8" height="6.4" rx="0.8" fill="#6d7070" stroke="#555858" stroke-width="0.5"/><circle cx="4.5" cy="8" r="1.1" fill="#474a4a"/></svg><svg style="left:761.4px;top:259px;" width="11" height="12" viewBox="0 0 11 12"><path d="M1.6 4 L1.6 2.4 C1.6 0.2 5 0.2 5 2.4" stroke="#f0f0f0" stroke-width="0.9" fill="none"/><rect x="0.6" y="4" width="5.4" height="4.2" fill="#f4f4f4"/><rect x="2.4" y="5.4" width="1.6" height="1.6" fill="#333"/><rect x="5.6" y="7" width="2.6" height="2.6" fill="#f4f4f4"/><rect x="8.2" y="9.6" width="2.6" height="2.4" fill="#f4f4f4"/><rect x="8.2" y="7" width="2.6" height="2.6" fill="#4a4a4a"/><rect x="5.6" y="9.6" width="2.6" height="2.4" fill="#4a4a4a"/></svg><div style="left:778.6px;top:258.6px;width:14.4px;height:12.8px;background:#979a9a;border:0.5px solid #a9acac;"></div><svg style="left:780.4px;top:260.6px;" width="11" height="9" viewBox="0 0 11 9"><rect x="0.4" y="0.4" width="6" height="5.6" fill="#a7aaaa" stroke="#8a8d8d" stroke-width="0.5"/><path d="M5 4.2 L10.6 4.2 L7.8 8 Z" fill="#6f7272"/></svg><div style="left:691.6px;top:273.9px;width:100px;height:0.7px;background:#666969;"></div><div style="left:691.6px;top:274.5px;width:100px;height:17px;background:linear-gradient(#9fb4bf,#8aa0ac);border-bottom:0.8px solid #646767;"></div><div style="left:691.6px;top:274.5px;width:30px;height:16.2px;background:#868989;"></div><div style="left:706.8px;top:274.5px;width:0.7px;height:17px;background:#6f7272;"></div><div style="left:721px;top:274.5px;width:0.7px;height:17px;background:#6f7272;"></div><svg style="left:695.4px;top:280.1px;" width="8" height="5.4" viewBox="0 0 10 6.6"><path d="M0.4 3.4 C2.4 0.2 7.6 0.2 9.6 3.4 C7.6 6.4 2.4 6.4 0.4 3.4 Z" fill="#e9e9e9"/><circle cx="5" cy="3.3" r="2.1" fill="#1d1d1d"/><circle cx="4.4" cy="2.7" r="0.6" fill="#ddd"/></svg><svg style="left:709.4px;top:277.5px;" width="9.6" height="10.6" viewBox="0 0 9.6 10.6"><path d="M1 9.8 L1.6 7.8 L6.2 3 L7.4 4.2 L2.8 9 Z" fill="#eaeaea"/><path d="M5.6 2.4 L7.6 0.6 L9.2 2.2 L7.6 4.4 Z" fill="#1d1d1d"/></svg><div style="left:722px;top:274.9px;width:14.6px;height:15.6px;background:#2c3033;"></div><div style="left:724.2px;top:275.5px;width:11px;height:14.2px;background:repeating-conic-gradient(#f6f6f6 0 25%,#dcdcdc 0 50%) 0 0/2.6px 2.6px;"></div><div style="left:739px;top:275.9px;width:12.8px;height:12.6px;background:linear-gradient(135deg,#f3c0cc 10%,#e6f0f6 45%,#bfe8c8 90%);border:0.5px solid #d8d8d8;"></div><div style="left:741px;top:283.3px;width:5.2px;height:4.4px;background:#c01820;"></div><span class="t" style="left:753.6px;top:277.1px;font-size:5.3px;color:#f2f2f2;letter-spacing:-0.496px;">100 %  Normal</span><span class="t" style="left:753.6px;top:285.3px;font-size:5.3px;color:#f2f2f2;letter-spacing:-0.224px;">Layer 3</span><div style="left:691.6px;top:291.5px;width:100px;height:17px;background:#868989;border-bottom:0.8px solid #646767;"></div><div style="left:706.8px;top:291.5px;width:0.7px;height:17px;background:#6f7272;"></div><div style="left:721px;top:291.5px;width:0.7px;height:17px;background:#6f7272;"></div><svg style="left:695.4px;top:297.1px;" width="8" height="5.4" viewBox="0 0 10 6.6"><path d="M0.4 3.4 C2.4 0.2 7.6 0.2 9.6 3.4 C7.6 6.4 2.4 6.4 0.4 3.4 Z" fill="#e9e9e9"/><circle cx="5" cy="3.3" r="2.1" fill="#1d1d1d"/><circle cx="4.4" cy="2.7" r="0.6" fill="#ddd"/></svg><div style="left:722px;top:291.9px;width:14.6px;height:15.6px;background:#5d6060;"></div><div style="left:724.2px;top:292.5px;width:11px;height:14.2px;background:repeating-conic-gradient(#f6f6f6 0 25%,#dcdcdc 0 50%) 0 0/2.6px 2.6px;"></div><span class="t" style="left:739.4px;top:294.1px;font-size:5.3px;color:#f2f2f2;letter-spacing:-0.496px;">100 %  Normal</span><span class="t" style="left:739.4px;top:302.3px;font-size:5.3px;color:#f2f2f2;letter-spacing:-0.355px;">Layer 2 Copy</span><div style="left:691.6px;top:308.5px;width:100px;height:17px;background:#868989;border-bottom:0.8px solid #646767;"></div><div style="left:706.8px;top:308.5px;width:0.7px;height:17px;background:#6f7272;"></div><div style="left:721px;top:308.5px;width:0.7px;height:17px;background:#6f7272;"></div><svg style="left:695.4px;top:314.1px;" width="8" height="5.4" viewBox="0 0 10 6.6"><path d="M0.4 3.4 C2.4 0.2 7.6 0.2 9.6 3.4 C7.6 6.4 2.4 6.4 0.4 3.4 Z" fill="#e9e9e9"/><circle cx="5" cy="3.3" r="2.1" fill="#1d1d1d"/><circle cx="4.4" cy="2.7" r="0.6" fill="#ddd"/></svg><div style="left:722px;top:308.9px;width:14.6px;height:15.6px;background:#5d6060;"></div><div style="left:724.2px;top:309.5px;width:11px;height:14.2px;background:repeating-conic-gradient(#f6f6f6 0 25%,#dcdcdc 0 50%) 0 0/2.6px 2.6px;"></div><span class="t" style="left:739.4px;top:311.1px;font-size:5.3px;color:#f2f2f2;letter-spacing:-0.496px;">100 %  Normal</span><span class="t" style="left:739.4px;top:319.3px;font-size:5.3px;color:#f2f2f2;letter-spacing:-0.224px;">Layer 2</span><div style="left:691.6px;top:325.5px;width:100px;height:17px;background:#868989;border-bottom:0.8px solid #646767;"></div><div style="left:706.8px;top:325.5px;width:0.7px;height:17px;background:#6f7272;"></div><div style="left:721px;top:325.5px;width:0.7px;height:17px;background:#6f7272;"></div><div style="left:722px;top:325.9px;width:14.6px;height:15.6px;background:#5d6060;"></div><div style="left:724.2px;top:326.5px;width:11px;height:14.2px;background:repeating-conic-gradient(#f6f6f6 0 25%,#dcdcdc 0 50%) 0 0/2.6px 2.6px;"></div><div style="left:739px;top:326.9px;width:12.8px;height:12.6px;background:linear-gradient(135deg,#f3c0cc 10%,#e6f0f6 45%,#bfe8c8 90%);border:0.5px solid #d8d8d8;"></div><div style="left:741px;top:334.3px;width:5.2px;height:4.4px;background:#3c64c8;"></div><span class="t" style="left:753.6px;top:328.1px;font-size:5.3px;color:#f2f2f2;letter-spacing:-0.496px;">100 %  Normal</span><span class="t" style="left:753.6px;top:336.3px;font-size:5.3px;color:#f2f2f2;letter-spacing:-0.224px;">Layer 1</span><div style="left:691.6px;top:342.5px;width:100px;height:17px;background:#868989;border-bottom:0.8px solid #646767;"></div><div style="left:706.8px;top:342.5px;width:0.7px;height:17px;background:#6f7272;"></div><div style="left:721px;top:342.5px;width:0.7px;height:17px;background:#6f7272;"></div><svg style="left:695.4px;top:348.1px;" width="8" height="5.4" viewBox="0 0 10 6.6"><path d="M0.4 3.4 C2.4 0.2 7.6 0.2 9.6 3.4 C7.6 6.4 2.4 6.4 0.4 3.4 Z" fill="#e9e9e9"/><circle cx="5" cy="3.3" r="2.1" fill="#1d1d1d"/><circle cx="4.4" cy="2.7" r="0.6" fill="#ddd"/></svg><div style="left:722.6px;top:343.7px;width:14px;height:14.4px;background:#fff;border:0.5px solid #d5d5d5;"></div><svg style="left:739.8px;top:343.7px;" width="12" height="13" viewBox="0 0 12 13"><path d="M0.6 0.6 L8 0.6 L11.2 3.8 L11.2 12.4 L0.6 12.4 Z" fill="#f4f4f4" stroke="#fff" stroke-width="0.8"/><path d="M7.2 1.4 L7.2 4.6 L10.6 4.6" fill="#e0e0e0" stroke="#6a6a6a" stroke-width="0.6"/></svg><span class="t" style="left:753.4px;top:351.9px;font-size:5.4px;color:#f2f2f2;letter-spacing:-0.602px;">Paper</span><div style="left:691.6px;top:433px;width:100px;height:0.7px;background:#707373;"></div><svg style="left:695px;top:434.4px;" width="10.4" height="12" viewBox="0 0 10.4 12"><path d="M0.6 0.6 L9.8 0.6 L9.8 7.6 L6.4 11.4 L0.6 11.4 Z" fill="#f6f6f6"/><path d="M9.8 7.6 L6.4 7.6 L6.4 11.4 Z" fill="#b9b9b9"/><rect x="4.4" y="8.6" width="2.6" height="2.6" fill="#5a5a5a"/></svg><svg style="left:712px;top:435px;" width="11.4" height="11" viewBox="0 0 11.4 11"><path d="M0.6 1 L4 1 L5 2.2 L8 2.2 L8 8.8 L0.6 8.8 Z" fill="#cfcfcf"/><path d="M4.4 3.4 L10.8 3.4 L10.8 10.4 L4.4 10.4 Z" fill="#f4f4f4" stroke="#9a9a9a" stroke-width="0.5"/></svg><svg style="left:730.4px;top:435px;" width="8.4" height="11" viewBox="0 0 8.4 11"><path d="M4.2 0.4 L4.2 4" stroke="#fff" stroke-width="1"/><path d="M1.6 3.6 L6.8 3.6 L4.2 6.6 Z" fill="#fff"/><ellipse cx="4.2" cy="8.6" rx="3.8" ry="2" fill="#2f2f2f" stroke="#e2e2e2" stroke-width="0.6"/></svg><svg style="left:747.6px;top:435px;" width="8.4" height="11" viewBox="0 0 8.4 11"><path d="M4.2 0.4 L4.2 4" stroke="#fff" stroke-width="1"/><path d="M1.6 3.6 L6.8 3.6 L4.2 6.6 Z" fill="#fff"/><ellipse cx="4.2" cy="8.2" rx="3.8" ry="1.8" fill="#2f2f2f" stroke="#e2e2e2" stroke-width="0.6"/><path d="M0.6 10.6 L7.8 10.6" stroke="#ededed" stroke-width="0.9"/></svg><svg style="left:764px;top:435.8px;" width="12.4" height="9.4" viewBox="0 0 12.4 9.4"><rect x="0.5" y="0.5" width="11.4" height="8.4" fill="#3a3a3a" stroke="#ededed" stroke-width="1"/><circle cx="6.2" cy="4.7" r="2.3" fill="#f4f4f4"/></svg><svg style="left:782.6px;top:434.4px;" width="10.4" height="12" viewBox="0 0 10.4 12"><path d="M1.6 4 L8.8 4 L8 11.6 L2.4 11.6 Z" fill="#f4f4f4"/><rect x="0.6" y="2" width="9.2" height="1.9" fill="#ededed"/><rect x="3.6" y="0.6" width="3.2" height="1.4" fill="#e2e2e2"/><path d="M3.8 5.4 L4 10.2 M6.6 5.4 L6.4 10.2" stroke="#9c9c9c" stroke-width="0.7"/></svg><div style="left:791.8px;top:56px;width:3.2px;height:390px;background:#7b7e7e;"></div></div></div></body></html>
